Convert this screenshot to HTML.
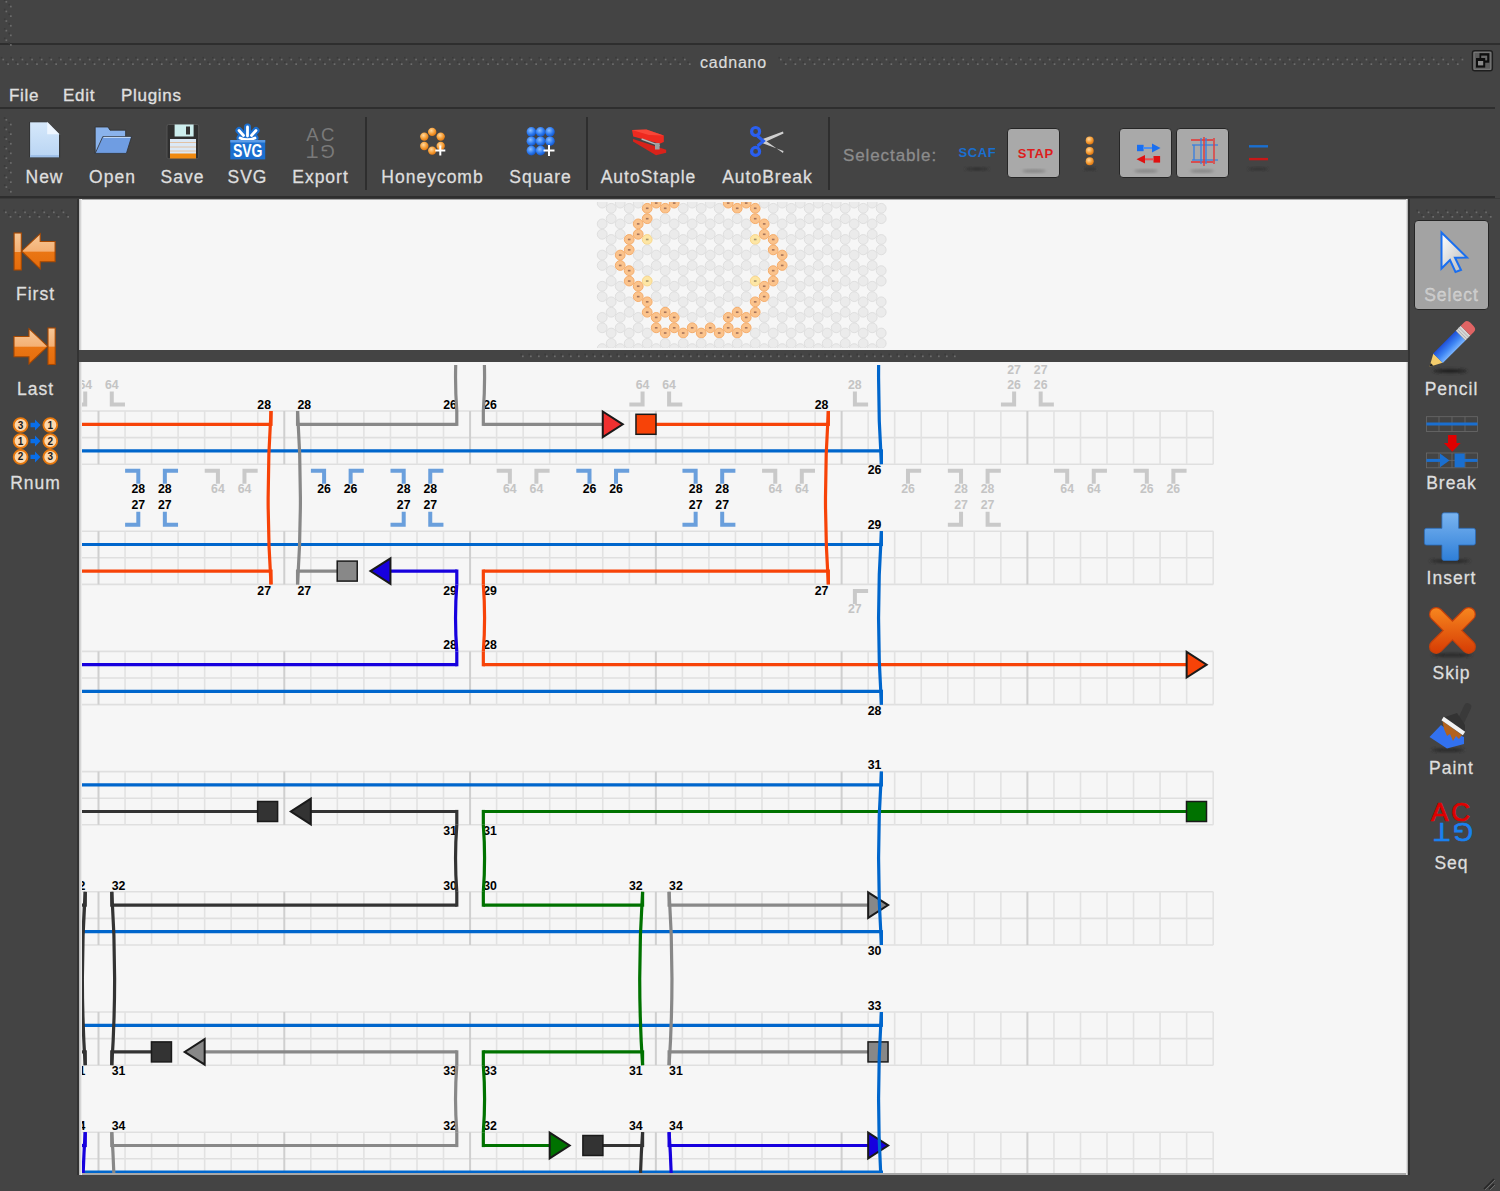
<!DOCTYPE html>
<html><head><meta charset="utf-8">
<style>
*{margin:0;padding:0;box-sizing:border-box}
html,body{width:1500px;height:1191px;overflow:hidden;background:#444444;font-family:"Liberation Sans",sans-serif}
.a{position:absolute}
.lbl{position:absolute;color:#dedede;font-size:17.5px;letter-spacing:1px;-webkit-text-stroke:0.3px #dedede;white-space:nowrap;transform:translateX(-50%);line-height:1;text-indent:1px}
.hl{position:absolute;left:0;width:1500px;height:2px;background:#2e2e2e}
.sep{position:absolute;width:2px;background:#2e2e2e;top:117px;height:73px}
.pl{font:bold 12.3px "Liberation Sans",sans-serif;text-anchor:middle}
.xl{font:bold 12.3px "Liberation Sans",sans-serif;text-anchor:middle;fill:#000}
</style></head><body>
<!-- top dark strip -->
<div class="hl" style="top:43px"></div>
<!-- title bar -->
<div class="a" style="left:700px;top:54px;font-size:16px;letter-spacing:0.8px;-webkit-text-stroke:0.2px #dcdcdc;color:#dcdcdc">cadnano</div>
<!-- menu -->
<div class="a" style="left:9px;top:86px;font-size:17px;letter-spacing:0.7px;-webkit-text-stroke:0.3px #e0e0e0;color:#e0e0e0">File</div>
<div class="a" style="left:63px;top:86px;font-size:17px;letter-spacing:0.7px;-webkit-text-stroke:0.3px #e0e0e0;color:#e0e0e0">Edit</div>
<div class="a" style="left:121px;top:86px;font-size:17px;letter-spacing:0.7px;-webkit-text-stroke:0.3px #e0e0e0;color:#e0e0e0">Plugins</div>
<div class="hl" style="top:107px;width:1495px;background:#2e2e2e"></div>
<!-- toolbar -->
<div class="sep" style="left:365px"></div>
<div class="sep" style="left:586px"></div>
<div class="sep" style="left:828px"></div>
<div class="lbl" style="left:44px;top:169px">New</div>
<div class="lbl" style="left:112px;top:169px">Open</div>
<div class="lbl" style="left:182px;top:169px">Save</div>
<div class="lbl" style="left:247px;top:169px">SVG</div>
<div class="lbl" style="left:320px;top:169px">Export</div>
<div class="lbl" style="left:432px;top:169px">Honeycomb</div>
<div class="lbl" style="left:540px;top:169px">Square</div>
<div class="lbl" style="left:648px;top:169px">AutoStaple</div>
<div class="lbl" style="left:767px;top:169px">AutoBreak</div>
<div class="a" style="left:843px;top:146px;font-size:17px;letter-spacing:0.9px;-webkit-text-stroke:0.3px #8c8c8c;color:#8c8c8c">Selectable:</div>
<div class="a" style="left:1007px;top:128px;width:53px;height:50px;background:#a9a9a9;border:1px solid #262626;border-radius:4px"></div>
<div class="a" style="left:1119px;top:128px;width:53px;height:50px;background:#a9a9a9;border:1px solid #262626;border-radius:4px"></div>
<div class="a" style="left:1176px;top:128px;width:53px;height:50px;background:#a9a9a9;border:1px solid #262626;border-radius:4px"></div>
<div class="hl" style="top:196px;height:2px;width:1495px;background:#2e2e2e"></div><div class="a" style="left:0;top:198px;width:1500px;height:1px;background:#3a3a3a"></div>

<!-- left sidebar labels -->
<div class="lbl" style="left:35px;top:286px">First</div>
<div class="lbl" style="left:35px;top:381px">Last</div>
<div class="lbl" style="left:35px;top:475px">Rnum</div>
<!-- right sidebar -->
<div class="a" style="left:1414px;top:220px;width:75px;height:90px;background:#a3a3a3;border:1px solid #262626;border-radius:4px"></div>
<div class="lbl" style="left:1451px;top:287px;color:#c8c8c8">Select</div>
<div class="lbl" style="left:1451px;top:381px">Pencil</div>
<div class="lbl" style="left:1451px;top:475px">Break</div>
<div class="lbl" style="left:1451px;top:570px">Insert</div>
<div class="lbl" style="left:1451px;top:665px">Skip</div>
<div class="lbl" style="left:1451px;top:760px">Paint</div>
<div class="lbl" style="left:1451px;top:855px">Seq</div>

<!-- slice view -->
<div class="a" style="left:79px;top:199px;width:1329px;height:151px;background:#f6f6f6;border-top:1px solid #a8a8a8"></div>
<svg class="a" style="left:0;top:0" width="1500" height="1191" viewBox="0 0 1500 1191">
<defs><clipPath id="cs"><rect x="82" y="202" width="1323" height="146"/></clipPath>
<clipPath id="cp"><rect x="82" y="365" width="1323" height="808"/></clipPath></defs>
<g clip-path="url(#cs)">
<circle cx="602.20" cy="192.71" r="4.9" fill="#ebebeb" stroke="#dfdfdf" stroke-width="1"/>
<circle cx="602.20" cy="203.10" r="4.9" fill="#ebebeb" stroke="#dfdfdf" stroke-width="1"/>
<circle cx="602.20" cy="223.89" r="4.9" fill="#ebebeb" stroke="#dfdfdf" stroke-width="1"/>
<circle cx="602.20" cy="234.28" r="4.9" fill="#ebebeb" stroke="#dfdfdf" stroke-width="1"/>
<circle cx="602.20" cy="255.07" r="4.9" fill="#ebebeb" stroke="#dfdfdf" stroke-width="1"/>
<circle cx="602.20" cy="265.46" r="4.9" fill="#ebebeb" stroke="#dfdfdf" stroke-width="1"/>
<circle cx="602.20" cy="286.24" r="4.9" fill="#ebebeb" stroke="#dfdfdf" stroke-width="1"/>
<circle cx="602.20" cy="296.63" r="4.9" fill="#ebebeb" stroke="#dfdfdf" stroke-width="1"/>
<circle cx="602.20" cy="317.42" r="4.9" fill="#ebebeb" stroke="#dfdfdf" stroke-width="1"/>
<circle cx="602.20" cy="327.81" r="4.9" fill="#ebebeb" stroke="#dfdfdf" stroke-width="1"/>
<circle cx="602.20" cy="348.60" r="4.9" fill="#ebebeb" stroke="#dfdfdf" stroke-width="1"/>
<circle cx="602.20" cy="358.99" r="4.9" fill="#ebebeb" stroke="#dfdfdf" stroke-width="1"/>
<circle cx="611.20" cy="208.30" r="4.9" fill="#ebebeb" stroke="#dfdfdf" stroke-width="1"/>
<circle cx="611.20" cy="218.69" r="4.9" fill="#ebebeb" stroke="#dfdfdf" stroke-width="1"/>
<circle cx="611.20" cy="239.48" r="4.9" fill="#ebebeb" stroke="#dfdfdf" stroke-width="1"/>
<circle cx="611.20" cy="249.87" r="4.9" fill="#ebebeb" stroke="#dfdfdf" stroke-width="1"/>
<circle cx="611.20" cy="270.65" r="4.9" fill="#ebebeb" stroke="#dfdfdf" stroke-width="1"/>
<circle cx="611.20" cy="281.05" r="4.9" fill="#ebebeb" stroke="#dfdfdf" stroke-width="1"/>
<circle cx="611.20" cy="301.83" r="4.9" fill="#ebebeb" stroke="#dfdfdf" stroke-width="1"/>
<circle cx="611.20" cy="312.22" r="4.9" fill="#ebebeb" stroke="#dfdfdf" stroke-width="1"/>
<circle cx="611.20" cy="333.01" r="4.9" fill="#ebebeb" stroke="#dfdfdf" stroke-width="1"/>
<circle cx="611.20" cy="343.40" r="4.9" fill="#ebebeb" stroke="#dfdfdf" stroke-width="1"/>
<circle cx="620.20" cy="192.71" r="4.9" fill="#ebebeb" stroke="#dfdfdf" stroke-width="1"/>
<circle cx="620.20" cy="203.10" r="4.9" fill="#ebebeb" stroke="#dfdfdf" stroke-width="1"/>
<circle cx="620.20" cy="223.89" r="4.9" fill="#ebebeb" stroke="#dfdfdf" stroke-width="1"/>
<circle cx="620.20" cy="234.28" r="4.9" fill="#ebebeb" stroke="#dfdfdf" stroke-width="1"/>
<circle cx="620.20" cy="255.07" r="4.9" fill="#fbc38c" stroke="#f5ad6c" stroke-width="1"/>
<rect x="618.90" y="254.27" width="2.6" height="1.6" fill="#8a5a4a" opacity="0.75"/>
<circle cx="620.20" cy="265.46" r="4.9" fill="#fbc38c" stroke="#f5ad6c" stroke-width="1"/>
<rect x="618.90" y="264.66" width="2.6" height="1.6" fill="#8a5a4a" opacity="0.75"/>
<circle cx="620.20" cy="286.24" r="4.9" fill="#ebebeb" stroke="#dfdfdf" stroke-width="1"/>
<circle cx="620.20" cy="296.63" r="4.9" fill="#ebebeb" stroke="#dfdfdf" stroke-width="1"/>
<circle cx="620.20" cy="317.42" r="4.9" fill="#ebebeb" stroke="#dfdfdf" stroke-width="1"/>
<circle cx="620.20" cy="327.81" r="4.9" fill="#ebebeb" stroke="#dfdfdf" stroke-width="1"/>
<circle cx="620.20" cy="348.60" r="4.9" fill="#ebebeb" stroke="#dfdfdf" stroke-width="1"/>
<circle cx="620.20" cy="358.99" r="4.9" fill="#ebebeb" stroke="#dfdfdf" stroke-width="1"/>
<circle cx="629.20" cy="208.30" r="4.9" fill="#ebebeb" stroke="#dfdfdf" stroke-width="1"/>
<circle cx="629.20" cy="218.69" r="4.9" fill="#ebebeb" stroke="#dfdfdf" stroke-width="1"/>
<circle cx="629.20" cy="239.48" r="4.9" fill="#fbc38c" stroke="#f5ad6c" stroke-width="1"/>
<rect x="627.90" y="238.68" width="2.6" height="1.6" fill="#8a5a4a" opacity="0.75"/>
<circle cx="629.20" cy="249.87" r="4.9" fill="#fbc38c" stroke="#f5ad6c" stroke-width="1"/>
<rect x="627.90" y="249.07" width="2.6" height="1.6" fill="#8a5a4a" opacity="0.75"/>
<circle cx="629.20" cy="270.65" r="4.9" fill="#fbc38c" stroke="#f5ad6c" stroke-width="1"/>
<rect x="627.90" y="269.85" width="2.6" height="1.6" fill="#8a5a4a" opacity="0.75"/>
<circle cx="629.20" cy="281.05" r="4.9" fill="#fbc38c" stroke="#f5ad6c" stroke-width="1"/>
<rect x="627.90" y="280.25" width="2.6" height="1.6" fill="#8a5a4a" opacity="0.75"/>
<circle cx="629.20" cy="301.83" r="4.9" fill="#ebebeb" stroke="#dfdfdf" stroke-width="1"/>
<circle cx="629.20" cy="312.22" r="4.9" fill="#ebebeb" stroke="#dfdfdf" stroke-width="1"/>
<circle cx="629.20" cy="333.01" r="4.9" fill="#ebebeb" stroke="#dfdfdf" stroke-width="1"/>
<circle cx="629.20" cy="343.40" r="4.9" fill="#ebebeb" stroke="#dfdfdf" stroke-width="1"/>
<circle cx="638.20" cy="192.71" r="4.9" fill="#ebebeb" stroke="#dfdfdf" stroke-width="1"/>
<circle cx="638.20" cy="203.10" r="4.9" fill="#ebebeb" stroke="#dfdfdf" stroke-width="1"/>
<circle cx="638.20" cy="223.89" r="4.9" fill="#fbc38c" stroke="#f5ad6c" stroke-width="1"/>
<rect x="636.90" y="223.09" width="2.6" height="1.6" fill="#8a5a4a" opacity="0.75"/>
<circle cx="638.20" cy="234.28" r="4.9" fill="#fbc38c" stroke="#f5ad6c" stroke-width="1"/>
<rect x="636.90" y="233.48" width="2.6" height="1.6" fill="#8a5a4a" opacity="0.75"/>
<circle cx="638.20" cy="255.07" r="4.9" fill="#ebebeb" stroke="#dfdfdf" stroke-width="1"/>
<circle cx="638.20" cy="265.46" r="4.9" fill="#ebebeb" stroke="#dfdfdf" stroke-width="1"/>
<circle cx="638.20" cy="286.24" r="4.9" fill="#fbc38c" stroke="#f5ad6c" stroke-width="1"/>
<rect x="636.90" y="285.44" width="2.6" height="1.6" fill="#8a5a4a" opacity="0.75"/>
<circle cx="638.20" cy="296.63" r="4.9" fill="#fbc38c" stroke="#f5ad6c" stroke-width="1"/>
<rect x="636.90" y="295.83" width="2.6" height="1.6" fill="#8a5a4a" opacity="0.75"/>
<circle cx="638.20" cy="317.42" r="4.9" fill="#ebebeb" stroke="#dfdfdf" stroke-width="1"/>
<circle cx="638.20" cy="327.81" r="4.9" fill="#ebebeb" stroke="#dfdfdf" stroke-width="1"/>
<circle cx="638.20" cy="348.60" r="4.9" fill="#ebebeb" stroke="#dfdfdf" stroke-width="1"/>
<circle cx="638.20" cy="358.99" r="4.9" fill="#ebebeb" stroke="#dfdfdf" stroke-width="1"/>
<circle cx="647.20" cy="208.30" r="4.9" fill="#fbc38c" stroke="#f5ad6c" stroke-width="1"/>
<rect x="645.90" y="207.50" width="2.6" height="1.6" fill="#8a5a4a" opacity="0.75"/>
<circle cx="647.20" cy="218.69" r="4.9" fill="#fbc38c" stroke="#f5ad6c" stroke-width="1"/>
<rect x="645.90" y="217.89" width="2.6" height="1.6" fill="#8a5a4a" opacity="0.75"/>
<circle cx="647.20" cy="239.48" r="4.9" fill="#fde6a4" stroke="#f8d68c" stroke-width="1"/>
<rect x="645.90" y="238.68" width="2.6" height="1.6" fill="#8a7a5a" opacity="0.75"/>
<circle cx="647.20" cy="249.87" r="4.9" fill="#ebebeb" stroke="#dfdfdf" stroke-width="1"/>
<circle cx="647.20" cy="270.65" r="4.9" fill="#ebebeb" stroke="#dfdfdf" stroke-width="1"/>
<circle cx="647.20" cy="281.05" r="4.9" fill="#fde6a4" stroke="#f8d68c" stroke-width="1"/>
<rect x="645.90" y="280.25" width="2.6" height="1.6" fill="#8a7a5a" opacity="0.75"/>
<circle cx="647.20" cy="301.83" r="4.9" fill="#fbc38c" stroke="#f5ad6c" stroke-width="1"/>
<rect x="645.90" y="301.03" width="2.6" height="1.6" fill="#8a5a4a" opacity="0.75"/>
<circle cx="647.20" cy="312.22" r="4.9" fill="#fbc38c" stroke="#f5ad6c" stroke-width="1"/>
<rect x="645.90" y="311.42" width="2.6" height="1.6" fill="#8a5a4a" opacity="0.75"/>
<circle cx="647.20" cy="333.01" r="4.9" fill="#ebebeb" stroke="#dfdfdf" stroke-width="1"/>
<circle cx="647.20" cy="343.40" r="4.9" fill="#ebebeb" stroke="#dfdfdf" stroke-width="1"/>
<circle cx="656.20" cy="192.71" r="4.9" fill="#ebebeb" stroke="#dfdfdf" stroke-width="1"/>
<circle cx="656.20" cy="203.10" r="4.9" fill="#fbc38c" stroke="#f5ad6c" stroke-width="1"/>
<rect x="654.90" y="202.30" width="2.6" height="1.6" fill="#8a5a4a" opacity="0.75"/>
<circle cx="656.20" cy="223.89" r="4.9" fill="#ebebeb" stroke="#dfdfdf" stroke-width="1"/>
<circle cx="656.20" cy="234.28" r="4.9" fill="#ebebeb" stroke="#dfdfdf" stroke-width="1"/>
<circle cx="656.20" cy="255.07" r="4.9" fill="#ebebeb" stroke="#dfdfdf" stroke-width="1"/>
<circle cx="656.20" cy="265.46" r="4.9" fill="#ebebeb" stroke="#dfdfdf" stroke-width="1"/>
<circle cx="656.20" cy="286.24" r="4.9" fill="#ebebeb" stroke="#dfdfdf" stroke-width="1"/>
<circle cx="656.20" cy="296.63" r="4.9" fill="#ebebeb" stroke="#dfdfdf" stroke-width="1"/>
<circle cx="656.20" cy="317.42" r="4.9" fill="#fbc38c" stroke="#f5ad6c" stroke-width="1"/>
<rect x="654.90" y="316.62" width="2.6" height="1.6" fill="#8a5a4a" opacity="0.75"/>
<circle cx="656.20" cy="327.81" r="4.9" fill="#fbc38c" stroke="#f5ad6c" stroke-width="1"/>
<rect x="654.90" y="327.01" width="2.6" height="1.6" fill="#8a5a4a" opacity="0.75"/>
<circle cx="656.20" cy="348.60" r="4.9" fill="#ebebeb" stroke="#dfdfdf" stroke-width="1"/>
<circle cx="656.20" cy="358.99" r="4.9" fill="#ebebeb" stroke="#dfdfdf" stroke-width="1"/>
<circle cx="665.20" cy="208.30" r="4.9" fill="#fbc38c" stroke="#f5ad6c" stroke-width="1"/>
<rect x="663.90" y="207.50" width="2.6" height="1.6" fill="#8a5a4a" opacity="0.75"/>
<circle cx="665.20" cy="218.69" r="4.9" fill="#ebebeb" stroke="#dfdfdf" stroke-width="1"/>
<circle cx="665.20" cy="239.48" r="4.9" fill="#ebebeb" stroke="#dfdfdf" stroke-width="1"/>
<circle cx="665.20" cy="249.87" r="4.9" fill="#ebebeb" stroke="#dfdfdf" stroke-width="1"/>
<circle cx="665.20" cy="270.65" r="4.9" fill="#ebebeb" stroke="#dfdfdf" stroke-width="1"/>
<circle cx="665.20" cy="281.05" r="4.9" fill="#ebebeb" stroke="#dfdfdf" stroke-width="1"/>
<circle cx="665.20" cy="301.83" r="4.9" fill="#ebebeb" stroke="#dfdfdf" stroke-width="1"/>
<circle cx="665.20" cy="312.22" r="4.9" fill="#fbc38c" stroke="#f5ad6c" stroke-width="1"/>
<rect x="663.90" y="311.42" width="2.6" height="1.6" fill="#8a5a4a" opacity="0.75"/>
<circle cx="665.20" cy="333.01" r="4.9" fill="#fbc38c" stroke="#f5ad6c" stroke-width="1"/>
<rect x="663.90" y="332.21" width="2.6" height="1.6" fill="#8a5a4a" opacity="0.75"/>
<circle cx="665.20" cy="343.40" r="4.9" fill="#ebebeb" stroke="#dfdfdf" stroke-width="1"/>
<circle cx="674.20" cy="192.71" r="4.9" fill="#ebebeb" stroke="#dfdfdf" stroke-width="1"/>
<circle cx="674.20" cy="203.10" r="4.9" fill="#fbc38c" stroke="#f5ad6c" stroke-width="1"/>
<rect x="672.90" y="202.30" width="2.6" height="1.6" fill="#8a5a4a" opacity="0.75"/>
<circle cx="674.20" cy="223.89" r="4.9" fill="#ebebeb" stroke="#dfdfdf" stroke-width="1"/>
<circle cx="674.20" cy="234.28" r="4.9" fill="#ebebeb" stroke="#dfdfdf" stroke-width="1"/>
<circle cx="674.20" cy="255.07" r="4.9" fill="#ebebeb" stroke="#dfdfdf" stroke-width="1"/>
<circle cx="674.20" cy="265.46" r="4.9" fill="#ebebeb" stroke="#dfdfdf" stroke-width="1"/>
<circle cx="674.20" cy="286.24" r="4.9" fill="#ebebeb" stroke="#dfdfdf" stroke-width="1"/>
<circle cx="674.20" cy="296.63" r="4.9" fill="#ebebeb" stroke="#dfdfdf" stroke-width="1"/>
<circle cx="674.20" cy="317.42" r="4.9" fill="#fbc38c" stroke="#f5ad6c" stroke-width="1"/>
<rect x="672.90" y="316.62" width="2.6" height="1.6" fill="#8a5a4a" opacity="0.75"/>
<circle cx="674.20" cy="327.81" r="4.9" fill="#fbc38c" stroke="#f5ad6c" stroke-width="1"/>
<rect x="672.90" y="327.01" width="2.6" height="1.6" fill="#8a5a4a" opacity="0.75"/>
<circle cx="674.20" cy="348.60" r="4.9" fill="#ebebeb" stroke="#dfdfdf" stroke-width="1"/>
<circle cx="674.20" cy="358.99" r="4.9" fill="#ebebeb" stroke="#dfdfdf" stroke-width="1"/>
<circle cx="683.20" cy="208.30" r="4.9" fill="#ebebeb" stroke="#dfdfdf" stroke-width="1"/>
<circle cx="683.20" cy="218.69" r="4.9" fill="#ebebeb" stroke="#dfdfdf" stroke-width="1"/>
<circle cx="683.20" cy="239.48" r="4.9" fill="#ebebeb" stroke="#dfdfdf" stroke-width="1"/>
<circle cx="683.20" cy="249.87" r="4.9" fill="#ebebeb" stroke="#dfdfdf" stroke-width="1"/>
<circle cx="683.20" cy="270.65" r="4.9" fill="#ebebeb" stroke="#dfdfdf" stroke-width="1"/>
<circle cx="683.20" cy="281.05" r="4.9" fill="#ebebeb" stroke="#dfdfdf" stroke-width="1"/>
<circle cx="683.20" cy="301.83" r="4.9" fill="#ebebeb" stroke="#dfdfdf" stroke-width="1"/>
<circle cx="683.20" cy="312.22" r="4.9" fill="#ebebeb" stroke="#dfdfdf" stroke-width="1"/>
<circle cx="683.20" cy="333.01" r="4.9" fill="#fbc38c" stroke="#f5ad6c" stroke-width="1"/>
<rect x="681.90" y="332.21" width="2.6" height="1.6" fill="#8a5a4a" opacity="0.75"/>
<circle cx="683.20" cy="343.40" r="4.9" fill="#ebebeb" stroke="#dfdfdf" stroke-width="1"/>
<circle cx="692.20" cy="192.71" r="4.9" fill="#ebebeb" stroke="#dfdfdf" stroke-width="1"/>
<circle cx="692.20" cy="203.10" r="4.9" fill="#ebebeb" stroke="#dfdfdf" stroke-width="1"/>
<circle cx="692.20" cy="223.89" r="4.9" fill="#ebebeb" stroke="#dfdfdf" stroke-width="1"/>
<circle cx="692.20" cy="234.28" r="4.9" fill="#ebebeb" stroke="#dfdfdf" stroke-width="1"/>
<circle cx="692.20" cy="255.07" r="4.9" fill="#ebebeb" stroke="#dfdfdf" stroke-width="1"/>
<circle cx="692.20" cy="265.46" r="4.9" fill="#ebebeb" stroke="#dfdfdf" stroke-width="1"/>
<circle cx="692.20" cy="286.24" r="4.9" fill="#ebebeb" stroke="#dfdfdf" stroke-width="1"/>
<circle cx="692.20" cy="296.63" r="4.9" fill="#ebebeb" stroke="#dfdfdf" stroke-width="1"/>
<circle cx="692.20" cy="317.42" r="4.9" fill="#ebebeb" stroke="#dfdfdf" stroke-width="1"/>
<circle cx="692.20" cy="327.81" r="4.9" fill="#fbc38c" stroke="#f5ad6c" stroke-width="1"/>
<rect x="690.90" y="327.01" width="2.6" height="1.6" fill="#8a5a4a" opacity="0.75"/>
<circle cx="692.20" cy="348.60" r="4.9" fill="#ebebeb" stroke="#dfdfdf" stroke-width="1"/>
<circle cx="692.20" cy="358.99" r="4.9" fill="#ebebeb" stroke="#dfdfdf" stroke-width="1"/>
<circle cx="701.20" cy="208.30" r="4.9" fill="#ebebeb" stroke="#dfdfdf" stroke-width="1"/>
<circle cx="701.20" cy="218.69" r="4.9" fill="#ebebeb" stroke="#dfdfdf" stroke-width="1"/>
<circle cx="701.20" cy="239.48" r="4.9" fill="#ebebeb" stroke="#dfdfdf" stroke-width="1"/>
<circle cx="701.20" cy="249.87" r="4.9" fill="#ebebeb" stroke="#dfdfdf" stroke-width="1"/>
<circle cx="701.20" cy="270.65" r="4.9" fill="#ebebeb" stroke="#dfdfdf" stroke-width="1"/>
<circle cx="701.20" cy="281.05" r="4.9" fill="#ebebeb" stroke="#dfdfdf" stroke-width="1"/>
<circle cx="701.20" cy="301.83" r="4.9" fill="#ebebeb" stroke="#dfdfdf" stroke-width="1"/>
<circle cx="701.20" cy="312.22" r="4.9" fill="#ebebeb" stroke="#dfdfdf" stroke-width="1"/>
<circle cx="701.20" cy="333.01" r="4.9" fill="#fbc38c" stroke="#f5ad6c" stroke-width="1"/>
<rect x="699.90" y="332.21" width="2.6" height="1.6" fill="#8a5a4a" opacity="0.75"/>
<circle cx="701.20" cy="343.40" r="4.9" fill="#ebebeb" stroke="#dfdfdf" stroke-width="1"/>
<circle cx="710.20" cy="192.71" r="4.9" fill="#ebebeb" stroke="#dfdfdf" stroke-width="1"/>
<circle cx="710.20" cy="203.10" r="4.9" fill="#ebebeb" stroke="#dfdfdf" stroke-width="1"/>
<circle cx="710.20" cy="223.89" r="4.9" fill="#ebebeb" stroke="#dfdfdf" stroke-width="1"/>
<circle cx="710.20" cy="234.28" r="4.9" fill="#ebebeb" stroke="#dfdfdf" stroke-width="1"/>
<circle cx="710.20" cy="255.07" r="4.9" fill="#ebebeb" stroke="#dfdfdf" stroke-width="1"/>
<circle cx="710.20" cy="265.46" r="4.9" fill="#ebebeb" stroke="#dfdfdf" stroke-width="1"/>
<circle cx="710.20" cy="286.24" r="4.9" fill="#ebebeb" stroke="#dfdfdf" stroke-width="1"/>
<circle cx="710.20" cy="296.63" r="4.9" fill="#ebebeb" stroke="#dfdfdf" stroke-width="1"/>
<circle cx="710.20" cy="317.42" r="4.9" fill="#ebebeb" stroke="#dfdfdf" stroke-width="1"/>
<circle cx="710.20" cy="327.81" r="4.9" fill="#fbc38c" stroke="#f5ad6c" stroke-width="1"/>
<rect x="708.90" y="327.01" width="2.6" height="1.6" fill="#8a5a4a" opacity="0.75"/>
<circle cx="710.20" cy="348.60" r="4.9" fill="#ebebeb" stroke="#dfdfdf" stroke-width="1"/>
<circle cx="710.20" cy="358.99" r="4.9" fill="#ebebeb" stroke="#dfdfdf" stroke-width="1"/>
<circle cx="719.20" cy="208.30" r="4.9" fill="#ebebeb" stroke="#dfdfdf" stroke-width="1"/>
<circle cx="719.20" cy="218.69" r="4.9" fill="#ebebeb" stroke="#dfdfdf" stroke-width="1"/>
<circle cx="719.20" cy="239.48" r="4.9" fill="#ebebeb" stroke="#dfdfdf" stroke-width="1"/>
<circle cx="719.20" cy="249.87" r="4.9" fill="#ebebeb" stroke="#dfdfdf" stroke-width="1"/>
<circle cx="719.20" cy="270.65" r="4.9" fill="#ebebeb" stroke="#dfdfdf" stroke-width="1"/>
<circle cx="719.20" cy="281.05" r="4.9" fill="#ebebeb" stroke="#dfdfdf" stroke-width="1"/>
<circle cx="719.20" cy="301.83" r="4.9" fill="#ebebeb" stroke="#dfdfdf" stroke-width="1"/>
<circle cx="719.20" cy="312.22" r="4.9" fill="#ebebeb" stroke="#dfdfdf" stroke-width="1"/>
<circle cx="719.20" cy="333.01" r="4.9" fill="#fbc38c" stroke="#f5ad6c" stroke-width="1"/>
<rect x="717.90" y="332.21" width="2.6" height="1.6" fill="#8a5a4a" opacity="0.75"/>
<circle cx="719.20" cy="343.40" r="4.9" fill="#ebebeb" stroke="#dfdfdf" stroke-width="1"/>
<circle cx="728.20" cy="192.71" r="4.9" fill="#ebebeb" stroke="#dfdfdf" stroke-width="1"/>
<circle cx="728.20" cy="203.10" r="4.9" fill="#fbc38c" stroke="#f5ad6c" stroke-width="1"/>
<rect x="726.90" y="202.30" width="2.6" height="1.6" fill="#8a5a4a" opacity="0.75"/>
<circle cx="728.20" cy="223.89" r="4.9" fill="#ebebeb" stroke="#dfdfdf" stroke-width="1"/>
<circle cx="728.20" cy="234.28" r="4.9" fill="#ebebeb" stroke="#dfdfdf" stroke-width="1"/>
<circle cx="728.20" cy="255.07" r="4.9" fill="#ebebeb" stroke="#dfdfdf" stroke-width="1"/>
<circle cx="728.20" cy="265.46" r="4.9" fill="#ebebeb" stroke="#dfdfdf" stroke-width="1"/>
<circle cx="728.20" cy="286.24" r="4.9" fill="#ebebeb" stroke="#dfdfdf" stroke-width="1"/>
<circle cx="728.20" cy="296.63" r="4.9" fill="#ebebeb" stroke="#dfdfdf" stroke-width="1"/>
<circle cx="728.20" cy="317.42" r="4.9" fill="#fbc38c" stroke="#f5ad6c" stroke-width="1"/>
<rect x="726.90" y="316.62" width="2.6" height="1.6" fill="#8a5a4a" opacity="0.75"/>
<circle cx="728.20" cy="327.81" r="4.9" fill="#fbc38c" stroke="#f5ad6c" stroke-width="1"/>
<rect x="726.90" y="327.01" width="2.6" height="1.6" fill="#8a5a4a" opacity="0.75"/>
<circle cx="728.20" cy="348.60" r="4.9" fill="#ebebeb" stroke="#dfdfdf" stroke-width="1"/>
<circle cx="728.20" cy="358.99" r="4.9" fill="#ebebeb" stroke="#dfdfdf" stroke-width="1"/>
<circle cx="737.20" cy="208.30" r="4.9" fill="#fbc38c" stroke="#f5ad6c" stroke-width="1"/>
<rect x="735.90" y="207.50" width="2.6" height="1.6" fill="#8a5a4a" opacity="0.75"/>
<circle cx="737.20" cy="218.69" r="4.9" fill="#ebebeb" stroke="#dfdfdf" stroke-width="1"/>
<circle cx="737.20" cy="239.48" r="4.9" fill="#ebebeb" stroke="#dfdfdf" stroke-width="1"/>
<circle cx="737.20" cy="249.87" r="4.9" fill="#ebebeb" stroke="#dfdfdf" stroke-width="1"/>
<circle cx="737.20" cy="270.65" r="4.9" fill="#ebebeb" stroke="#dfdfdf" stroke-width="1"/>
<circle cx="737.20" cy="281.05" r="4.9" fill="#ebebeb" stroke="#dfdfdf" stroke-width="1"/>
<circle cx="737.20" cy="301.83" r="4.9" fill="#ebebeb" stroke="#dfdfdf" stroke-width="1"/>
<circle cx="737.20" cy="312.22" r="4.9" fill="#fbc38c" stroke="#f5ad6c" stroke-width="1"/>
<rect x="735.90" y="311.42" width="2.6" height="1.6" fill="#8a5a4a" opacity="0.75"/>
<circle cx="737.20" cy="333.01" r="4.9" fill="#fbc38c" stroke="#f5ad6c" stroke-width="1"/>
<rect x="735.90" y="332.21" width="2.6" height="1.6" fill="#8a5a4a" opacity="0.75"/>
<circle cx="737.20" cy="343.40" r="4.9" fill="#ebebeb" stroke="#dfdfdf" stroke-width="1"/>
<circle cx="746.20" cy="192.71" r="4.9" fill="#ebebeb" stroke="#dfdfdf" stroke-width="1"/>
<circle cx="746.20" cy="203.10" r="4.9" fill="#fbc38c" stroke="#f5ad6c" stroke-width="1"/>
<rect x="744.90" y="202.30" width="2.6" height="1.6" fill="#8a5a4a" opacity="0.75"/>
<circle cx="746.20" cy="223.89" r="4.9" fill="#ebebeb" stroke="#dfdfdf" stroke-width="1"/>
<circle cx="746.20" cy="234.28" r="4.9" fill="#ebebeb" stroke="#dfdfdf" stroke-width="1"/>
<circle cx="746.20" cy="255.07" r="4.9" fill="#ebebeb" stroke="#dfdfdf" stroke-width="1"/>
<circle cx="746.20" cy="265.46" r="4.9" fill="#ebebeb" stroke="#dfdfdf" stroke-width="1"/>
<circle cx="746.20" cy="286.24" r="4.9" fill="#ebebeb" stroke="#dfdfdf" stroke-width="1"/>
<circle cx="746.20" cy="296.63" r="4.9" fill="#ebebeb" stroke="#dfdfdf" stroke-width="1"/>
<circle cx="746.20" cy="317.42" r="4.9" fill="#fbc38c" stroke="#f5ad6c" stroke-width="1"/>
<rect x="744.90" y="316.62" width="2.6" height="1.6" fill="#8a5a4a" opacity="0.75"/>
<circle cx="746.20" cy="327.81" r="4.9" fill="#fbc38c" stroke="#f5ad6c" stroke-width="1"/>
<rect x="744.90" y="327.01" width="2.6" height="1.6" fill="#8a5a4a" opacity="0.75"/>
<circle cx="746.20" cy="348.60" r="4.9" fill="#ebebeb" stroke="#dfdfdf" stroke-width="1"/>
<circle cx="746.20" cy="358.99" r="4.9" fill="#ebebeb" stroke="#dfdfdf" stroke-width="1"/>
<circle cx="755.20" cy="208.30" r="4.9" fill="#fbc38c" stroke="#f5ad6c" stroke-width="1"/>
<rect x="753.90" y="207.50" width="2.6" height="1.6" fill="#8a5a4a" opacity="0.75"/>
<circle cx="755.20" cy="218.69" r="4.9" fill="#fbc38c" stroke="#f5ad6c" stroke-width="1"/>
<rect x="753.90" y="217.89" width="2.6" height="1.6" fill="#8a5a4a" opacity="0.75"/>
<circle cx="755.20" cy="239.48" r="4.9" fill="#fde6a4" stroke="#f8d68c" stroke-width="1"/>
<rect x="753.90" y="238.68" width="2.6" height="1.6" fill="#8a7a5a" opacity="0.75"/>
<circle cx="755.20" cy="249.87" r="4.9" fill="#ebebeb" stroke="#dfdfdf" stroke-width="1"/>
<circle cx="755.20" cy="270.65" r="4.9" fill="#ebebeb" stroke="#dfdfdf" stroke-width="1"/>
<circle cx="755.20" cy="281.05" r="4.9" fill="#fde6a4" stroke="#f8d68c" stroke-width="1"/>
<rect x="753.90" y="280.25" width="2.6" height="1.6" fill="#8a7a5a" opacity="0.75"/>
<circle cx="755.20" cy="301.83" r="4.9" fill="#fbc38c" stroke="#f5ad6c" stroke-width="1"/>
<rect x="753.90" y="301.03" width="2.6" height="1.6" fill="#8a5a4a" opacity="0.75"/>
<circle cx="755.20" cy="312.22" r="4.9" fill="#fbc38c" stroke="#f5ad6c" stroke-width="1"/>
<rect x="753.90" y="311.42" width="2.6" height="1.6" fill="#8a5a4a" opacity="0.75"/>
<circle cx="755.20" cy="333.01" r="4.9" fill="#ebebeb" stroke="#dfdfdf" stroke-width="1"/>
<circle cx="755.20" cy="343.40" r="4.9" fill="#ebebeb" stroke="#dfdfdf" stroke-width="1"/>
<circle cx="764.20" cy="192.71" r="4.9" fill="#ebebeb" stroke="#dfdfdf" stroke-width="1"/>
<circle cx="764.20" cy="203.10" r="4.9" fill="#ebebeb" stroke="#dfdfdf" stroke-width="1"/>
<circle cx="764.20" cy="223.89" r="4.9" fill="#fbc38c" stroke="#f5ad6c" stroke-width="1"/>
<rect x="762.90" y="223.09" width="2.6" height="1.6" fill="#8a5a4a" opacity="0.75"/>
<circle cx="764.20" cy="234.28" r="4.9" fill="#fbc38c" stroke="#f5ad6c" stroke-width="1"/>
<rect x="762.90" y="233.48" width="2.6" height="1.6" fill="#8a5a4a" opacity="0.75"/>
<circle cx="764.20" cy="255.07" r="4.9" fill="#ebebeb" stroke="#dfdfdf" stroke-width="1"/>
<circle cx="764.20" cy="265.46" r="4.9" fill="#ebebeb" stroke="#dfdfdf" stroke-width="1"/>
<circle cx="764.20" cy="286.24" r="4.9" fill="#fbc38c" stroke="#f5ad6c" stroke-width="1"/>
<rect x="762.90" y="285.44" width="2.6" height="1.6" fill="#8a5a4a" opacity="0.75"/>
<circle cx="764.20" cy="296.63" r="4.9" fill="#fbc38c" stroke="#f5ad6c" stroke-width="1"/>
<rect x="762.90" y="295.83" width="2.6" height="1.6" fill="#8a5a4a" opacity="0.75"/>
<circle cx="764.20" cy="317.42" r="4.9" fill="#ebebeb" stroke="#dfdfdf" stroke-width="1"/>
<circle cx="764.20" cy="327.81" r="4.9" fill="#ebebeb" stroke="#dfdfdf" stroke-width="1"/>
<circle cx="764.20" cy="348.60" r="4.9" fill="#ebebeb" stroke="#dfdfdf" stroke-width="1"/>
<circle cx="764.20" cy="358.99" r="4.9" fill="#ebebeb" stroke="#dfdfdf" stroke-width="1"/>
<circle cx="773.20" cy="208.30" r="4.9" fill="#ebebeb" stroke="#dfdfdf" stroke-width="1"/>
<circle cx="773.20" cy="218.69" r="4.9" fill="#ebebeb" stroke="#dfdfdf" stroke-width="1"/>
<circle cx="773.20" cy="239.48" r="4.9" fill="#fbc38c" stroke="#f5ad6c" stroke-width="1"/>
<rect x="771.90" y="238.68" width="2.6" height="1.6" fill="#8a5a4a" opacity="0.75"/>
<circle cx="773.20" cy="249.87" r="4.9" fill="#fbc38c" stroke="#f5ad6c" stroke-width="1"/>
<rect x="771.90" y="249.07" width="2.6" height="1.6" fill="#8a5a4a" opacity="0.75"/>
<circle cx="773.20" cy="270.65" r="4.9" fill="#fbc38c" stroke="#f5ad6c" stroke-width="1"/>
<rect x="771.90" y="269.85" width="2.6" height="1.6" fill="#8a5a4a" opacity="0.75"/>
<circle cx="773.20" cy="281.05" r="4.9" fill="#fbc38c" stroke="#f5ad6c" stroke-width="1"/>
<rect x="771.90" y="280.25" width="2.6" height="1.6" fill="#8a5a4a" opacity="0.75"/>
<circle cx="773.20" cy="301.83" r="4.9" fill="#ebebeb" stroke="#dfdfdf" stroke-width="1"/>
<circle cx="773.20" cy="312.22" r="4.9" fill="#ebebeb" stroke="#dfdfdf" stroke-width="1"/>
<circle cx="773.20" cy="333.01" r="4.9" fill="#ebebeb" stroke="#dfdfdf" stroke-width="1"/>
<circle cx="773.20" cy="343.40" r="4.9" fill="#ebebeb" stroke="#dfdfdf" stroke-width="1"/>
<circle cx="782.20" cy="192.71" r="4.9" fill="#ebebeb" stroke="#dfdfdf" stroke-width="1"/>
<circle cx="782.20" cy="203.10" r="4.9" fill="#ebebeb" stroke="#dfdfdf" stroke-width="1"/>
<circle cx="782.20" cy="223.89" r="4.9" fill="#ebebeb" stroke="#dfdfdf" stroke-width="1"/>
<circle cx="782.20" cy="234.28" r="4.9" fill="#ebebeb" stroke="#dfdfdf" stroke-width="1"/>
<circle cx="782.20" cy="255.07" r="4.9" fill="#fbc38c" stroke="#f5ad6c" stroke-width="1"/>
<rect x="780.90" y="254.27" width="2.6" height="1.6" fill="#8a5a4a" opacity="0.75"/>
<circle cx="782.20" cy="265.46" r="4.9" fill="#fbc38c" stroke="#f5ad6c" stroke-width="1"/>
<rect x="780.90" y="264.66" width="2.6" height="1.6" fill="#8a5a4a" opacity="0.75"/>
<circle cx="782.20" cy="286.24" r="4.9" fill="#ebebeb" stroke="#dfdfdf" stroke-width="1"/>
<circle cx="782.20" cy="296.63" r="4.9" fill="#ebebeb" stroke="#dfdfdf" stroke-width="1"/>
<circle cx="782.20" cy="317.42" r="4.9" fill="#ebebeb" stroke="#dfdfdf" stroke-width="1"/>
<circle cx="782.20" cy="327.81" r="4.9" fill="#ebebeb" stroke="#dfdfdf" stroke-width="1"/>
<circle cx="782.20" cy="348.60" r="4.9" fill="#ebebeb" stroke="#dfdfdf" stroke-width="1"/>
<circle cx="782.20" cy="358.99" r="4.9" fill="#ebebeb" stroke="#dfdfdf" stroke-width="1"/>
<circle cx="791.20" cy="208.30" r="4.9" fill="#ebebeb" stroke="#dfdfdf" stroke-width="1"/>
<circle cx="791.20" cy="218.69" r="4.9" fill="#ebebeb" stroke="#dfdfdf" stroke-width="1"/>
<circle cx="791.20" cy="239.48" r="4.9" fill="#ebebeb" stroke="#dfdfdf" stroke-width="1"/>
<circle cx="791.20" cy="249.87" r="4.9" fill="#ebebeb" stroke="#dfdfdf" stroke-width="1"/>
<circle cx="791.20" cy="270.65" r="4.9" fill="#ebebeb" stroke="#dfdfdf" stroke-width="1"/>
<circle cx="791.20" cy="281.05" r="4.9" fill="#ebebeb" stroke="#dfdfdf" stroke-width="1"/>
<circle cx="791.20" cy="301.83" r="4.9" fill="#ebebeb" stroke="#dfdfdf" stroke-width="1"/>
<circle cx="791.20" cy="312.22" r="4.9" fill="#ebebeb" stroke="#dfdfdf" stroke-width="1"/>
<circle cx="791.20" cy="333.01" r="4.9" fill="#ebebeb" stroke="#dfdfdf" stroke-width="1"/>
<circle cx="791.20" cy="343.40" r="4.9" fill="#ebebeb" stroke="#dfdfdf" stroke-width="1"/>
<circle cx="800.20" cy="192.71" r="4.9" fill="#ebebeb" stroke="#dfdfdf" stroke-width="1"/>
<circle cx="800.20" cy="203.10" r="4.9" fill="#ebebeb" stroke="#dfdfdf" stroke-width="1"/>
<circle cx="800.20" cy="223.89" r="4.9" fill="#ebebeb" stroke="#dfdfdf" stroke-width="1"/>
<circle cx="800.20" cy="234.28" r="4.9" fill="#ebebeb" stroke="#dfdfdf" stroke-width="1"/>
<circle cx="800.20" cy="255.07" r="4.9" fill="#ebebeb" stroke="#dfdfdf" stroke-width="1"/>
<circle cx="800.20" cy="265.46" r="4.9" fill="#ebebeb" stroke="#dfdfdf" stroke-width="1"/>
<circle cx="800.20" cy="286.24" r="4.9" fill="#ebebeb" stroke="#dfdfdf" stroke-width="1"/>
<circle cx="800.20" cy="296.63" r="4.9" fill="#ebebeb" stroke="#dfdfdf" stroke-width="1"/>
<circle cx="800.20" cy="317.42" r="4.9" fill="#ebebeb" stroke="#dfdfdf" stroke-width="1"/>
<circle cx="800.20" cy="327.81" r="4.9" fill="#ebebeb" stroke="#dfdfdf" stroke-width="1"/>
<circle cx="800.20" cy="348.60" r="4.9" fill="#ebebeb" stroke="#dfdfdf" stroke-width="1"/>
<circle cx="800.20" cy="358.99" r="4.9" fill="#ebebeb" stroke="#dfdfdf" stroke-width="1"/>
<circle cx="809.20" cy="208.30" r="4.9" fill="#ebebeb" stroke="#dfdfdf" stroke-width="1"/>
<circle cx="809.20" cy="218.69" r="4.9" fill="#ebebeb" stroke="#dfdfdf" stroke-width="1"/>
<circle cx="809.20" cy="239.48" r="4.9" fill="#ebebeb" stroke="#dfdfdf" stroke-width="1"/>
<circle cx="809.20" cy="249.87" r="4.9" fill="#ebebeb" stroke="#dfdfdf" stroke-width="1"/>
<circle cx="809.20" cy="270.65" r="4.9" fill="#ebebeb" stroke="#dfdfdf" stroke-width="1"/>
<circle cx="809.20" cy="281.05" r="4.9" fill="#ebebeb" stroke="#dfdfdf" stroke-width="1"/>
<circle cx="809.20" cy="301.83" r="4.9" fill="#ebebeb" stroke="#dfdfdf" stroke-width="1"/>
<circle cx="809.20" cy="312.22" r="4.9" fill="#ebebeb" stroke="#dfdfdf" stroke-width="1"/>
<circle cx="809.20" cy="333.01" r="4.9" fill="#ebebeb" stroke="#dfdfdf" stroke-width="1"/>
<circle cx="809.20" cy="343.40" r="4.9" fill="#ebebeb" stroke="#dfdfdf" stroke-width="1"/>
<circle cx="818.20" cy="192.71" r="4.9" fill="#ebebeb" stroke="#dfdfdf" stroke-width="1"/>
<circle cx="818.20" cy="203.10" r="4.9" fill="#ebebeb" stroke="#dfdfdf" stroke-width="1"/>
<circle cx="818.20" cy="223.89" r="4.9" fill="#ebebeb" stroke="#dfdfdf" stroke-width="1"/>
<circle cx="818.20" cy="234.28" r="4.9" fill="#ebebeb" stroke="#dfdfdf" stroke-width="1"/>
<circle cx="818.20" cy="255.07" r="4.9" fill="#ebebeb" stroke="#dfdfdf" stroke-width="1"/>
<circle cx="818.20" cy="265.46" r="4.9" fill="#ebebeb" stroke="#dfdfdf" stroke-width="1"/>
<circle cx="818.20" cy="286.24" r="4.9" fill="#ebebeb" stroke="#dfdfdf" stroke-width="1"/>
<circle cx="818.20" cy="296.63" r="4.9" fill="#ebebeb" stroke="#dfdfdf" stroke-width="1"/>
<circle cx="818.20" cy="317.42" r="4.9" fill="#ebebeb" stroke="#dfdfdf" stroke-width="1"/>
<circle cx="818.20" cy="327.81" r="4.9" fill="#ebebeb" stroke="#dfdfdf" stroke-width="1"/>
<circle cx="818.20" cy="348.60" r="4.9" fill="#ebebeb" stroke="#dfdfdf" stroke-width="1"/>
<circle cx="818.20" cy="358.99" r="4.9" fill="#ebebeb" stroke="#dfdfdf" stroke-width="1"/>
<circle cx="827.20" cy="208.30" r="4.9" fill="#ebebeb" stroke="#dfdfdf" stroke-width="1"/>
<circle cx="827.20" cy="218.69" r="4.9" fill="#ebebeb" stroke="#dfdfdf" stroke-width="1"/>
<circle cx="827.20" cy="239.48" r="4.9" fill="#ebebeb" stroke="#dfdfdf" stroke-width="1"/>
<circle cx="827.20" cy="249.87" r="4.9" fill="#ebebeb" stroke="#dfdfdf" stroke-width="1"/>
<circle cx="827.20" cy="270.65" r="4.9" fill="#ebebeb" stroke="#dfdfdf" stroke-width="1"/>
<circle cx="827.20" cy="281.05" r="4.9" fill="#ebebeb" stroke="#dfdfdf" stroke-width="1"/>
<circle cx="827.20" cy="301.83" r="4.9" fill="#ebebeb" stroke="#dfdfdf" stroke-width="1"/>
<circle cx="827.20" cy="312.22" r="4.9" fill="#ebebeb" stroke="#dfdfdf" stroke-width="1"/>
<circle cx="827.20" cy="333.01" r="4.9" fill="#ebebeb" stroke="#dfdfdf" stroke-width="1"/>
<circle cx="827.20" cy="343.40" r="4.9" fill="#ebebeb" stroke="#dfdfdf" stroke-width="1"/>
<circle cx="836.20" cy="192.71" r="4.9" fill="#ebebeb" stroke="#dfdfdf" stroke-width="1"/>
<circle cx="836.20" cy="203.10" r="4.9" fill="#ebebeb" stroke="#dfdfdf" stroke-width="1"/>
<circle cx="836.20" cy="223.89" r="4.9" fill="#ebebeb" stroke="#dfdfdf" stroke-width="1"/>
<circle cx="836.20" cy="234.28" r="4.9" fill="#ebebeb" stroke="#dfdfdf" stroke-width="1"/>
<circle cx="836.20" cy="255.07" r="4.9" fill="#ebebeb" stroke="#dfdfdf" stroke-width="1"/>
<circle cx="836.20" cy="265.46" r="4.9" fill="#ebebeb" stroke="#dfdfdf" stroke-width="1"/>
<circle cx="836.20" cy="286.24" r="4.9" fill="#ebebeb" stroke="#dfdfdf" stroke-width="1"/>
<circle cx="836.20" cy="296.63" r="4.9" fill="#ebebeb" stroke="#dfdfdf" stroke-width="1"/>
<circle cx="836.20" cy="317.42" r="4.9" fill="#ebebeb" stroke="#dfdfdf" stroke-width="1"/>
<circle cx="836.20" cy="327.81" r="4.9" fill="#ebebeb" stroke="#dfdfdf" stroke-width="1"/>
<circle cx="836.20" cy="348.60" r="4.9" fill="#ebebeb" stroke="#dfdfdf" stroke-width="1"/>
<circle cx="836.20" cy="358.99" r="4.9" fill="#ebebeb" stroke="#dfdfdf" stroke-width="1"/>
<circle cx="845.20" cy="208.30" r="4.9" fill="#ebebeb" stroke="#dfdfdf" stroke-width="1"/>
<circle cx="845.20" cy="218.69" r="4.9" fill="#ebebeb" stroke="#dfdfdf" stroke-width="1"/>
<circle cx="845.20" cy="239.48" r="4.9" fill="#ebebeb" stroke="#dfdfdf" stroke-width="1"/>
<circle cx="845.20" cy="249.87" r="4.9" fill="#ebebeb" stroke="#dfdfdf" stroke-width="1"/>
<circle cx="845.20" cy="270.65" r="4.9" fill="#ebebeb" stroke="#dfdfdf" stroke-width="1"/>
<circle cx="845.20" cy="281.05" r="4.9" fill="#ebebeb" stroke="#dfdfdf" stroke-width="1"/>
<circle cx="845.20" cy="301.83" r="4.9" fill="#ebebeb" stroke="#dfdfdf" stroke-width="1"/>
<circle cx="845.20" cy="312.22" r="4.9" fill="#ebebeb" stroke="#dfdfdf" stroke-width="1"/>
<circle cx="845.20" cy="333.01" r="4.9" fill="#ebebeb" stroke="#dfdfdf" stroke-width="1"/>
<circle cx="845.20" cy="343.40" r="4.9" fill="#ebebeb" stroke="#dfdfdf" stroke-width="1"/>
<circle cx="854.20" cy="192.71" r="4.9" fill="#ebebeb" stroke="#dfdfdf" stroke-width="1"/>
<circle cx="854.20" cy="203.10" r="4.9" fill="#ebebeb" stroke="#dfdfdf" stroke-width="1"/>
<circle cx="854.20" cy="223.89" r="4.9" fill="#ebebeb" stroke="#dfdfdf" stroke-width="1"/>
<circle cx="854.20" cy="234.28" r="4.9" fill="#ebebeb" stroke="#dfdfdf" stroke-width="1"/>
<circle cx="854.20" cy="255.07" r="4.9" fill="#ebebeb" stroke="#dfdfdf" stroke-width="1"/>
<circle cx="854.20" cy="265.46" r="4.9" fill="#ebebeb" stroke="#dfdfdf" stroke-width="1"/>
<circle cx="854.20" cy="286.24" r="4.9" fill="#ebebeb" stroke="#dfdfdf" stroke-width="1"/>
<circle cx="854.20" cy="296.63" r="4.9" fill="#ebebeb" stroke="#dfdfdf" stroke-width="1"/>
<circle cx="854.20" cy="317.42" r="4.9" fill="#ebebeb" stroke="#dfdfdf" stroke-width="1"/>
<circle cx="854.20" cy="327.81" r="4.9" fill="#ebebeb" stroke="#dfdfdf" stroke-width="1"/>
<circle cx="854.20" cy="348.60" r="4.9" fill="#ebebeb" stroke="#dfdfdf" stroke-width="1"/>
<circle cx="854.20" cy="358.99" r="4.9" fill="#ebebeb" stroke="#dfdfdf" stroke-width="1"/>
<circle cx="863.20" cy="208.30" r="4.9" fill="#ebebeb" stroke="#dfdfdf" stroke-width="1"/>
<circle cx="863.20" cy="218.69" r="4.9" fill="#ebebeb" stroke="#dfdfdf" stroke-width="1"/>
<circle cx="863.20" cy="239.48" r="4.9" fill="#ebebeb" stroke="#dfdfdf" stroke-width="1"/>
<circle cx="863.20" cy="249.87" r="4.9" fill="#ebebeb" stroke="#dfdfdf" stroke-width="1"/>
<circle cx="863.20" cy="270.65" r="4.9" fill="#ebebeb" stroke="#dfdfdf" stroke-width="1"/>
<circle cx="863.20" cy="281.05" r="4.9" fill="#ebebeb" stroke="#dfdfdf" stroke-width="1"/>
<circle cx="863.20" cy="301.83" r="4.9" fill="#ebebeb" stroke="#dfdfdf" stroke-width="1"/>
<circle cx="863.20" cy="312.22" r="4.9" fill="#ebebeb" stroke="#dfdfdf" stroke-width="1"/>
<circle cx="863.20" cy="333.01" r="4.9" fill="#ebebeb" stroke="#dfdfdf" stroke-width="1"/>
<circle cx="863.20" cy="343.40" r="4.9" fill="#ebebeb" stroke="#dfdfdf" stroke-width="1"/>
<circle cx="872.20" cy="192.71" r="4.9" fill="#ebebeb" stroke="#dfdfdf" stroke-width="1"/>
<circle cx="872.20" cy="203.10" r="4.9" fill="#ebebeb" stroke="#dfdfdf" stroke-width="1"/>
<circle cx="872.20" cy="223.89" r="4.9" fill="#ebebeb" stroke="#dfdfdf" stroke-width="1"/>
<circle cx="872.20" cy="234.28" r="4.9" fill="#ebebeb" stroke="#dfdfdf" stroke-width="1"/>
<circle cx="872.20" cy="255.07" r="4.9" fill="#ebebeb" stroke="#dfdfdf" stroke-width="1"/>
<circle cx="872.20" cy="265.46" r="4.9" fill="#ebebeb" stroke="#dfdfdf" stroke-width="1"/>
<circle cx="872.20" cy="286.24" r="4.9" fill="#ebebeb" stroke="#dfdfdf" stroke-width="1"/>
<circle cx="872.20" cy="296.63" r="4.9" fill="#ebebeb" stroke="#dfdfdf" stroke-width="1"/>
<circle cx="872.20" cy="317.42" r="4.9" fill="#ebebeb" stroke="#dfdfdf" stroke-width="1"/>
<circle cx="872.20" cy="327.81" r="4.9" fill="#ebebeb" stroke="#dfdfdf" stroke-width="1"/>
<circle cx="872.20" cy="348.60" r="4.9" fill="#ebebeb" stroke="#dfdfdf" stroke-width="1"/>
<circle cx="872.20" cy="358.99" r="4.9" fill="#ebebeb" stroke="#dfdfdf" stroke-width="1"/>
<circle cx="881.20" cy="208.30" r="4.9" fill="#ebebeb" stroke="#dfdfdf" stroke-width="1"/>
<circle cx="881.20" cy="218.69" r="4.9" fill="#ebebeb" stroke="#dfdfdf" stroke-width="1"/>
<circle cx="881.20" cy="239.48" r="4.9" fill="#ebebeb" stroke="#dfdfdf" stroke-width="1"/>
<circle cx="881.20" cy="249.87" r="4.9" fill="#ebebeb" stroke="#dfdfdf" stroke-width="1"/>
<circle cx="881.20" cy="270.65" r="4.9" fill="#ebebeb" stroke="#dfdfdf" stroke-width="1"/>
<circle cx="881.20" cy="281.05" r="4.9" fill="#ebebeb" stroke="#dfdfdf" stroke-width="1"/>
<circle cx="881.20" cy="301.83" r="4.9" fill="#ebebeb" stroke="#dfdfdf" stroke-width="1"/>
<circle cx="881.20" cy="312.22" r="4.9" fill="#ebebeb" stroke="#dfdfdf" stroke-width="1"/>
<circle cx="881.20" cy="333.01" r="4.9" fill="#ebebeb" stroke="#dfdfdf" stroke-width="1"/>
<circle cx="881.20" cy="343.40" r="4.9" fill="#ebebeb" stroke="#dfdfdf" stroke-width="1"/>
</g>
<rect x="79" y="362" width="1329" height="813" fill="#f6f6f6"/>
<rect x="79" y="1173" width="1329" height="2" fill="#a8a8a8"/>
<g clip-path="url(#cp)">
<line x1="80" y1="411.00" x2="1213.18" y2="411.00" stroke="#dfdfdf" stroke-width="1.6"/>
<line x1="80" y1="437.60" x2="1213.18" y2="437.60" stroke="#dfdfdf" stroke-width="1.6"/>
<line x1="80" y1="464.20" x2="1213.18" y2="464.20" stroke="#dfdfdf" stroke-width="1.6"/>
<line x1="98.50" y1="411.00" x2="98.50" y2="464.20" stroke="#cfcfcf" stroke-width="2.0"/>
<line x1="125.04" y1="411.00" x2="125.04" y2="464.20" stroke="#e2e2e2" stroke-width="1.6"/>
<line x1="151.58" y1="411.00" x2="151.58" y2="464.20" stroke="#e2e2e2" stroke-width="1.6"/>
<line x1="178.12" y1="411.00" x2="178.12" y2="464.20" stroke="#e2e2e2" stroke-width="1.6"/>
<line x1="204.66" y1="411.00" x2="204.66" y2="464.20" stroke="#e2e2e2" stroke-width="1.6"/>
<line x1="231.20" y1="411.00" x2="231.20" y2="464.20" stroke="#e2e2e2" stroke-width="1.6"/>
<line x1="257.74" y1="411.00" x2="257.74" y2="464.20" stroke="#e2e2e2" stroke-width="1.6"/>
<line x1="284.28" y1="411.00" x2="284.28" y2="464.20" stroke="#cfcfcf" stroke-width="2.0"/>
<line x1="310.82" y1="411.00" x2="310.82" y2="464.20" stroke="#e2e2e2" stroke-width="1.6"/>
<line x1="337.36" y1="411.00" x2="337.36" y2="464.20" stroke="#e2e2e2" stroke-width="1.6"/>
<line x1="363.90" y1="411.00" x2="363.90" y2="464.20" stroke="#e2e2e2" stroke-width="1.6"/>
<line x1="390.44" y1="411.00" x2="390.44" y2="464.20" stroke="#e2e2e2" stroke-width="1.6"/>
<line x1="416.98" y1="411.00" x2="416.98" y2="464.20" stroke="#e2e2e2" stroke-width="1.6"/>
<line x1="443.52" y1="411.00" x2="443.52" y2="464.20" stroke="#e2e2e2" stroke-width="1.6"/>
<line x1="470.06" y1="411.00" x2="470.06" y2="464.20" stroke="#cfcfcf" stroke-width="2.0"/>
<line x1="496.60" y1="411.00" x2="496.60" y2="464.20" stroke="#e2e2e2" stroke-width="1.6"/>
<line x1="523.14" y1="411.00" x2="523.14" y2="464.20" stroke="#e2e2e2" stroke-width="1.6"/>
<line x1="549.68" y1="411.00" x2="549.68" y2="464.20" stroke="#e2e2e2" stroke-width="1.6"/>
<line x1="576.22" y1="411.00" x2="576.22" y2="464.20" stroke="#e2e2e2" stroke-width="1.6"/>
<line x1="602.76" y1="411.00" x2="602.76" y2="464.20" stroke="#e2e2e2" stroke-width="1.6"/>
<line x1="629.30" y1="411.00" x2="629.30" y2="464.20" stroke="#e2e2e2" stroke-width="1.6"/>
<line x1="655.84" y1="411.00" x2="655.84" y2="464.20" stroke="#cfcfcf" stroke-width="2.0"/>
<line x1="682.38" y1="411.00" x2="682.38" y2="464.20" stroke="#e2e2e2" stroke-width="1.6"/>
<line x1="708.92" y1="411.00" x2="708.92" y2="464.20" stroke="#e2e2e2" stroke-width="1.6"/>
<line x1="735.46" y1="411.00" x2="735.46" y2="464.20" stroke="#e2e2e2" stroke-width="1.6"/>
<line x1="762.00" y1="411.00" x2="762.00" y2="464.20" stroke="#e2e2e2" stroke-width="1.6"/>
<line x1="788.54" y1="411.00" x2="788.54" y2="464.20" stroke="#e2e2e2" stroke-width="1.6"/>
<line x1="815.08" y1="411.00" x2="815.08" y2="464.20" stroke="#e2e2e2" stroke-width="1.6"/>
<line x1="841.62" y1="411.00" x2="841.62" y2="464.20" stroke="#cfcfcf" stroke-width="2.0"/>
<line x1="868.16" y1="411.00" x2="868.16" y2="464.20" stroke="#e2e2e2" stroke-width="1.6"/>
<line x1="894.70" y1="411.00" x2="894.70" y2="464.20" stroke="#e2e2e2" stroke-width="1.6"/>
<line x1="921.24" y1="411.00" x2="921.24" y2="464.20" stroke="#e2e2e2" stroke-width="1.6"/>
<line x1="947.78" y1="411.00" x2="947.78" y2="464.20" stroke="#e2e2e2" stroke-width="1.6"/>
<line x1="974.32" y1="411.00" x2="974.32" y2="464.20" stroke="#e2e2e2" stroke-width="1.6"/>
<line x1="1000.86" y1="411.00" x2="1000.86" y2="464.20" stroke="#e2e2e2" stroke-width="1.6"/>
<line x1="1027.40" y1="411.00" x2="1027.40" y2="464.20" stroke="#cfcfcf" stroke-width="2.0"/>
<line x1="1053.94" y1="411.00" x2="1053.94" y2="464.20" stroke="#e2e2e2" stroke-width="1.6"/>
<line x1="1080.48" y1="411.00" x2="1080.48" y2="464.20" stroke="#e2e2e2" stroke-width="1.6"/>
<line x1="1107.02" y1="411.00" x2="1107.02" y2="464.20" stroke="#e2e2e2" stroke-width="1.6"/>
<line x1="1133.56" y1="411.00" x2="1133.56" y2="464.20" stroke="#e2e2e2" stroke-width="1.6"/>
<line x1="1160.10" y1="411.00" x2="1160.10" y2="464.20" stroke="#e2e2e2" stroke-width="1.6"/>
<line x1="1186.64" y1="411.00" x2="1186.64" y2="464.20" stroke="#e2e2e2" stroke-width="1.6"/>
<line x1="1213.18" y1="411.00" x2="1213.18" y2="464.20" stroke="#e2e2e2" stroke-width="1.6"/>
<line x1="80" y1="531.20" x2="1213.18" y2="531.20" stroke="#dfdfdf" stroke-width="1.6"/>
<line x1="80" y1="557.80" x2="1213.18" y2="557.80" stroke="#dfdfdf" stroke-width="1.6"/>
<line x1="80" y1="584.40" x2="1213.18" y2="584.40" stroke="#dfdfdf" stroke-width="1.6"/>
<line x1="98.50" y1="531.20" x2="98.50" y2="584.40" stroke="#cfcfcf" stroke-width="2.0"/>
<line x1="125.04" y1="531.20" x2="125.04" y2="584.40" stroke="#e2e2e2" stroke-width="1.6"/>
<line x1="151.58" y1="531.20" x2="151.58" y2="584.40" stroke="#e2e2e2" stroke-width="1.6"/>
<line x1="178.12" y1="531.20" x2="178.12" y2="584.40" stroke="#e2e2e2" stroke-width="1.6"/>
<line x1="204.66" y1="531.20" x2="204.66" y2="584.40" stroke="#e2e2e2" stroke-width="1.6"/>
<line x1="231.20" y1="531.20" x2="231.20" y2="584.40" stroke="#e2e2e2" stroke-width="1.6"/>
<line x1="257.74" y1="531.20" x2="257.74" y2="584.40" stroke="#e2e2e2" stroke-width="1.6"/>
<line x1="284.28" y1="531.20" x2="284.28" y2="584.40" stroke="#cfcfcf" stroke-width="2.0"/>
<line x1="310.82" y1="531.20" x2="310.82" y2="584.40" stroke="#e2e2e2" stroke-width="1.6"/>
<line x1="337.36" y1="531.20" x2="337.36" y2="584.40" stroke="#e2e2e2" stroke-width="1.6"/>
<line x1="363.90" y1="531.20" x2="363.90" y2="584.40" stroke="#e2e2e2" stroke-width="1.6"/>
<line x1="390.44" y1="531.20" x2="390.44" y2="584.40" stroke="#e2e2e2" stroke-width="1.6"/>
<line x1="416.98" y1="531.20" x2="416.98" y2="584.40" stroke="#e2e2e2" stroke-width="1.6"/>
<line x1="443.52" y1="531.20" x2="443.52" y2="584.40" stroke="#e2e2e2" stroke-width="1.6"/>
<line x1="470.06" y1="531.20" x2="470.06" y2="584.40" stroke="#cfcfcf" stroke-width="2.0"/>
<line x1="496.60" y1="531.20" x2="496.60" y2="584.40" stroke="#e2e2e2" stroke-width="1.6"/>
<line x1="523.14" y1="531.20" x2="523.14" y2="584.40" stroke="#e2e2e2" stroke-width="1.6"/>
<line x1="549.68" y1="531.20" x2="549.68" y2="584.40" stroke="#e2e2e2" stroke-width="1.6"/>
<line x1="576.22" y1="531.20" x2="576.22" y2="584.40" stroke="#e2e2e2" stroke-width="1.6"/>
<line x1="602.76" y1="531.20" x2="602.76" y2="584.40" stroke="#e2e2e2" stroke-width="1.6"/>
<line x1="629.30" y1="531.20" x2="629.30" y2="584.40" stroke="#e2e2e2" stroke-width="1.6"/>
<line x1="655.84" y1="531.20" x2="655.84" y2="584.40" stroke="#cfcfcf" stroke-width="2.0"/>
<line x1="682.38" y1="531.20" x2="682.38" y2="584.40" stroke="#e2e2e2" stroke-width="1.6"/>
<line x1="708.92" y1="531.20" x2="708.92" y2="584.40" stroke="#e2e2e2" stroke-width="1.6"/>
<line x1="735.46" y1="531.20" x2="735.46" y2="584.40" stroke="#e2e2e2" stroke-width="1.6"/>
<line x1="762.00" y1="531.20" x2="762.00" y2="584.40" stroke="#e2e2e2" stroke-width="1.6"/>
<line x1="788.54" y1="531.20" x2="788.54" y2="584.40" stroke="#e2e2e2" stroke-width="1.6"/>
<line x1="815.08" y1="531.20" x2="815.08" y2="584.40" stroke="#e2e2e2" stroke-width="1.6"/>
<line x1="841.62" y1="531.20" x2="841.62" y2="584.40" stroke="#cfcfcf" stroke-width="2.0"/>
<line x1="868.16" y1="531.20" x2="868.16" y2="584.40" stroke="#e2e2e2" stroke-width="1.6"/>
<line x1="894.70" y1="531.20" x2="894.70" y2="584.40" stroke="#e2e2e2" stroke-width="1.6"/>
<line x1="921.24" y1="531.20" x2="921.24" y2="584.40" stroke="#e2e2e2" stroke-width="1.6"/>
<line x1="947.78" y1="531.20" x2="947.78" y2="584.40" stroke="#e2e2e2" stroke-width="1.6"/>
<line x1="974.32" y1="531.20" x2="974.32" y2="584.40" stroke="#e2e2e2" stroke-width="1.6"/>
<line x1="1000.86" y1="531.20" x2="1000.86" y2="584.40" stroke="#e2e2e2" stroke-width="1.6"/>
<line x1="1027.40" y1="531.20" x2="1027.40" y2="584.40" stroke="#cfcfcf" stroke-width="2.0"/>
<line x1="1053.94" y1="531.20" x2="1053.94" y2="584.40" stroke="#e2e2e2" stroke-width="1.6"/>
<line x1="1080.48" y1="531.20" x2="1080.48" y2="584.40" stroke="#e2e2e2" stroke-width="1.6"/>
<line x1="1107.02" y1="531.20" x2="1107.02" y2="584.40" stroke="#e2e2e2" stroke-width="1.6"/>
<line x1="1133.56" y1="531.20" x2="1133.56" y2="584.40" stroke="#e2e2e2" stroke-width="1.6"/>
<line x1="1160.10" y1="531.20" x2="1160.10" y2="584.40" stroke="#e2e2e2" stroke-width="1.6"/>
<line x1="1186.64" y1="531.20" x2="1186.64" y2="584.40" stroke="#e2e2e2" stroke-width="1.6"/>
<line x1="1213.18" y1="531.20" x2="1213.18" y2="584.40" stroke="#e2e2e2" stroke-width="1.6"/>
<line x1="80" y1="651.40" x2="1213.18" y2="651.40" stroke="#dfdfdf" stroke-width="1.6"/>
<line x1="80" y1="678.00" x2="1213.18" y2="678.00" stroke="#dfdfdf" stroke-width="1.6"/>
<line x1="80" y1="704.60" x2="1213.18" y2="704.60" stroke="#dfdfdf" stroke-width="1.6"/>
<line x1="98.50" y1="651.40" x2="98.50" y2="704.60" stroke="#cfcfcf" stroke-width="2.0"/>
<line x1="125.04" y1="651.40" x2="125.04" y2="704.60" stroke="#e2e2e2" stroke-width="1.6"/>
<line x1="151.58" y1="651.40" x2="151.58" y2="704.60" stroke="#e2e2e2" stroke-width="1.6"/>
<line x1="178.12" y1="651.40" x2="178.12" y2="704.60" stroke="#e2e2e2" stroke-width="1.6"/>
<line x1="204.66" y1="651.40" x2="204.66" y2="704.60" stroke="#e2e2e2" stroke-width="1.6"/>
<line x1="231.20" y1="651.40" x2="231.20" y2="704.60" stroke="#e2e2e2" stroke-width="1.6"/>
<line x1="257.74" y1="651.40" x2="257.74" y2="704.60" stroke="#e2e2e2" stroke-width="1.6"/>
<line x1="284.28" y1="651.40" x2="284.28" y2="704.60" stroke="#cfcfcf" stroke-width="2.0"/>
<line x1="310.82" y1="651.40" x2="310.82" y2="704.60" stroke="#e2e2e2" stroke-width="1.6"/>
<line x1="337.36" y1="651.40" x2="337.36" y2="704.60" stroke="#e2e2e2" stroke-width="1.6"/>
<line x1="363.90" y1="651.40" x2="363.90" y2="704.60" stroke="#e2e2e2" stroke-width="1.6"/>
<line x1="390.44" y1="651.40" x2="390.44" y2="704.60" stroke="#e2e2e2" stroke-width="1.6"/>
<line x1="416.98" y1="651.40" x2="416.98" y2="704.60" stroke="#e2e2e2" stroke-width="1.6"/>
<line x1="443.52" y1="651.40" x2="443.52" y2="704.60" stroke="#e2e2e2" stroke-width="1.6"/>
<line x1="470.06" y1="651.40" x2="470.06" y2="704.60" stroke="#cfcfcf" stroke-width="2.0"/>
<line x1="496.60" y1="651.40" x2="496.60" y2="704.60" stroke="#e2e2e2" stroke-width="1.6"/>
<line x1="523.14" y1="651.40" x2="523.14" y2="704.60" stroke="#e2e2e2" stroke-width="1.6"/>
<line x1="549.68" y1="651.40" x2="549.68" y2="704.60" stroke="#e2e2e2" stroke-width="1.6"/>
<line x1="576.22" y1="651.40" x2="576.22" y2="704.60" stroke="#e2e2e2" stroke-width="1.6"/>
<line x1="602.76" y1="651.40" x2="602.76" y2="704.60" stroke="#e2e2e2" stroke-width="1.6"/>
<line x1="629.30" y1="651.40" x2="629.30" y2="704.60" stroke="#e2e2e2" stroke-width="1.6"/>
<line x1="655.84" y1="651.40" x2="655.84" y2="704.60" stroke="#cfcfcf" stroke-width="2.0"/>
<line x1="682.38" y1="651.40" x2="682.38" y2="704.60" stroke="#e2e2e2" stroke-width="1.6"/>
<line x1="708.92" y1="651.40" x2="708.92" y2="704.60" stroke="#e2e2e2" stroke-width="1.6"/>
<line x1="735.46" y1="651.40" x2="735.46" y2="704.60" stroke="#e2e2e2" stroke-width="1.6"/>
<line x1="762.00" y1="651.40" x2="762.00" y2="704.60" stroke="#e2e2e2" stroke-width="1.6"/>
<line x1="788.54" y1="651.40" x2="788.54" y2="704.60" stroke="#e2e2e2" stroke-width="1.6"/>
<line x1="815.08" y1="651.40" x2="815.08" y2="704.60" stroke="#e2e2e2" stroke-width="1.6"/>
<line x1="841.62" y1="651.40" x2="841.62" y2="704.60" stroke="#cfcfcf" stroke-width="2.0"/>
<line x1="868.16" y1="651.40" x2="868.16" y2="704.60" stroke="#e2e2e2" stroke-width="1.6"/>
<line x1="894.70" y1="651.40" x2="894.70" y2="704.60" stroke="#e2e2e2" stroke-width="1.6"/>
<line x1="921.24" y1="651.40" x2="921.24" y2="704.60" stroke="#e2e2e2" stroke-width="1.6"/>
<line x1="947.78" y1="651.40" x2="947.78" y2="704.60" stroke="#e2e2e2" stroke-width="1.6"/>
<line x1="974.32" y1="651.40" x2="974.32" y2="704.60" stroke="#e2e2e2" stroke-width="1.6"/>
<line x1="1000.86" y1="651.40" x2="1000.86" y2="704.60" stroke="#e2e2e2" stroke-width="1.6"/>
<line x1="1027.40" y1="651.40" x2="1027.40" y2="704.60" stroke="#cfcfcf" stroke-width="2.0"/>
<line x1="1053.94" y1="651.40" x2="1053.94" y2="704.60" stroke="#e2e2e2" stroke-width="1.6"/>
<line x1="1080.48" y1="651.40" x2="1080.48" y2="704.60" stroke="#e2e2e2" stroke-width="1.6"/>
<line x1="1107.02" y1="651.40" x2="1107.02" y2="704.60" stroke="#e2e2e2" stroke-width="1.6"/>
<line x1="1133.56" y1="651.40" x2="1133.56" y2="704.60" stroke="#e2e2e2" stroke-width="1.6"/>
<line x1="1160.10" y1="651.40" x2="1160.10" y2="704.60" stroke="#e2e2e2" stroke-width="1.6"/>
<line x1="1186.64" y1="651.40" x2="1186.64" y2="704.60" stroke="#e2e2e2" stroke-width="1.6"/>
<line x1="1213.18" y1="651.40" x2="1213.18" y2="704.60" stroke="#e2e2e2" stroke-width="1.6"/>
<line x1="80" y1="771.60" x2="1213.18" y2="771.60" stroke="#dfdfdf" stroke-width="1.6"/>
<line x1="80" y1="798.20" x2="1213.18" y2="798.20" stroke="#dfdfdf" stroke-width="1.6"/>
<line x1="80" y1="824.80" x2="1213.18" y2="824.80" stroke="#dfdfdf" stroke-width="1.6"/>
<line x1="98.50" y1="771.60" x2="98.50" y2="824.80" stroke="#cfcfcf" stroke-width="2.0"/>
<line x1="125.04" y1="771.60" x2="125.04" y2="824.80" stroke="#e2e2e2" stroke-width="1.6"/>
<line x1="151.58" y1="771.60" x2="151.58" y2="824.80" stroke="#e2e2e2" stroke-width="1.6"/>
<line x1="178.12" y1="771.60" x2="178.12" y2="824.80" stroke="#e2e2e2" stroke-width="1.6"/>
<line x1="204.66" y1="771.60" x2="204.66" y2="824.80" stroke="#e2e2e2" stroke-width="1.6"/>
<line x1="231.20" y1="771.60" x2="231.20" y2="824.80" stroke="#e2e2e2" stroke-width="1.6"/>
<line x1="257.74" y1="771.60" x2="257.74" y2="824.80" stroke="#e2e2e2" stroke-width="1.6"/>
<line x1="284.28" y1="771.60" x2="284.28" y2="824.80" stroke="#cfcfcf" stroke-width="2.0"/>
<line x1="310.82" y1="771.60" x2="310.82" y2="824.80" stroke="#e2e2e2" stroke-width="1.6"/>
<line x1="337.36" y1="771.60" x2="337.36" y2="824.80" stroke="#e2e2e2" stroke-width="1.6"/>
<line x1="363.90" y1="771.60" x2="363.90" y2="824.80" stroke="#e2e2e2" stroke-width="1.6"/>
<line x1="390.44" y1="771.60" x2="390.44" y2="824.80" stroke="#e2e2e2" stroke-width="1.6"/>
<line x1="416.98" y1="771.60" x2="416.98" y2="824.80" stroke="#e2e2e2" stroke-width="1.6"/>
<line x1="443.52" y1="771.60" x2="443.52" y2="824.80" stroke="#e2e2e2" stroke-width="1.6"/>
<line x1="470.06" y1="771.60" x2="470.06" y2="824.80" stroke="#cfcfcf" stroke-width="2.0"/>
<line x1="496.60" y1="771.60" x2="496.60" y2="824.80" stroke="#e2e2e2" stroke-width="1.6"/>
<line x1="523.14" y1="771.60" x2="523.14" y2="824.80" stroke="#e2e2e2" stroke-width="1.6"/>
<line x1="549.68" y1="771.60" x2="549.68" y2="824.80" stroke="#e2e2e2" stroke-width="1.6"/>
<line x1="576.22" y1="771.60" x2="576.22" y2="824.80" stroke="#e2e2e2" stroke-width="1.6"/>
<line x1="602.76" y1="771.60" x2="602.76" y2="824.80" stroke="#e2e2e2" stroke-width="1.6"/>
<line x1="629.30" y1="771.60" x2="629.30" y2="824.80" stroke="#e2e2e2" stroke-width="1.6"/>
<line x1="655.84" y1="771.60" x2="655.84" y2="824.80" stroke="#cfcfcf" stroke-width="2.0"/>
<line x1="682.38" y1="771.60" x2="682.38" y2="824.80" stroke="#e2e2e2" stroke-width="1.6"/>
<line x1="708.92" y1="771.60" x2="708.92" y2="824.80" stroke="#e2e2e2" stroke-width="1.6"/>
<line x1="735.46" y1="771.60" x2="735.46" y2="824.80" stroke="#e2e2e2" stroke-width="1.6"/>
<line x1="762.00" y1="771.60" x2="762.00" y2="824.80" stroke="#e2e2e2" stroke-width="1.6"/>
<line x1="788.54" y1="771.60" x2="788.54" y2="824.80" stroke="#e2e2e2" stroke-width="1.6"/>
<line x1="815.08" y1="771.60" x2="815.08" y2="824.80" stroke="#e2e2e2" stroke-width="1.6"/>
<line x1="841.62" y1="771.60" x2="841.62" y2="824.80" stroke="#cfcfcf" stroke-width="2.0"/>
<line x1="868.16" y1="771.60" x2="868.16" y2="824.80" stroke="#e2e2e2" stroke-width="1.6"/>
<line x1="894.70" y1="771.60" x2="894.70" y2="824.80" stroke="#e2e2e2" stroke-width="1.6"/>
<line x1="921.24" y1="771.60" x2="921.24" y2="824.80" stroke="#e2e2e2" stroke-width="1.6"/>
<line x1="947.78" y1="771.60" x2="947.78" y2="824.80" stroke="#e2e2e2" stroke-width="1.6"/>
<line x1="974.32" y1="771.60" x2="974.32" y2="824.80" stroke="#e2e2e2" stroke-width="1.6"/>
<line x1="1000.86" y1="771.60" x2="1000.86" y2="824.80" stroke="#e2e2e2" stroke-width="1.6"/>
<line x1="1027.40" y1="771.60" x2="1027.40" y2="824.80" stroke="#cfcfcf" stroke-width="2.0"/>
<line x1="1053.94" y1="771.60" x2="1053.94" y2="824.80" stroke="#e2e2e2" stroke-width="1.6"/>
<line x1="1080.48" y1="771.60" x2="1080.48" y2="824.80" stroke="#e2e2e2" stroke-width="1.6"/>
<line x1="1107.02" y1="771.60" x2="1107.02" y2="824.80" stroke="#e2e2e2" stroke-width="1.6"/>
<line x1="1133.56" y1="771.60" x2="1133.56" y2="824.80" stroke="#e2e2e2" stroke-width="1.6"/>
<line x1="1160.10" y1="771.60" x2="1160.10" y2="824.80" stroke="#e2e2e2" stroke-width="1.6"/>
<line x1="1186.64" y1="771.60" x2="1186.64" y2="824.80" stroke="#e2e2e2" stroke-width="1.6"/>
<line x1="1213.18" y1="771.60" x2="1213.18" y2="824.80" stroke="#e2e2e2" stroke-width="1.6"/>
<line x1="80" y1="891.80" x2="1213.18" y2="891.80" stroke="#dfdfdf" stroke-width="1.6"/>
<line x1="80" y1="918.40" x2="1213.18" y2="918.40" stroke="#dfdfdf" stroke-width="1.6"/>
<line x1="80" y1="945.00" x2="1213.18" y2="945.00" stroke="#dfdfdf" stroke-width="1.6"/>
<line x1="98.50" y1="891.80" x2="98.50" y2="945.00" stroke="#cfcfcf" stroke-width="2.0"/>
<line x1="125.04" y1="891.80" x2="125.04" y2="945.00" stroke="#e2e2e2" stroke-width="1.6"/>
<line x1="151.58" y1="891.80" x2="151.58" y2="945.00" stroke="#e2e2e2" stroke-width="1.6"/>
<line x1="178.12" y1="891.80" x2="178.12" y2="945.00" stroke="#e2e2e2" stroke-width="1.6"/>
<line x1="204.66" y1="891.80" x2="204.66" y2="945.00" stroke="#e2e2e2" stroke-width="1.6"/>
<line x1="231.20" y1="891.80" x2="231.20" y2="945.00" stroke="#e2e2e2" stroke-width="1.6"/>
<line x1="257.74" y1="891.80" x2="257.74" y2="945.00" stroke="#e2e2e2" stroke-width="1.6"/>
<line x1="284.28" y1="891.80" x2="284.28" y2="945.00" stroke="#cfcfcf" stroke-width="2.0"/>
<line x1="310.82" y1="891.80" x2="310.82" y2="945.00" stroke="#e2e2e2" stroke-width="1.6"/>
<line x1="337.36" y1="891.80" x2="337.36" y2="945.00" stroke="#e2e2e2" stroke-width="1.6"/>
<line x1="363.90" y1="891.80" x2="363.90" y2="945.00" stroke="#e2e2e2" stroke-width="1.6"/>
<line x1="390.44" y1="891.80" x2="390.44" y2="945.00" stroke="#e2e2e2" stroke-width="1.6"/>
<line x1="416.98" y1="891.80" x2="416.98" y2="945.00" stroke="#e2e2e2" stroke-width="1.6"/>
<line x1="443.52" y1="891.80" x2="443.52" y2="945.00" stroke="#e2e2e2" stroke-width="1.6"/>
<line x1="470.06" y1="891.80" x2="470.06" y2="945.00" stroke="#cfcfcf" stroke-width="2.0"/>
<line x1="496.60" y1="891.80" x2="496.60" y2="945.00" stroke="#e2e2e2" stroke-width="1.6"/>
<line x1="523.14" y1="891.80" x2="523.14" y2="945.00" stroke="#e2e2e2" stroke-width="1.6"/>
<line x1="549.68" y1="891.80" x2="549.68" y2="945.00" stroke="#e2e2e2" stroke-width="1.6"/>
<line x1="576.22" y1="891.80" x2="576.22" y2="945.00" stroke="#e2e2e2" stroke-width="1.6"/>
<line x1="602.76" y1="891.80" x2="602.76" y2="945.00" stroke="#e2e2e2" stroke-width="1.6"/>
<line x1="629.30" y1="891.80" x2="629.30" y2="945.00" stroke="#e2e2e2" stroke-width="1.6"/>
<line x1="655.84" y1="891.80" x2="655.84" y2="945.00" stroke="#cfcfcf" stroke-width="2.0"/>
<line x1="682.38" y1="891.80" x2="682.38" y2="945.00" stroke="#e2e2e2" stroke-width="1.6"/>
<line x1="708.92" y1="891.80" x2="708.92" y2="945.00" stroke="#e2e2e2" stroke-width="1.6"/>
<line x1="735.46" y1="891.80" x2="735.46" y2="945.00" stroke="#e2e2e2" stroke-width="1.6"/>
<line x1="762.00" y1="891.80" x2="762.00" y2="945.00" stroke="#e2e2e2" stroke-width="1.6"/>
<line x1="788.54" y1="891.80" x2="788.54" y2="945.00" stroke="#e2e2e2" stroke-width="1.6"/>
<line x1="815.08" y1="891.80" x2="815.08" y2="945.00" stroke="#e2e2e2" stroke-width="1.6"/>
<line x1="841.62" y1="891.80" x2="841.62" y2="945.00" stroke="#cfcfcf" stroke-width="2.0"/>
<line x1="868.16" y1="891.80" x2="868.16" y2="945.00" stroke="#e2e2e2" stroke-width="1.6"/>
<line x1="894.70" y1="891.80" x2="894.70" y2="945.00" stroke="#e2e2e2" stroke-width="1.6"/>
<line x1="921.24" y1="891.80" x2="921.24" y2="945.00" stroke="#e2e2e2" stroke-width="1.6"/>
<line x1="947.78" y1="891.80" x2="947.78" y2="945.00" stroke="#e2e2e2" stroke-width="1.6"/>
<line x1="974.32" y1="891.80" x2="974.32" y2="945.00" stroke="#e2e2e2" stroke-width="1.6"/>
<line x1="1000.86" y1="891.80" x2="1000.86" y2="945.00" stroke="#e2e2e2" stroke-width="1.6"/>
<line x1="1027.40" y1="891.80" x2="1027.40" y2="945.00" stroke="#cfcfcf" stroke-width="2.0"/>
<line x1="1053.94" y1="891.80" x2="1053.94" y2="945.00" stroke="#e2e2e2" stroke-width="1.6"/>
<line x1="1080.48" y1="891.80" x2="1080.48" y2="945.00" stroke="#e2e2e2" stroke-width="1.6"/>
<line x1="1107.02" y1="891.80" x2="1107.02" y2="945.00" stroke="#e2e2e2" stroke-width="1.6"/>
<line x1="1133.56" y1="891.80" x2="1133.56" y2="945.00" stroke="#e2e2e2" stroke-width="1.6"/>
<line x1="1160.10" y1="891.80" x2="1160.10" y2="945.00" stroke="#e2e2e2" stroke-width="1.6"/>
<line x1="1186.64" y1="891.80" x2="1186.64" y2="945.00" stroke="#e2e2e2" stroke-width="1.6"/>
<line x1="1213.18" y1="891.80" x2="1213.18" y2="945.00" stroke="#e2e2e2" stroke-width="1.6"/>
<line x1="80" y1="1012.00" x2="1213.18" y2="1012.00" stroke="#dfdfdf" stroke-width="1.6"/>
<line x1="80" y1="1038.60" x2="1213.18" y2="1038.60" stroke="#dfdfdf" stroke-width="1.6"/>
<line x1="80" y1="1065.20" x2="1213.18" y2="1065.20" stroke="#dfdfdf" stroke-width="1.6"/>
<line x1="98.50" y1="1012.00" x2="98.50" y2="1065.20" stroke="#cfcfcf" stroke-width="2.0"/>
<line x1="125.04" y1="1012.00" x2="125.04" y2="1065.20" stroke="#e2e2e2" stroke-width="1.6"/>
<line x1="151.58" y1="1012.00" x2="151.58" y2="1065.20" stroke="#e2e2e2" stroke-width="1.6"/>
<line x1="178.12" y1="1012.00" x2="178.12" y2="1065.20" stroke="#e2e2e2" stroke-width="1.6"/>
<line x1="204.66" y1="1012.00" x2="204.66" y2="1065.20" stroke="#e2e2e2" stroke-width="1.6"/>
<line x1="231.20" y1="1012.00" x2="231.20" y2="1065.20" stroke="#e2e2e2" stroke-width="1.6"/>
<line x1="257.74" y1="1012.00" x2="257.74" y2="1065.20" stroke="#e2e2e2" stroke-width="1.6"/>
<line x1="284.28" y1="1012.00" x2="284.28" y2="1065.20" stroke="#cfcfcf" stroke-width="2.0"/>
<line x1="310.82" y1="1012.00" x2="310.82" y2="1065.20" stroke="#e2e2e2" stroke-width="1.6"/>
<line x1="337.36" y1="1012.00" x2="337.36" y2="1065.20" stroke="#e2e2e2" stroke-width="1.6"/>
<line x1="363.90" y1="1012.00" x2="363.90" y2="1065.20" stroke="#e2e2e2" stroke-width="1.6"/>
<line x1="390.44" y1="1012.00" x2="390.44" y2="1065.20" stroke="#e2e2e2" stroke-width="1.6"/>
<line x1="416.98" y1="1012.00" x2="416.98" y2="1065.20" stroke="#e2e2e2" stroke-width="1.6"/>
<line x1="443.52" y1="1012.00" x2="443.52" y2="1065.20" stroke="#e2e2e2" stroke-width="1.6"/>
<line x1="470.06" y1="1012.00" x2="470.06" y2="1065.20" stroke="#cfcfcf" stroke-width="2.0"/>
<line x1="496.60" y1="1012.00" x2="496.60" y2="1065.20" stroke="#e2e2e2" stroke-width="1.6"/>
<line x1="523.14" y1="1012.00" x2="523.14" y2="1065.20" stroke="#e2e2e2" stroke-width="1.6"/>
<line x1="549.68" y1="1012.00" x2="549.68" y2="1065.20" stroke="#e2e2e2" stroke-width="1.6"/>
<line x1="576.22" y1="1012.00" x2="576.22" y2="1065.20" stroke="#e2e2e2" stroke-width="1.6"/>
<line x1="602.76" y1="1012.00" x2="602.76" y2="1065.20" stroke="#e2e2e2" stroke-width="1.6"/>
<line x1="629.30" y1="1012.00" x2="629.30" y2="1065.20" stroke="#e2e2e2" stroke-width="1.6"/>
<line x1="655.84" y1="1012.00" x2="655.84" y2="1065.20" stroke="#cfcfcf" stroke-width="2.0"/>
<line x1="682.38" y1="1012.00" x2="682.38" y2="1065.20" stroke="#e2e2e2" stroke-width="1.6"/>
<line x1="708.92" y1="1012.00" x2="708.92" y2="1065.20" stroke="#e2e2e2" stroke-width="1.6"/>
<line x1="735.46" y1="1012.00" x2="735.46" y2="1065.20" stroke="#e2e2e2" stroke-width="1.6"/>
<line x1="762.00" y1="1012.00" x2="762.00" y2="1065.20" stroke="#e2e2e2" stroke-width="1.6"/>
<line x1="788.54" y1="1012.00" x2="788.54" y2="1065.20" stroke="#e2e2e2" stroke-width="1.6"/>
<line x1="815.08" y1="1012.00" x2="815.08" y2="1065.20" stroke="#e2e2e2" stroke-width="1.6"/>
<line x1="841.62" y1="1012.00" x2="841.62" y2="1065.20" stroke="#cfcfcf" stroke-width="2.0"/>
<line x1="868.16" y1="1012.00" x2="868.16" y2="1065.20" stroke="#e2e2e2" stroke-width="1.6"/>
<line x1="894.70" y1="1012.00" x2="894.70" y2="1065.20" stroke="#e2e2e2" stroke-width="1.6"/>
<line x1="921.24" y1="1012.00" x2="921.24" y2="1065.20" stroke="#e2e2e2" stroke-width="1.6"/>
<line x1="947.78" y1="1012.00" x2="947.78" y2="1065.20" stroke="#e2e2e2" stroke-width="1.6"/>
<line x1="974.32" y1="1012.00" x2="974.32" y2="1065.20" stroke="#e2e2e2" stroke-width="1.6"/>
<line x1="1000.86" y1="1012.00" x2="1000.86" y2="1065.20" stroke="#e2e2e2" stroke-width="1.6"/>
<line x1="1027.40" y1="1012.00" x2="1027.40" y2="1065.20" stroke="#cfcfcf" stroke-width="2.0"/>
<line x1="1053.94" y1="1012.00" x2="1053.94" y2="1065.20" stroke="#e2e2e2" stroke-width="1.6"/>
<line x1="1080.48" y1="1012.00" x2="1080.48" y2="1065.20" stroke="#e2e2e2" stroke-width="1.6"/>
<line x1="1107.02" y1="1012.00" x2="1107.02" y2="1065.20" stroke="#e2e2e2" stroke-width="1.6"/>
<line x1="1133.56" y1="1012.00" x2="1133.56" y2="1065.20" stroke="#e2e2e2" stroke-width="1.6"/>
<line x1="1160.10" y1="1012.00" x2="1160.10" y2="1065.20" stroke="#e2e2e2" stroke-width="1.6"/>
<line x1="1186.64" y1="1012.00" x2="1186.64" y2="1065.20" stroke="#e2e2e2" stroke-width="1.6"/>
<line x1="1213.18" y1="1012.00" x2="1213.18" y2="1065.20" stroke="#e2e2e2" stroke-width="1.6"/>
<line x1="80" y1="1132.20" x2="1213.18" y2="1132.20" stroke="#dfdfdf" stroke-width="1.6"/>
<line x1="80" y1="1158.80" x2="1213.18" y2="1158.80" stroke="#dfdfdf" stroke-width="1.6"/>
<line x1="80" y1="1185.40" x2="1213.18" y2="1185.40" stroke="#dfdfdf" stroke-width="1.6"/>
<line x1="98.50" y1="1132.20" x2="98.50" y2="1185.40" stroke="#cfcfcf" stroke-width="2.0"/>
<line x1="125.04" y1="1132.20" x2="125.04" y2="1185.40" stroke="#e2e2e2" stroke-width="1.6"/>
<line x1="151.58" y1="1132.20" x2="151.58" y2="1185.40" stroke="#e2e2e2" stroke-width="1.6"/>
<line x1="178.12" y1="1132.20" x2="178.12" y2="1185.40" stroke="#e2e2e2" stroke-width="1.6"/>
<line x1="204.66" y1="1132.20" x2="204.66" y2="1185.40" stroke="#e2e2e2" stroke-width="1.6"/>
<line x1="231.20" y1="1132.20" x2="231.20" y2="1185.40" stroke="#e2e2e2" stroke-width="1.6"/>
<line x1="257.74" y1="1132.20" x2="257.74" y2="1185.40" stroke="#e2e2e2" stroke-width="1.6"/>
<line x1="284.28" y1="1132.20" x2="284.28" y2="1185.40" stroke="#cfcfcf" stroke-width="2.0"/>
<line x1="310.82" y1="1132.20" x2="310.82" y2="1185.40" stroke="#e2e2e2" stroke-width="1.6"/>
<line x1="337.36" y1="1132.20" x2="337.36" y2="1185.40" stroke="#e2e2e2" stroke-width="1.6"/>
<line x1="363.90" y1="1132.20" x2="363.90" y2="1185.40" stroke="#e2e2e2" stroke-width="1.6"/>
<line x1="390.44" y1="1132.20" x2="390.44" y2="1185.40" stroke="#e2e2e2" stroke-width="1.6"/>
<line x1="416.98" y1="1132.20" x2="416.98" y2="1185.40" stroke="#e2e2e2" stroke-width="1.6"/>
<line x1="443.52" y1="1132.20" x2="443.52" y2="1185.40" stroke="#e2e2e2" stroke-width="1.6"/>
<line x1="470.06" y1="1132.20" x2="470.06" y2="1185.40" stroke="#cfcfcf" stroke-width="2.0"/>
<line x1="496.60" y1="1132.20" x2="496.60" y2="1185.40" stroke="#e2e2e2" stroke-width="1.6"/>
<line x1="523.14" y1="1132.20" x2="523.14" y2="1185.40" stroke="#e2e2e2" stroke-width="1.6"/>
<line x1="549.68" y1="1132.20" x2="549.68" y2="1185.40" stroke="#e2e2e2" stroke-width="1.6"/>
<line x1="576.22" y1="1132.20" x2="576.22" y2="1185.40" stroke="#e2e2e2" stroke-width="1.6"/>
<line x1="602.76" y1="1132.20" x2="602.76" y2="1185.40" stroke="#e2e2e2" stroke-width="1.6"/>
<line x1="629.30" y1="1132.20" x2="629.30" y2="1185.40" stroke="#e2e2e2" stroke-width="1.6"/>
<line x1="655.84" y1="1132.20" x2="655.84" y2="1185.40" stroke="#cfcfcf" stroke-width="2.0"/>
<line x1="682.38" y1="1132.20" x2="682.38" y2="1185.40" stroke="#e2e2e2" stroke-width="1.6"/>
<line x1="708.92" y1="1132.20" x2="708.92" y2="1185.40" stroke="#e2e2e2" stroke-width="1.6"/>
<line x1="735.46" y1="1132.20" x2="735.46" y2="1185.40" stroke="#e2e2e2" stroke-width="1.6"/>
<line x1="762.00" y1="1132.20" x2="762.00" y2="1185.40" stroke="#e2e2e2" stroke-width="1.6"/>
<line x1="788.54" y1="1132.20" x2="788.54" y2="1185.40" stroke="#e2e2e2" stroke-width="1.6"/>
<line x1="815.08" y1="1132.20" x2="815.08" y2="1185.40" stroke="#e2e2e2" stroke-width="1.6"/>
<line x1="841.62" y1="1132.20" x2="841.62" y2="1185.40" stroke="#cfcfcf" stroke-width="2.0"/>
<line x1="868.16" y1="1132.20" x2="868.16" y2="1185.40" stroke="#e2e2e2" stroke-width="1.6"/>
<line x1="894.70" y1="1132.20" x2="894.70" y2="1185.40" stroke="#e2e2e2" stroke-width="1.6"/>
<line x1="921.24" y1="1132.20" x2="921.24" y2="1185.40" stroke="#e2e2e2" stroke-width="1.6"/>
<line x1="947.78" y1="1132.20" x2="947.78" y2="1185.40" stroke="#e2e2e2" stroke-width="1.6"/>
<line x1="974.32" y1="1132.20" x2="974.32" y2="1185.40" stroke="#e2e2e2" stroke-width="1.6"/>
<line x1="1000.86" y1="1132.20" x2="1000.86" y2="1185.40" stroke="#e2e2e2" stroke-width="1.6"/>
<line x1="1027.40" y1="1132.20" x2="1027.40" y2="1185.40" stroke="#cfcfcf" stroke-width="2.0"/>
<line x1="1053.94" y1="1132.20" x2="1053.94" y2="1185.40" stroke="#e2e2e2" stroke-width="1.6"/>
<line x1="1080.48" y1="1132.20" x2="1080.48" y2="1185.40" stroke="#e2e2e2" stroke-width="1.6"/>
<line x1="1107.02" y1="1132.20" x2="1107.02" y2="1185.40" stroke="#e2e2e2" stroke-width="1.6"/>
<line x1="1133.56" y1="1132.20" x2="1133.56" y2="1185.40" stroke="#e2e2e2" stroke-width="1.6"/>
<line x1="1160.10" y1="1132.20" x2="1160.10" y2="1185.40" stroke="#e2e2e2" stroke-width="1.6"/>
<line x1="1186.64" y1="1132.20" x2="1186.64" y2="1185.40" stroke="#e2e2e2" stroke-width="1.6"/>
<line x1="1213.18" y1="1132.20" x2="1213.18" y2="1185.40" stroke="#e2e2e2" stroke-width="1.6"/>
<path d="M85.23,391.50 V406.50 M87.23,404.50 H72.03" stroke="#c9c9c9" stroke-width="4" fill="none"/>
<path d="M111.77,391.50 V406.50 M109.77,404.50 H124.97" stroke="#c9c9c9" stroke-width="4" fill="none"/>
<path d="M642.57,391.50 V406.50 M644.57,404.50 H629.37" stroke="#c9c9c9" stroke-width="4" fill="none"/>
<path d="M669.11,391.50 V406.50 M667.11,404.50 H682.31" stroke="#c9c9c9" stroke-width="4" fill="none"/>
<path d="M854.89,391.50 V406.50 M852.89,404.50 H868.09" stroke="#c9c9c9" stroke-width="4" fill="none"/>
<path d="M1014.13,391.50 V406.50 M1016.13,404.50 H1000.93" stroke="#c9c9c9" stroke-width="4" fill="none"/>
<path d="M1040.67,391.50 V406.50 M1038.67,404.50 H1053.87" stroke="#c9c9c9" stroke-width="4" fill="none"/>
<path d="M138.31,468.70 V483.70 M140.31,470.70 H125.11" stroke="#6a9fdc" stroke-width="4" fill="none"/>
<path d="M164.85,468.70 V483.70 M162.85,470.70 H178.05" stroke="#6a9fdc" stroke-width="4" fill="none"/>
<path d="M138.31,511.70 V526.70 M140.31,524.70 H125.11" stroke="#6a9fdc" stroke-width="4" fill="none"/>
<path d="M164.85,511.70 V526.70 M162.85,524.70 H178.05" stroke="#6a9fdc" stroke-width="4" fill="none"/>
<path d="M217.93,468.70 V483.70 M219.93,470.70 H204.73" stroke="#c9c9c9" stroke-width="4" fill="none"/>
<path d="M244.47,468.70 V483.70 M242.47,470.70 H257.67" stroke="#c9c9c9" stroke-width="4" fill="none"/>
<path d="M324.09,468.70 V483.70 M326.09,470.70 H310.89" stroke="#6a9fdc" stroke-width="4" fill="none"/>
<path d="M350.63,468.70 V483.70 M348.63,470.70 H363.83" stroke="#6a9fdc" stroke-width="4" fill="none"/>
<path d="M403.71,468.70 V483.70 M405.71,470.70 H390.51" stroke="#6a9fdc" stroke-width="4" fill="none"/>
<path d="M430.25,468.70 V483.70 M428.25,470.70 H443.45" stroke="#6a9fdc" stroke-width="4" fill="none"/>
<path d="M403.71,511.70 V526.70 M405.71,524.70 H390.51" stroke="#6a9fdc" stroke-width="4" fill="none"/>
<path d="M430.25,511.70 V526.70 M428.25,524.70 H443.45" stroke="#6a9fdc" stroke-width="4" fill="none"/>
<path d="M509.87,468.70 V483.70 M511.87,470.70 H496.67" stroke="#c9c9c9" stroke-width="4" fill="none"/>
<path d="M536.41,468.70 V483.70 M534.41,470.70 H549.61" stroke="#c9c9c9" stroke-width="4" fill="none"/>
<path d="M589.49,468.70 V483.70 M591.49,470.70 H576.29" stroke="#6a9fdc" stroke-width="4" fill="none"/>
<path d="M616.03,468.70 V483.70 M614.03,470.70 H629.23" stroke="#6a9fdc" stroke-width="4" fill="none"/>
<path d="M695.65,468.70 V483.70 M697.65,470.70 H682.45" stroke="#6a9fdc" stroke-width="4" fill="none"/>
<path d="M722.19,468.70 V483.70 M720.19,470.70 H735.39" stroke="#6a9fdc" stroke-width="4" fill="none"/>
<path d="M695.65,511.70 V526.70 M697.65,524.70 H682.45" stroke="#6a9fdc" stroke-width="4" fill="none"/>
<path d="M722.19,511.70 V526.70 M720.19,524.70 H735.39" stroke="#6a9fdc" stroke-width="4" fill="none"/>
<path d="M775.27,468.70 V483.70 M777.27,470.70 H762.07" stroke="#c9c9c9" stroke-width="4" fill="none"/>
<path d="M801.81,468.70 V483.70 M799.81,470.70 H815.01" stroke="#c9c9c9" stroke-width="4" fill="none"/>
<path d="M907.97,468.70 V483.70 M905.97,470.70 H921.17" stroke="#c9c9c9" stroke-width="4" fill="none"/>
<path d="M961.05,468.70 V483.70 M963.05,470.70 H947.85" stroke="#c9c9c9" stroke-width="4" fill="none"/>
<path d="M987.59,468.70 V483.70 M985.59,470.70 H1000.79" stroke="#c9c9c9" stroke-width="4" fill="none"/>
<path d="M961.05,511.70 V526.70 M963.05,524.70 H947.85" stroke="#c9c9c9" stroke-width="4" fill="none"/>
<path d="M987.59,511.70 V526.70 M985.59,524.70 H1000.79" stroke="#c9c9c9" stroke-width="4" fill="none"/>
<path d="M1067.21,468.70 V483.70 M1069.21,470.70 H1054.01" stroke="#c9c9c9" stroke-width="4" fill="none"/>
<path d="M1093.75,468.70 V483.70 M1091.75,470.70 H1106.95" stroke="#c9c9c9" stroke-width="4" fill="none"/>
<path d="M1146.83,468.70 V483.70 M1148.83,470.70 H1133.63" stroke="#c9c9c9" stroke-width="4" fill="none"/>
<path d="M1173.37,468.70 V483.70 M1171.37,470.70 H1186.57" stroke="#c9c9c9" stroke-width="4" fill="none"/>
<path d="M854.89,588.90 V603.90 M852.89,590.90 H868.09" stroke="#c9c9c9" stroke-width="4" fill="none"/>
<text x="85.23" y="388.70" class="pl" fill="#c4c4c4">64</text>
<text x="111.77" y="388.70" class="pl" fill="#c4c4c4">64</text>
<text x="642.57" y="388.70" class="pl" fill="#c4c4c4">64</text>
<text x="669.11" y="388.70" class="pl" fill="#c4c4c4">64</text>
<text x="854.89" y="388.70" class="pl" fill="#c4c4c4">28</text>
<text x="1014.13" y="388.70" class="pl" fill="#c4c4c4">26</text>
<text x="1040.67" y="388.70" class="pl" fill="#c4c4c4">26</text>
<text x="1014.13" y="373.50" class="pl" fill="#c4c4c4">27</text>
<text x="1040.67" y="373.50" class="pl" fill="#c4c4c4">27</text>
<text x="138.31" y="493.20" class="pl" fill="#000">28</text>
<text x="164.85" y="493.20" class="pl" fill="#000">28</text>
<text x="138.31" y="508.90" class="pl" fill="#000">27</text>
<text x="164.85" y="508.90" class="pl" fill="#000">27</text>
<text x="217.93" y="493.20" class="pl" fill="#c4c4c4">64</text>
<text x="244.47" y="493.20" class="pl" fill="#c4c4c4">64</text>
<text x="324.09" y="493.20" class="pl" fill="#000">26</text>
<text x="350.63" y="493.20" class="pl" fill="#000">26</text>
<text x="403.71" y="493.20" class="pl" fill="#000">28</text>
<text x="430.25" y="493.20" class="pl" fill="#000">28</text>
<text x="403.71" y="508.90" class="pl" fill="#000">27</text>
<text x="430.25" y="508.90" class="pl" fill="#000">27</text>
<text x="509.87" y="493.20" class="pl" fill="#c4c4c4">64</text>
<text x="536.41" y="493.20" class="pl" fill="#c4c4c4">64</text>
<text x="589.49" y="493.20" class="pl" fill="#000">26</text>
<text x="616.03" y="493.20" class="pl" fill="#000">26</text>
<text x="695.65" y="493.20" class="pl" fill="#000">28</text>
<text x="722.19" y="493.20" class="pl" fill="#000">28</text>
<text x="695.65" y="508.90" class="pl" fill="#000">27</text>
<text x="722.19" y="508.90" class="pl" fill="#000">27</text>
<text x="775.27" y="493.20" class="pl" fill="#c4c4c4">64</text>
<text x="801.81" y="493.20" class="pl" fill="#c4c4c4">64</text>
<text x="907.97" y="493.20" class="pl" fill="#c4c4c4">26</text>
<text x="961.05" y="493.20" class="pl" fill="#c4c4c4">28</text>
<text x="987.59" y="493.20" class="pl" fill="#c4c4c4">28</text>
<text x="961.05" y="508.90" class="pl" fill="#c4c4c4">27</text>
<text x="987.59" y="508.90" class="pl" fill="#c4c4c4">27</text>
<text x="1067.21" y="493.20" class="pl" fill="#c4c4c4">64</text>
<text x="1093.75" y="493.20" class="pl" fill="#c4c4c4">64</text>
<text x="1146.83" y="493.20" class="pl" fill="#c4c4c4">26</text>
<text x="1173.37" y="493.20" class="pl" fill="#c4c4c4">26</text>
<text x="854.89" y="613.40" class="pl" fill="#c4c4c4">27</text>
<text x="264.21" y="408.70" class="xl">28</text>
<text x="304.35" y="408.70" class="xl">28</text>
<text x="449.99" y="408.70" class="xl">26</text>
<text x="490.13" y="408.70" class="xl">26</text>
<text x="821.55" y="408.70" class="xl">28</text>
<text x="874.63" y="474.40" class="xl">26</text>
<text x="874.63" y="528.90" class="xl">29</text>
<text x="264.21" y="594.60" class="xl">27</text>
<text x="304.35" y="594.60" class="xl">27</text>
<text x="449.99" y="594.60" class="xl">29</text>
<text x="490.13" y="594.60" class="xl">29</text>
<text x="821.55" y="594.60" class="xl">27</text>
<text x="449.99" y="649.10" class="xl">28</text>
<text x="490.13" y="649.10" class="xl">28</text>
<text x="874.63" y="714.80" class="xl">28</text>
<text x="874.63" y="769.30" class="xl">31</text>
<text x="449.99" y="835.00" class="xl">31</text>
<text x="490.13" y="835.00" class="xl">31</text>
<text x="78.43" y="889.50" class="xl">32</text>
<text x="118.57" y="889.50" class="xl">32</text>
<text x="449.99" y="889.50" class="xl">30</text>
<text x="490.13" y="889.50" class="xl">30</text>
<text x="635.77" y="889.50" class="xl">32</text>
<text x="675.91" y="889.50" class="xl">32</text>
<text x="874.63" y="955.20" class="xl">30</text>
<text x="874.63" y="1009.70" class="xl">33</text>
<text x="78.43" y="1075.40" class="xl">31</text>
<text x="118.57" y="1075.40" class="xl">31</text>
<text x="449.99" y="1075.40" class="xl">33</text>
<text x="490.13" y="1075.40" class="xl">33</text>
<text x="635.77" y="1075.40" class="xl">31</text>
<text x="675.91" y="1075.40" class="xl">31</text>
<text x="78.43" y="1129.90" class="xl">34</text>
<text x="118.57" y="1129.90" class="xl">34</text>
<text x="449.99" y="1129.90" class="xl">32</text>
<text x="490.13" y="1129.90" class="xl">32</text>
<text x="635.77" y="1129.90" class="xl">34</text>
<text x="675.91" y="1129.90" class="xl">34</text>
<line x1="80.00" y1="450.90" x2="881.43" y2="450.90" stroke="#0066cc" stroke-width="3.2" stroke-linecap="butt"/>
<line x1="80.00" y1="544.50" x2="881.43" y2="544.50" stroke="#0066cc" stroke-width="3.2" stroke-linecap="butt"/>
<line x1="80.00" y1="691.30" x2="881.43" y2="691.30" stroke="#0066cc" stroke-width="3.2" stroke-linecap="butt"/>
<line x1="80.00" y1="784.90" x2="881.43" y2="784.90" stroke="#0066cc" stroke-width="3.2" stroke-linecap="butt"/>
<line x1="80.00" y1="931.70" x2="881.43" y2="931.70" stroke="#0066cc" stroke-width="3.2" stroke-linecap="butt"/>
<line x1="80.00" y1="1025.30" x2="881.43" y2="1025.30" stroke="#0066cc" stroke-width="3.2" stroke-linecap="butt"/>
<line x1="80.00" y1="1172.10" x2="881.43" y2="1172.10" stroke="#0066cc" stroke-width="3.2" stroke-linecap="butt"/>
<line x1="80.00" y1="424.30" x2="271.01" y2="424.30" stroke="#f74308" stroke-width="3.2" stroke-linecap="butt"/>
<line x1="80.00" y1="571.10" x2="271.01" y2="571.10" stroke="#f74308" stroke-width="3.2" stroke-linecap="butt"/>
<line x1="297.55" y1="424.30" x2="456.79" y2="424.30" stroke="#888888" stroke-width="3.2" stroke-linecap="butt"/>
<line x1="297.55" y1="571.10" x2="350.63" y2="571.10" stroke="#888888" stroke-width="3.2" stroke-linecap="butt"/>
<line x1="483.33" y1="424.30" x2="604.76" y2="424.30" stroke="#888888" stroke-width="3.2" stroke-linecap="butt"/>
<line x1="642.57" y1="424.30" x2="828.35" y2="424.30" stroke="#f74308" stroke-width="3.2" stroke-linecap="butt"/>
<line x1="483.33" y1="571.10" x2="828.35" y2="571.10" stroke="#f74308" stroke-width="3.2" stroke-linecap="butt"/>
<line x1="483.33" y1="664.70" x2="1188.64" y2="664.70" stroke="#f74308" stroke-width="3.2" stroke-linecap="butt"/>
<line x1="388.44" y1="571.10" x2="456.79" y2="571.10" stroke="#1700de" stroke-width="3.2" stroke-linecap="butt"/>
<line x1="80.00" y1="664.70" x2="456.79" y2="664.70" stroke="#1700de" stroke-width="3.2" stroke-linecap="butt"/>
<line x1="80.00" y1="811.50" x2="271.01" y2="811.50" stroke="#333333" stroke-width="3.2" stroke-linecap="butt"/>
<line x1="308.82" y1="811.50" x2="456.79" y2="811.50" stroke="#333333" stroke-width="3.2" stroke-linecap="butt"/>
<line x1="111.77" y1="905.10" x2="456.79" y2="905.10" stroke="#333333" stroke-width="3.2" stroke-linecap="butt"/>
<line x1="111.77" y1="1051.90" x2="164.85" y2="1051.90" stroke="#333333" stroke-width="3.2" stroke-linecap="butt"/>
<line x1="80.00" y1="905.10" x2="85.23" y2="905.10" stroke="#333333" stroke-width="3.2" stroke-linecap="butt"/>
<line x1="80.00" y1="1051.90" x2="85.23" y2="1051.90" stroke="#333333" stroke-width="3.2" stroke-linecap="butt"/>
<line x1="483.33" y1="811.50" x2="1199.91" y2="811.50" stroke="#007200" stroke-width="3.2" stroke-linecap="butt"/>
<line x1="483.33" y1="905.10" x2="642.57" y2="905.10" stroke="#007200" stroke-width="3.2" stroke-linecap="butt"/>
<line x1="483.33" y1="1051.90" x2="642.57" y2="1051.90" stroke="#007200" stroke-width="3.2" stroke-linecap="butt"/>
<line x1="483.33" y1="1145.50" x2="551.68" y2="1145.50" stroke="#007200" stroke-width="3.2" stroke-linecap="butt"/>
<line x1="669.11" y1="905.10" x2="870.16" y2="905.10" stroke="#888888" stroke-width="3.2" stroke-linecap="butt"/>
<line x1="669.11" y1="1051.90" x2="881.43" y2="1051.90" stroke="#888888" stroke-width="3.2" stroke-linecap="butt"/>
<line x1="202.66" y1="1051.90" x2="456.79" y2="1051.90" stroke="#888888" stroke-width="3.2" stroke-linecap="butt"/>
<line x1="111.77" y1="1145.50" x2="456.79" y2="1145.50" stroke="#888888" stroke-width="3.2" stroke-linecap="butt"/>
<line x1="80.00" y1="1145.50" x2="85.23" y2="1145.50" stroke="#1700de" stroke-width="3.2" stroke-linecap="butt"/>
<line x1="589.49" y1="1145.50" x2="642.57" y2="1145.50" stroke="#333333" stroke-width="3.2" stroke-linecap="butt"/>
<line x1="669.11" y1="1145.50" x2="870.16" y2="1145.50" stroke="#1700de" stroke-width="3.2" stroke-linecap="butt"/>
<path d="M602.76,411.50 L622.76,424.30 L602.76,437.10 Z" fill="#f03030" stroke="#1a1a1a" stroke-width="2"/>
<rect x="635.97" y="414.30" width="20" height="20" fill="#f74308" stroke="#1a1a1a" stroke-width="1.5"/>
<rect x="337.23" y="561.10" width="20" height="20" fill="#888888" stroke="#1a1a1a" stroke-width="1.5"/>
<path d="M390.44,558.30 L370.44,571.10 L390.44,583.90 Z" fill="#1700de" stroke="#1a1a1a" stroke-width="2"/>
<path d="M1186.64,651.90 L1206.64,664.70 L1186.64,677.50 Z" fill="#f74308" stroke="#1a1a1a" stroke-width="2"/>
<rect x="257.61" y="801.50" width="20" height="20" fill="#333333" stroke="#1a1a1a" stroke-width="1.5"/>
<path d="M310.82,798.70 L290.82,811.50 L310.82,824.30 Z" fill="#333333" stroke="#1a1a1a" stroke-width="2"/>
<rect x="1186.51" y="801.50" width="20" height="20" fill="#007200" stroke="#1a1a1a" stroke-width="1.5"/>
<rect x="151.45" y="1041.90" width="20" height="20" fill="#333333" stroke="#1a1a1a" stroke-width="1.5"/>
<path d="M204.66,1039.10 L184.66,1051.90 L204.66,1064.70 Z" fill="#888888" stroke="#1a1a1a" stroke-width="2"/>
<path d="M868.16,892.30 L888.16,905.10 L868.16,917.90 Z" fill="#888888" stroke="#1a1a1a" stroke-width="2"/>
<rect x="868.03" y="1041.90" width="20" height="20" fill="#888888" stroke="#1a1a1a" stroke-width="1.5"/>
<path d="M549.68,1132.70 L569.68,1145.50 L549.68,1158.30 Z" fill="#007200" stroke="#1a1a1a" stroke-width="2"/>
<rect x="582.89" y="1135.50" width="20" height="20" fill="#333333" stroke="#1a1a1a" stroke-width="1.5"/>
<path d="M868.16,1132.70 L888.16,1145.50 L868.16,1158.30 Z" fill="#1700de" stroke="#1a1a1a" stroke-width="2"/>
<path d="M881.43,464.20 Q875.71,377.50 881.43,290.80" stroke="#0066cc" stroke-width="3.2" fill="none"/>
<line x1="881.43" y1="449.30" x2="881.43" y2="464.20" stroke="#0066cc" stroke-width="3.2"/>
<path d="M881.43,531.20 Q875.71,617.90 881.43,704.60" stroke="#0066cc" stroke-width="3.2" fill="none"/>
<line x1="881.43" y1="546.10" x2="881.43" y2="531.20" stroke="#0066cc" stroke-width="3.2"/>
<line x1="881.43" y1="689.70" x2="881.43" y2="704.60" stroke="#0066cc" stroke-width="3.2"/>
<path d="M881.43,771.60 Q875.71,858.30 881.43,945.00" stroke="#0066cc" stroke-width="3.2" fill="none"/>
<line x1="881.43" y1="786.50" x2="881.43" y2="771.60" stroke="#0066cc" stroke-width="3.2"/>
<line x1="881.43" y1="930.10" x2="881.43" y2="945.00" stroke="#0066cc" stroke-width="3.2"/>
<path d="M881.43,1012.00 Q875.71,1098.70 881.43,1185.40" stroke="#0066cc" stroke-width="3.2" fill="none"/>
<line x1="881.43" y1="1026.90" x2="881.43" y2="1012.00" stroke="#0066cc" stroke-width="3.2"/>
<line x1="881.43" y1="1170.50" x2="881.43" y2="1185.40" stroke="#0066cc" stroke-width="3.2"/>
<path d="M271.01,411.00 Q265.29,497.70 271.01,584.40" stroke="#f74308" stroke-width="3.2" fill="none"/>
<line x1="271.01" y1="425.90" x2="271.01" y2="411.00" stroke="#f74308" stroke-width="3.2"/>
<line x1="271.01" y1="569.50" x2="271.01" y2="584.40" stroke="#f74308" stroke-width="3.2"/>
<path d="M297.55,411.00 Q303.27,497.70 297.55,584.40" stroke="#888888" stroke-width="3.2" fill="none"/>
<line x1="297.55" y1="425.90" x2="297.55" y2="411.00" stroke="#888888" stroke-width="3.2"/>
<line x1="297.55" y1="569.50" x2="297.55" y2="584.40" stroke="#888888" stroke-width="3.2"/>
<path d="M456.79,411.00 Q454.29,377.50 456.79,344.00" stroke="#888888" stroke-width="3.2" fill="none"/>
<line x1="456.79" y1="425.90" x2="456.79" y2="411.00" stroke="#888888" stroke-width="3.2"/>
<path d="M483.33,411.00 Q485.83,377.50 483.33,344.00" stroke="#888888" stroke-width="3.2" fill="none"/>
<line x1="483.33" y1="425.90" x2="483.33" y2="411.00" stroke="#888888" stroke-width="3.2"/>
<path d="M828.35,411.00 Q822.63,497.70 828.35,584.40" stroke="#f74308" stroke-width="3.2" fill="none"/>
<line x1="828.35" y1="425.90" x2="828.35" y2="411.00" stroke="#f74308" stroke-width="3.2"/>
<line x1="828.35" y1="569.50" x2="828.35" y2="584.40" stroke="#f74308" stroke-width="3.2"/>
<path d="M483.33,584.40 Q485.83,617.90 483.33,651.40" stroke="#f74308" stroke-width="3.2" fill="none"/>
<line x1="483.33" y1="569.50" x2="483.33" y2="584.40" stroke="#f74308" stroke-width="3.2"/>
<line x1="483.33" y1="666.30" x2="483.33" y2="651.40" stroke="#f74308" stroke-width="3.2"/>
<path d="M456.79,584.40 Q454.29,617.90 456.79,651.40" stroke="#1700de" stroke-width="3.2" fill="none"/>
<line x1="456.79" y1="569.50" x2="456.79" y2="584.40" stroke="#1700de" stroke-width="3.2"/>
<line x1="456.79" y1="666.30" x2="456.79" y2="651.40" stroke="#1700de" stroke-width="3.2"/>
<path d="M456.79,824.80 Q454.29,858.30 456.79,891.80" stroke="#333333" stroke-width="3.2" fill="none"/>
<line x1="456.79" y1="809.90" x2="456.79" y2="824.80" stroke="#333333" stroke-width="3.2"/>
<line x1="456.79" y1="906.70" x2="456.79" y2="891.80" stroke="#333333" stroke-width="3.2"/>
<path d="M111.77,891.80 Q117.49,978.50 111.77,1065.20" stroke="#333333" stroke-width="3.2" fill="none"/>
<line x1="111.77" y1="906.70" x2="111.77" y2="891.80" stroke="#333333" stroke-width="3.2"/>
<line x1="111.77" y1="1050.30" x2="111.77" y2="1065.20" stroke="#333333" stroke-width="3.2"/>
<path d="M85.23,891.80 Q79.51,978.50 85.23,1065.20" stroke="#333333" stroke-width="3.2" fill="none"/>
<line x1="85.23" y1="906.70" x2="85.23" y2="891.80" stroke="#333333" stroke-width="3.2"/>
<line x1="85.23" y1="1050.30" x2="85.23" y2="1065.20" stroke="#333333" stroke-width="3.2"/>
<path d="M483.33,824.80 Q485.83,858.30 483.33,891.80" stroke="#007200" stroke-width="3.2" fill="none"/>
<line x1="483.33" y1="809.90" x2="483.33" y2="824.80" stroke="#007200" stroke-width="3.2"/>
<line x1="483.33" y1="906.70" x2="483.33" y2="891.80" stroke="#007200" stroke-width="3.2"/>
<path d="M642.57,891.80 Q636.85,978.50 642.57,1065.20" stroke="#007200" stroke-width="3.2" fill="none"/>
<line x1="642.57" y1="906.70" x2="642.57" y2="891.80" stroke="#007200" stroke-width="3.2"/>
<line x1="642.57" y1="1050.30" x2="642.57" y2="1065.20" stroke="#007200" stroke-width="3.2"/>
<path d="M483.33,1065.20 Q485.83,1098.70 483.33,1132.20" stroke="#007200" stroke-width="3.2" fill="none"/>
<line x1="483.33" y1="1050.30" x2="483.33" y2="1065.20" stroke="#007200" stroke-width="3.2"/>
<line x1="483.33" y1="1147.10" x2="483.33" y2="1132.20" stroke="#007200" stroke-width="3.2"/>
<path d="M669.11,891.80 Q674.83,978.50 669.11,1065.20" stroke="#888888" stroke-width="3.2" fill="none"/>
<line x1="669.11" y1="906.70" x2="669.11" y2="891.80" stroke="#888888" stroke-width="3.2"/>
<line x1="669.11" y1="1050.30" x2="669.11" y2="1065.20" stroke="#888888" stroke-width="3.2"/>
<path d="M456.79,1065.20 Q454.29,1098.70 456.79,1132.20" stroke="#888888" stroke-width="3.2" fill="none"/>
<line x1="456.79" y1="1050.30" x2="456.79" y2="1065.20" stroke="#888888" stroke-width="3.2"/>
<line x1="456.79" y1="1147.10" x2="456.79" y2="1132.20" stroke="#888888" stroke-width="3.2"/>
<path d="M111.77,1132.20 Q117.49,1218.90 111.77,1305.60" stroke="#888888" stroke-width="3.2" fill="none"/>
<line x1="111.77" y1="1147.10" x2="111.77" y2="1132.20" stroke="#888888" stroke-width="3.2"/>
<path d="M85.23,1132.20 Q79.51,1218.90 85.23,1305.60" stroke="#1700de" stroke-width="3.2" fill="none"/>
<line x1="85.23" y1="1147.10" x2="85.23" y2="1132.20" stroke="#1700de" stroke-width="3.2"/>
<path d="M642.57,1132.20 Q636.85,1218.90 642.57,1305.60" stroke="#333333" stroke-width="3.2" fill="none"/>
<line x1="642.57" y1="1147.10" x2="642.57" y2="1132.20" stroke="#333333" stroke-width="3.2"/>
<path d="M669.11,1132.20 Q674.83,1218.90 669.11,1305.60" stroke="#1700de" stroke-width="3.2" fill="none"/>
<line x1="669.11" y1="1147.10" x2="669.11" y2="1132.20" stroke="#1700de" stroke-width="3.2"/>
</g>
</svg>
<div class="a" style="left:77px;top:199px;width:2px;height:976px;background:#333"></div>
<div class="a" style="left:1408px;top:199px;width:2px;height:976px;background:#333"></div>
<div class="a" style="left:79px;top:199px;width:3px;height:151px;background:linear-gradient(to right,#b4b4b4,#f6f6f6)"></div>
<div class="a" style="left:79px;top:362px;width:3px;height:813px;background:linear-gradient(to right,#b4b4b4,#f6f6f6)"></div>
<div class="a" style="left:1406px;top:199px;width:2px;height:151px;background:linear-gradient(to right,#f6f6f6,#a0a0a0)"></div>
<div class="a" style="left:1406px;top:362px;width:2px;height:813px;background:linear-gradient(to right,#f6f6f6,#a0a0a0)"></div>
<svg class="a" style="left:0;top:0" width="1500" height="1191" viewBox="0 0 1500 1191">
<defs>
<linearGradient id="gNew" x1="0" y1="0" x2="0" y2="1"><stop offset="0" stop-color="#d6e8fb"/><stop offset="1" stop-color="#b9d5f3"/></linearGradient>
<linearGradient id="gFold" x1="0" y1="0" x2="0" y2="1"><stop offset="0" stop-color="#8fb9ea"/><stop offset="1" stop-color="#6d9be0"/></linearGradient>
<linearGradient id="gOr" x1="0" y1="0" x2="0" y2="1"><stop offset="0" stop-color="#f7c898"/><stop offset="0.5" stop-color="#f4b074"/><stop offset="0.52" stop-color="#ea7614"/><stop offset="1" stop-color="#e56c0c"/></linearGradient>
<linearGradient id="gPlus" x1="0" y1="0" x2="0" y2="1"><stop offset="0" stop-color="#7ab4f0"/><stop offset="1" stop-color="#2f7fd8"/></linearGradient>
<linearGradient id="gX" x1="0" y1="0" x2="0" y2="1"><stop offset="0" stop-color="#f47a1c"/><stop offset="1" stop-color="#d43a04"/></linearGradient>
<linearGradient id="gArrow" x1="0" y1="0" x2="1" y2="1"><stop offset="0" stop-color="#ffffff"/><stop offset="1" stop-color="#b8b8b8"/></linearGradient>
<radialGradient id="gDotO" cx="0.4" cy="0.35" r="0.7"><stop offset="0" stop-color="#ffd9a0"/><stop offset="0.6" stop-color="#f59a30"/><stop offset="1" stop-color="#d87010"/></radialGradient>
<radialGradient id="gDotB" cx="0.4" cy="0.35" r="0.7"><stop offset="0" stop-color="#8cc0ff"/><stop offset="0.6" stop-color="#2a78f0"/><stop offset="1" stop-color="#1050c0"/></radialGradient>
<linearGradient id="gX2" gradientUnits="userSpaceOnUse" x1="0" y1="608" x2="0" y2="653"><stop offset="0" stop-color="#f7861e"/><stop offset="1" stop-color="#d63c04"/></linearGradient>
<linearGradient id="gPen" x1="0" y1="0" x2="0" y2="1"><stop offset="0" stop-color="#1e4fd8"/><stop offset="0.55" stop-color="#3f86f4"/><stop offset="1" stop-color="#7ab4ff"/></linearGradient>
<filter id="sh" x="-50%" y="-50%" width="200%" height="200%"><feGaussianBlur stdDeviation="1.5"/></filter>
</defs>
<!-- New -->
<path d="M29.6,121.8 H47.2 L59.6,134.2 V157.4 H29.6 Z" fill="url(#gNew)" stroke="#2e2e2e" stroke-width="1"/>
<path d="M47.2,121.8 L47.2,134.2 L59.6,134.2 Z" fill="#eef6ff"/>
<rect x="30" y="155" width="29" height="2.4" fill="#9fc0e8"/>
<!-- Open -->
<path d="M95.2,127 H108 L110,130.2 H125.6 V153.4 H95.2 Z" fill="#8ab3ec" stroke="#2e2e2e" stroke-width="0.8"/>
<path d="M102.8,136.6 H131.6 L126.4,153.4 H95.2 Z" fill="#6f9de2" stroke="#2e2e2e" stroke-width="0.8"/>
<path d="M103.5,137.4 H130.6" stroke="#c8defa" stroke-width="1"/>
<!-- Save floppy -->
<rect x="167" y="124.5" width="31.7" height="34.2" rx="1.5" fill="#2f2f2f" stroke="#555" stroke-width="1"/>
<rect x="174.6" y="124.5" width="19" height="12" fill="#cdeeee"/>
<rect x="186" y="126.5" width="4" height="8" fill="#333"/>
<rect x="170" y="139" width="26" height="15" fill="#dce9f6"/>
<path d="M170,142.5 H196 M170,147 H196 M170,151 H196" stroke="#e2b890" stroke-width="0.8"/>
<rect x="170" y="153.5" width="26" height="5" fill="#f08a10"/>
<!-- SVG -->
<path d="M247.5,127 V136 M239,130.5 L243.5,135.5 M256,130.5 L251.5,135.5 M240,138 Q247.5,141.5 255,138" stroke="#1b6fd0" stroke-width="7" stroke-linecap="round" fill="none"/>
<path d="M247.5,127 V136 M239,130.5 L243.5,135.5 M256,130.5 L251.5,135.5 M240,138 Q247.5,141.5 255,138" stroke="#ffffff" stroke-width="2.8" stroke-linecap="round" fill="none"/>
<rect x="230.3" y="140" width="34.9" height="19.4" fill="#1b6fd0"/>
<rect x="230.3" y="140" width="34.9" height="2.5" fill="#5b9be6"/>
<text x="247.7" y="157.5" font-family="Liberation Sans" font-weight="bold" font-size="18" fill="#fff" text-anchor="middle" transform="translate(247.7 0) scale(0.78 1) translate(-247.7 0)">SVG</text>
<!-- Export AC GT grey -->
<text x="321.5" y="140.5" font-family="Liberation Sans" font-size="18.5" fill="#7a7a7a" text-anchor="middle" letter-spacing="2.5">AC</text>
<text x="321.5" y="-144.5" font-family="Liberation Sans" font-size="18.5" fill="#7a7a7a" text-anchor="middle" letter-spacing="2.5" transform="scale(-1,-1) translate(-641,0)">GT</text>
<!-- Honeycomb -->
<g fill="url(#gDotO)"><circle cx="432.2" cy="131.9" r="4.2"/><circle cx="424.3" cy="136.6" r="4.2"/><circle cx="440.7" cy="136.6" r="4.2"/><circle cx="424.3" cy="146" r="4.2"/><circle cx="440.7" cy="146" r="4.2"/><circle cx="432.2" cy="150.6" r="4.2"/></g>
<path d="M440.3,145.5 V155.5 M435.3,150.5 H445.3" stroke="#fff" stroke-width="2"/>
<!-- Square -->
<g fill="url(#gDotB)"><circle cx="531.4" cy="131.9" r="4.8"/><circle cx="540.6" cy="131.9" r="4.8"/><circle cx="550" cy="131.9" r="4.8"/><circle cx="531.4" cy="141.2" r="4.8"/><circle cx="540.6" cy="141.2" r="4.8"/><circle cx="550" cy="141.2" r="4.8"/><circle cx="531.4" cy="150.6" r="4.8"/><circle cx="540.6" cy="150.6" r="4.8"/></g>
<path d="M549,145 V156 M543.5,150.5 H554.5" stroke="#fff" stroke-width="2"/>
<!-- AutoStaple -->
<path d="M633,139 L666.2,149.8 V152.8 L656,155.2 L633,141.5 Z" fill="#d8221a"/>
<path d="M632,130 L646.4,129.4 L663.8,135.4 V142 L659.6,143.8 L633.2,136.5 Z" fill="#ee2a20"/>
<path d="M632,130 L646.4,129.4 L663.8,135.4 L649,135 Z" fill="#ff5a4a" opacity="0.6"/>
<path d="M641.6,139 L659.6,145.6" stroke="#b8b8b8" stroke-width="1.4"/>
<rect x="655" y="143" width="4.6" height="6.5" fill="#a0a0a0"/>
<!-- AutoBreak scissors -->
<path d="M761,139.5 L783,131.5 L783.5,133.5 L764,142.5 Z" fill="#cfcfcf"/>
<path d="M761,142.5 L783.5,151 L783,153 L764,139.5 Z" fill="#cfcfcf"/>
<path d="M757.5,136 L763.5,141 L757.5,146" stroke="#2a5ff0" stroke-width="3" fill="none"/>
<circle cx="755.6" cy="131.5" r="4" fill="none" stroke="#2a5ff0" stroke-width="3.2"/>
<circle cx="755.6" cy="151.4" r="4" fill="none" stroke="#2a5ff0" stroke-width="3.2"/>
<!-- SCAF -->
<text x="977.5" y="157" font-family="Liberation Sans" font-weight="bold" font-size="13" fill="#1a6fd0" text-anchor="middle" letter-spacing="0.6">SCAF</text>
<ellipse cx="977" cy="169" rx="12" ry="1.5" fill="#2e2e2e" filter="url(#sh)"/>
<!-- STAP -->
<text x="1035.8" y="158" font-family="Liberation Sans" font-weight="bold" font-size="13" fill="#dd1c1c" text-anchor="middle" letter-spacing="0.6">STAP</text>
<ellipse cx="1034" cy="171" rx="12" ry="1.3" fill="#7a7a7a" filter="url(#sh)"/>
<!-- orange dots -->
<g fill="url(#gDotO)"><circle cx="1089.7" cy="140.4" r="4"/><circle cx="1089.7" cy="151" r="4"/><circle cx="1089.7" cy="161.3" r="4"/></g>
<ellipse cx="1090" cy="169" rx="6" ry="1.3" fill="#2e2e2e" filter="url(#sh)"/>
<!-- btn2 arrows -->
<rect x="1137" y="144.8" width="6.6" height="6.4" fill="#1a6ff0"/>
<path d="M1143,148 H1153" stroke="#4a8ef0" stroke-width="2"/>
<path d="M1152,143.5 L1160.5,148 L1152,152.5 Z" fill="#1a6ff0"/>
<rect x="1153.5" y="156" width="6.6" height="6.6" fill="#e01010"/>
<path d="M1143,159.3 H1154" stroke="#e85050" stroke-width="2"/>
<path d="M1145,155 L1136.5,159.3 L1145,163.6 Z" fill="#e01010"/>
<ellipse cx="1146" cy="171" rx="12" ry="1.3" fill="#7a7a7a" filter="url(#sh)"/>
<!-- btn3 grid -->
<path d="M1191,140 H1213 M1191,162 H1213" stroke="#e04040" stroke-width="1.8" opacity="0.85"/>
<path d="M1192,145 H1218 M1192,160 H1218" stroke="#3a80e0" stroke-width="1.6" opacity="0.85"/>
<path d="M1194,145 V160 M1201,138 V164 M1206,138 V164" stroke="#3a80e0" stroke-width="1.6" opacity="0.85"/>
<path d="M1204,137 V166 M1214,138 V164" stroke="#e04040" stroke-width="1.8" opacity="0.85"/>
<ellipse cx="1202" cy="171" rx="12" ry="1.3" fill="#7a7a7a" filter="url(#sh)"/>
<!-- = icon -->
<path d="M1249,146.3 H1268" stroke="#1a6fd0" stroke-width="2.4"/>
<path d="M1249,159.1 H1268" stroke="#c81818" stroke-width="2.4"/>
<ellipse cx="1258" cy="169" rx="10" ry="1.3" fill="#2e2e2e" filter="url(#sh)"/>

<!-- First -->
<rect x="14.1" y="233" width="7.2" height="37" fill="url(#gOr)" stroke="#a84800" stroke-width="1.1"/>
<path d="M21.6,251.2 L40.2,233.7 V241.5 H55.1 V261.7 H40.2 V268.8 Z" fill="url(#gOr)" stroke="#a84800" stroke-width="1.1"/>
<!-- Last -->
<rect x="48" y="328" width="7.2" height="36.5" fill="url(#gOr)" stroke="#a84800" stroke-width="1.1"/>
<path d="M47.7,346.3 L29,328.7 V336.5 H14 V356.7 H29 V363.9 Z" fill="url(#gOr)" stroke="#a84800" stroke-width="1.1"/>
<!-- Rnum -->
<g fill="#fcd8ae" stroke="#e8780c" stroke-width="1.8">
<circle cx="20.6" cy="425" r="6.9"/><circle cx="50.3" cy="425" r="6.9"/>
<circle cx="20.6" cy="441.1" r="6.9"/><circle cx="50.3" cy="441.1" r="6.9"/>
<circle cx="20.6" cy="456.9" r="6.9"/><circle cx="50.3" cy="456.9" r="6.9"/></g>
<g font-family="Liberation Sans" font-size="10" font-weight="bold" fill="#1a1a1a" text-anchor="middle">
<text x="20.6" y="428.5">3</text><text x="50.3" y="428.5">1</text>
<text x="20.6" y="444.6">1</text><text x="50.3" y="444.6">2</text>
<text x="20.6" y="460.4">2</text><text x="50.3" y="460.4">3</text></g>
<g fill="#0a6ee8"><path d="M30.5,422.8 H35 V419.5 L40.5,425 L35,430.5 V427.2 H30.5 Z"/><path d="M30.5,438.9 H35 V435.6 L40.5,441.1 L35,446.6 V443.3 H30.5 Z"/><path d="M30.5,454.7 H35 V451.4 L40.5,456.9 L35,462.4 V459.1 H30.5 Z"/></g>

<!-- Select arrow -->
<path d="M1441.5,232.5 L1467,257.5 L1455,257.8 L1461,270 L1455.5,272 L1450,260 L1441.5,268.5 Z" fill="url(#gArrow)" stroke="#1a6ff0" stroke-width="2" stroke-linejoin="miter"/>
<!-- Pencil -->
<ellipse cx="1450" cy="371" rx="17" ry="2.2" fill="#222" filter="url(#sh)"/>
<g transform="translate(1429.5,366.7) rotate(-45)">
<path d="M0,0 L12,-6.5 V6.5 Z" fill="#f3cc6c"/>
<path d="M0,0 L3.5,-1.9 V1.9 Z" fill="#222"/>
<rect x="12" y="-6.8" width="32" height="13.6" fill="url(#gPen)"/>
<rect x="44" y="-6.8" width="7" height="13.6" fill="#d6d6d6"/>
<path d="M46,-6.8 V6.8 M48.5,-6.8 V6.8" stroke="#aaa" stroke-width="0.8"/>
<path d="M51,-6.8 H56 Q60,-6.8 60,-2 V2 Q60,6.8 56,6.8 H51 Z" fill="#e06464"/>
</g>
<!-- Break -->
<g stroke="#6a6a6a" stroke-width="0.8" fill="none"><rect x="1426.4" y="416.7" width="51" height="14.8"/><path d="M1426.4,424 H1477.4 M1439,416.7 V431.5 M1452,416.7 V431.5 M1465,416.7 V431.5"/>
<rect x="1426.4" y="453" width="51" height="14.8"/><path d="M1426.4,460.4 H1477.4 M1439,453 V467.8 M1452,453 V467.8 M1465,453 V467.8"/></g>
<path d="M1426.4,424.1 H1477.5" stroke="#1a6fd0" stroke-width="3"/>
<path d="M1448,435 H1456.5 V443 H1460.7 L1452.3,451.7 L1443.9,443 H1448 Z" fill="#e00000"/>
<path d="M1426.4,460.4 H1442" stroke="#1a6fd0" stroke-width="3"/>
<path d="M1440,453.5 L1449.5,460.4 L1440,467.3 Z" fill="#1a6fd0"/>
<rect x="1454.6" y="453.5" width="10.1" height="13.8" fill="#1a6fd0"/>
<path d="M1464,460.4 H1477.5" stroke="#1a6fd0" stroke-width="3"/>
<!-- Insert plus -->
<ellipse cx="1450" cy="561" rx="20" ry="2" fill="#2a2a2a" filter="url(#sh)"/>
<path d="M1444,512.8 H1456.6 Q1458.7,512.8 1458.7,515 V528.3 H1473.3 Q1475.5,528.3 1475.5,530.5 V542.9 Q1475.5,545.1 1473.3,545.1 H1458.7 V558.3 Q1458.7,560.5 1456.6,560.5 H1444 Q1441.9,560.5 1441.9,558.3 V545.1 H1426.6 Q1424.4,545.1 1424.4,542.9 V530.5 Q1424.4,528.3 1426.6,528.3 H1441.9 V515 Q1441.9,512.8 1444,512.8 Z" fill="url(#gPlus)" stroke="#2a6ab8" stroke-width="0.8"/>
<!-- Skip X -->
<ellipse cx="1452" cy="655" rx="20" ry="2" fill="#2a2a2a" filter="url(#sh)"/>
<path d="M1436.2,614.2 L1468.7,646.7 M1468.7,614.2 L1436.2,646.7" stroke="#c4400a" stroke-width="14.5" stroke-linecap="round"/>
<path d="M1436.2,614.2 L1468.7,646.7 M1468.7,614.2 L1436.2,646.7" stroke="url(#gX2)" stroke-width="12" stroke-linecap="round"/>
<!-- Paint brush -->
<ellipse cx="1448" cy="750" rx="16" ry="2" fill="#2a2a2a" filter="url(#sh)"/>
<path d="M1467.5,707 L1460.5,722" stroke="#3a3a3a" stroke-width="7.5" stroke-linecap="round"/>
<path d="M1445,717 L1457,713 L1465,725 L1465,733 Z" fill="#333"/>
<path d="M1429.5,737 L1441,725 L1449,731 L1464,737 L1464,744 L1447,748.5 Z" fill="#3271ef"/>
<path d="M1442.5,721 L1462,735 L1459,739 L1456,736 L1453,741 L1450,734 L1447,736 L1444,729 Z" fill="#b3621c"/>
<path d="M1442.6,718.5 L1464,733.5" stroke="#f2f2f2" stroke-width="4"/>
<!-- Seq -->
<text x="1452" y="820.7" font-family="Liberation Sans" font-size="26" fill="#e00000" stroke="#e00000" stroke-width="0.7" text-anchor="middle" letter-spacing="3">AC</text>
<text x="1452" y="-823.3" font-family="Liberation Sans" font-size="26" fill="#1a80f0" stroke="#1a80f0" stroke-width="0.7" text-anchor="middle" letter-spacing="3" transform="scale(-1,-1) translate(-2904,0)">GT</text>
<!-- restore button icon -->
<rect x="1472.5" y="50.8" width="19.8" height="20" rx="2.5" fill="#5c5c5c" stroke="#1e1e1e" stroke-width="1.6"/>
<rect x="1474" y="52.3" width="16.8" height="17" fill="none" stroke="#7c7c7c" stroke-width="1"/>
<rect x="1479.5" y="53.2" width="9.8" height="9.5" fill="#0e0e0e"/><rect x="1481.2" y="55.6" width="6" height="4.8" fill="#6a6a6a"/>
<rect x="1476" y="58" width="9.2" height="9.6" fill="#0e0e0e"/><rect x="1478" y="61" width="5.2" height="4.4" fill="#8a8a8a"/>
<path d="M1484,1189 L1494,1179 M1489,1189 L1494,1184" stroke="#262626" stroke-width="1.5"/><path d="M1485,1190 L1495,1180 M1490,1190 L1495,1185" stroke="#6a6a6a" stroke-width="1"/>
</svg>
<svg class="a" style="left:0;top:0" width="1500" height="1191"><rect x="0.8" y="56.9" width="1.6" height="1.6" fill="#3a3a3a"/><rect x="2.4" y="58.7" width="1.7" height="1.7" fill="#6c6c6c"/><rect x="10.4" y="56.9" width="1.6" height="1.6" fill="#3a3a3a"/><rect x="12.0" y="58.7" width="1.7" height="1.7" fill="#6c6c6c"/><rect x="5.7" y="61.5" width="1.6" height="1.6" fill="#3a3a3a"/><rect x="7.3" y="63.3" width="1.7" height="1.7" fill="#6c6c6c"/><rect x="20.0" y="56.9" width="1.6" height="1.6" fill="#3a3a3a"/><rect x="21.6" y="58.7" width="1.7" height="1.7" fill="#6c6c6c"/><rect x="15.3" y="61.5" width="1.6" height="1.6" fill="#3a3a3a"/><rect x="16.9" y="63.3" width="1.7" height="1.7" fill="#6c6c6c"/><rect x="29.6" y="56.9" width="1.6" height="1.6" fill="#3a3a3a"/><rect x="31.2" y="58.7" width="1.7" height="1.7" fill="#6c6c6c"/><rect x="24.9" y="61.5" width="1.6" height="1.6" fill="#3a3a3a"/><rect x="26.5" y="63.3" width="1.7" height="1.7" fill="#6c6c6c"/><rect x="39.2" y="56.9" width="1.6" height="1.6" fill="#3a3a3a"/><rect x="40.8" y="58.7" width="1.7" height="1.7" fill="#6c6c6c"/><rect x="34.5" y="61.5" width="1.6" height="1.6" fill="#3a3a3a"/><rect x="36.1" y="63.3" width="1.7" height="1.7" fill="#6c6c6c"/><rect x="48.8" y="56.9" width="1.6" height="1.6" fill="#3a3a3a"/><rect x="50.4" y="58.7" width="1.7" height="1.7" fill="#6c6c6c"/><rect x="44.1" y="61.5" width="1.6" height="1.6" fill="#3a3a3a"/><rect x="45.7" y="63.3" width="1.7" height="1.7" fill="#6c6c6c"/><rect x="58.4" y="56.9" width="1.6" height="1.6" fill="#3a3a3a"/><rect x="60.0" y="58.7" width="1.7" height="1.7" fill="#6c6c6c"/><rect x="53.7" y="61.5" width="1.6" height="1.6" fill="#3a3a3a"/><rect x="55.3" y="63.3" width="1.7" height="1.7" fill="#6c6c6c"/><rect x="68.0" y="56.9" width="1.6" height="1.6" fill="#3a3a3a"/><rect x="69.6" y="58.7" width="1.7" height="1.7" fill="#6c6c6c"/><rect x="63.3" y="61.5" width="1.6" height="1.6" fill="#3a3a3a"/><rect x="64.9" y="63.3" width="1.7" height="1.7" fill="#6c6c6c"/><rect x="77.6" y="56.9" width="1.6" height="1.6" fill="#3a3a3a"/><rect x="79.2" y="58.7" width="1.7" height="1.7" fill="#6c6c6c"/><rect x="72.9" y="61.5" width="1.6" height="1.6" fill="#3a3a3a"/><rect x="74.5" y="63.3" width="1.7" height="1.7" fill="#6c6c6c"/><rect x="87.2" y="56.9" width="1.6" height="1.6" fill="#3a3a3a"/><rect x="88.8" y="58.7" width="1.7" height="1.7" fill="#6c6c6c"/><rect x="82.5" y="61.5" width="1.6" height="1.6" fill="#3a3a3a"/><rect x="84.1" y="63.3" width="1.7" height="1.7" fill="#6c6c6c"/><rect x="96.8" y="56.9" width="1.6" height="1.6" fill="#3a3a3a"/><rect x="98.4" y="58.7" width="1.7" height="1.7" fill="#6c6c6c"/><rect x="92.1" y="61.5" width="1.6" height="1.6" fill="#3a3a3a"/><rect x="93.7" y="63.3" width="1.7" height="1.7" fill="#6c6c6c"/><rect x="106.4" y="56.9" width="1.6" height="1.6" fill="#3a3a3a"/><rect x="108.0" y="58.7" width="1.7" height="1.7" fill="#6c6c6c"/><rect x="101.7" y="61.5" width="1.6" height="1.6" fill="#3a3a3a"/><rect x="103.3" y="63.3" width="1.7" height="1.7" fill="#6c6c6c"/><rect x="116.0" y="56.9" width="1.6" height="1.6" fill="#3a3a3a"/><rect x="117.6" y="58.7" width="1.7" height="1.7" fill="#6c6c6c"/><rect x="111.3" y="61.5" width="1.6" height="1.6" fill="#3a3a3a"/><rect x="112.9" y="63.3" width="1.7" height="1.7" fill="#6c6c6c"/><rect x="125.6" y="56.9" width="1.6" height="1.6" fill="#3a3a3a"/><rect x="127.2" y="58.7" width="1.7" height="1.7" fill="#6c6c6c"/><rect x="120.9" y="61.5" width="1.6" height="1.6" fill="#3a3a3a"/><rect x="122.5" y="63.3" width="1.7" height="1.7" fill="#6c6c6c"/><rect x="135.2" y="56.9" width="1.6" height="1.6" fill="#3a3a3a"/><rect x="136.8" y="58.7" width="1.7" height="1.7" fill="#6c6c6c"/><rect x="130.5" y="61.5" width="1.6" height="1.6" fill="#3a3a3a"/><rect x="132.1" y="63.3" width="1.7" height="1.7" fill="#6c6c6c"/><rect x="144.8" y="56.9" width="1.6" height="1.6" fill="#3a3a3a"/><rect x="146.4" y="58.7" width="1.7" height="1.7" fill="#6c6c6c"/><rect x="140.1" y="61.5" width="1.6" height="1.6" fill="#3a3a3a"/><rect x="141.7" y="63.3" width="1.7" height="1.7" fill="#6c6c6c"/><rect x="154.4" y="56.9" width="1.6" height="1.6" fill="#3a3a3a"/><rect x="156.0" y="58.7" width="1.7" height="1.7" fill="#6c6c6c"/><rect x="149.7" y="61.5" width="1.6" height="1.6" fill="#3a3a3a"/><rect x="151.3" y="63.3" width="1.7" height="1.7" fill="#6c6c6c"/><rect x="164.0" y="56.9" width="1.6" height="1.6" fill="#3a3a3a"/><rect x="165.6" y="58.7" width="1.7" height="1.7" fill="#6c6c6c"/><rect x="159.3" y="61.5" width="1.6" height="1.6" fill="#3a3a3a"/><rect x="160.9" y="63.3" width="1.7" height="1.7" fill="#6c6c6c"/><rect x="173.6" y="56.9" width="1.6" height="1.6" fill="#3a3a3a"/><rect x="175.2" y="58.7" width="1.7" height="1.7" fill="#6c6c6c"/><rect x="168.9" y="61.5" width="1.6" height="1.6" fill="#3a3a3a"/><rect x="170.5" y="63.3" width="1.7" height="1.7" fill="#6c6c6c"/><rect x="183.2" y="56.9" width="1.6" height="1.6" fill="#3a3a3a"/><rect x="184.8" y="58.7" width="1.7" height="1.7" fill="#6c6c6c"/><rect x="178.5" y="61.5" width="1.6" height="1.6" fill="#3a3a3a"/><rect x="180.1" y="63.3" width="1.7" height="1.7" fill="#6c6c6c"/><rect x="192.8" y="56.9" width="1.6" height="1.6" fill="#3a3a3a"/><rect x="194.4" y="58.7" width="1.7" height="1.7" fill="#6c6c6c"/><rect x="188.1" y="61.5" width="1.6" height="1.6" fill="#3a3a3a"/><rect x="189.7" y="63.3" width="1.7" height="1.7" fill="#6c6c6c"/><rect x="202.4" y="56.9" width="1.6" height="1.6" fill="#3a3a3a"/><rect x="204.0" y="58.7" width="1.7" height="1.7" fill="#6c6c6c"/><rect x="197.7" y="61.5" width="1.6" height="1.6" fill="#3a3a3a"/><rect x="199.3" y="63.3" width="1.7" height="1.7" fill="#6c6c6c"/><rect x="212.0" y="56.9" width="1.6" height="1.6" fill="#3a3a3a"/><rect x="213.6" y="58.7" width="1.7" height="1.7" fill="#6c6c6c"/><rect x="207.3" y="61.5" width="1.6" height="1.6" fill="#3a3a3a"/><rect x="208.9" y="63.3" width="1.7" height="1.7" fill="#6c6c6c"/><rect x="221.6" y="56.9" width="1.6" height="1.6" fill="#3a3a3a"/><rect x="223.2" y="58.7" width="1.7" height="1.7" fill="#6c6c6c"/><rect x="216.9" y="61.5" width="1.6" height="1.6" fill="#3a3a3a"/><rect x="218.5" y="63.3" width="1.7" height="1.7" fill="#6c6c6c"/><rect x="231.2" y="56.9" width="1.6" height="1.6" fill="#3a3a3a"/><rect x="232.8" y="58.7" width="1.7" height="1.7" fill="#6c6c6c"/><rect x="226.5" y="61.5" width="1.6" height="1.6" fill="#3a3a3a"/><rect x="228.1" y="63.3" width="1.7" height="1.7" fill="#6c6c6c"/><rect x="240.8" y="56.9" width="1.6" height="1.6" fill="#3a3a3a"/><rect x="242.4" y="58.7" width="1.7" height="1.7" fill="#6c6c6c"/><rect x="236.1" y="61.5" width="1.6" height="1.6" fill="#3a3a3a"/><rect x="237.7" y="63.3" width="1.7" height="1.7" fill="#6c6c6c"/><rect x="250.4" y="56.9" width="1.6" height="1.6" fill="#3a3a3a"/><rect x="252.0" y="58.7" width="1.7" height="1.7" fill="#6c6c6c"/><rect x="245.7" y="61.5" width="1.6" height="1.6" fill="#3a3a3a"/><rect x="247.3" y="63.3" width="1.7" height="1.7" fill="#6c6c6c"/><rect x="260.0" y="56.9" width="1.6" height="1.6" fill="#3a3a3a"/><rect x="261.6" y="58.7" width="1.7" height="1.7" fill="#6c6c6c"/><rect x="255.3" y="61.5" width="1.6" height="1.6" fill="#3a3a3a"/><rect x="256.9" y="63.3" width="1.7" height="1.7" fill="#6c6c6c"/><rect x="269.6" y="56.9" width="1.6" height="1.6" fill="#3a3a3a"/><rect x="271.2" y="58.7" width="1.7" height="1.7" fill="#6c6c6c"/><rect x="264.9" y="61.5" width="1.6" height="1.6" fill="#3a3a3a"/><rect x="266.5" y="63.3" width="1.7" height="1.7" fill="#6c6c6c"/><rect x="279.2" y="56.9" width="1.6" height="1.6" fill="#3a3a3a"/><rect x="280.8" y="58.7" width="1.7" height="1.7" fill="#6c6c6c"/><rect x="274.5" y="61.5" width="1.6" height="1.6" fill="#3a3a3a"/><rect x="276.1" y="63.3" width="1.7" height="1.7" fill="#6c6c6c"/><rect x="288.8" y="56.9" width="1.6" height="1.6" fill="#3a3a3a"/><rect x="290.4" y="58.7" width="1.7" height="1.7" fill="#6c6c6c"/><rect x="284.1" y="61.5" width="1.6" height="1.6" fill="#3a3a3a"/><rect x="285.7" y="63.3" width="1.7" height="1.7" fill="#6c6c6c"/><rect x="298.4" y="56.9" width="1.6" height="1.6" fill="#3a3a3a"/><rect x="300.0" y="58.7" width="1.7" height="1.7" fill="#6c6c6c"/><rect x="293.7" y="61.5" width="1.6" height="1.6" fill="#3a3a3a"/><rect x="295.3" y="63.3" width="1.7" height="1.7" fill="#6c6c6c"/><rect x="308.0" y="56.9" width="1.6" height="1.6" fill="#3a3a3a"/><rect x="309.6" y="58.7" width="1.7" height="1.7" fill="#6c6c6c"/><rect x="303.3" y="61.5" width="1.6" height="1.6" fill="#3a3a3a"/><rect x="304.9" y="63.3" width="1.7" height="1.7" fill="#6c6c6c"/><rect x="317.6" y="56.9" width="1.6" height="1.6" fill="#3a3a3a"/><rect x="319.2" y="58.7" width="1.7" height="1.7" fill="#6c6c6c"/><rect x="312.9" y="61.5" width="1.6" height="1.6" fill="#3a3a3a"/><rect x="314.5" y="63.3" width="1.7" height="1.7" fill="#6c6c6c"/><rect x="327.2" y="56.9" width="1.6" height="1.6" fill="#3a3a3a"/><rect x="328.8" y="58.7" width="1.7" height="1.7" fill="#6c6c6c"/><rect x="322.5" y="61.5" width="1.6" height="1.6" fill="#3a3a3a"/><rect x="324.1" y="63.3" width="1.7" height="1.7" fill="#6c6c6c"/><rect x="336.8" y="56.9" width="1.6" height="1.6" fill="#3a3a3a"/><rect x="338.4" y="58.7" width="1.7" height="1.7" fill="#6c6c6c"/><rect x="332.1" y="61.5" width="1.6" height="1.6" fill="#3a3a3a"/><rect x="333.7" y="63.3" width="1.7" height="1.7" fill="#6c6c6c"/><rect x="346.4" y="56.9" width="1.6" height="1.6" fill="#3a3a3a"/><rect x="348.0" y="58.7" width="1.7" height="1.7" fill="#6c6c6c"/><rect x="341.7" y="61.5" width="1.6" height="1.6" fill="#3a3a3a"/><rect x="343.3" y="63.3" width="1.7" height="1.7" fill="#6c6c6c"/><rect x="356.0" y="56.9" width="1.6" height="1.6" fill="#3a3a3a"/><rect x="357.6" y="58.7" width="1.7" height="1.7" fill="#6c6c6c"/><rect x="351.3" y="61.5" width="1.6" height="1.6" fill="#3a3a3a"/><rect x="352.9" y="63.3" width="1.7" height="1.7" fill="#6c6c6c"/><rect x="365.6" y="56.9" width="1.6" height="1.6" fill="#3a3a3a"/><rect x="367.2" y="58.7" width="1.7" height="1.7" fill="#6c6c6c"/><rect x="360.9" y="61.5" width="1.6" height="1.6" fill="#3a3a3a"/><rect x="362.5" y="63.3" width="1.7" height="1.7" fill="#6c6c6c"/><rect x="375.2" y="56.9" width="1.6" height="1.6" fill="#3a3a3a"/><rect x="376.8" y="58.7" width="1.7" height="1.7" fill="#6c6c6c"/><rect x="370.5" y="61.5" width="1.6" height="1.6" fill="#3a3a3a"/><rect x="372.1" y="63.3" width="1.7" height="1.7" fill="#6c6c6c"/><rect x="384.8" y="56.9" width="1.6" height="1.6" fill="#3a3a3a"/><rect x="386.4" y="58.7" width="1.7" height="1.7" fill="#6c6c6c"/><rect x="380.1" y="61.5" width="1.6" height="1.6" fill="#3a3a3a"/><rect x="381.7" y="63.3" width="1.7" height="1.7" fill="#6c6c6c"/><rect x="394.4" y="56.9" width="1.6" height="1.6" fill="#3a3a3a"/><rect x="396.0" y="58.7" width="1.7" height="1.7" fill="#6c6c6c"/><rect x="389.7" y="61.5" width="1.6" height="1.6" fill="#3a3a3a"/><rect x="391.3" y="63.3" width="1.7" height="1.7" fill="#6c6c6c"/><rect x="404.0" y="56.9" width="1.6" height="1.6" fill="#3a3a3a"/><rect x="405.6" y="58.7" width="1.7" height="1.7" fill="#6c6c6c"/><rect x="399.3" y="61.5" width="1.6" height="1.6" fill="#3a3a3a"/><rect x="400.9" y="63.3" width="1.7" height="1.7" fill="#6c6c6c"/><rect x="413.6" y="56.9" width="1.6" height="1.6" fill="#3a3a3a"/><rect x="415.2" y="58.7" width="1.7" height="1.7" fill="#6c6c6c"/><rect x="408.9" y="61.5" width="1.6" height="1.6" fill="#3a3a3a"/><rect x="410.5" y="63.3" width="1.7" height="1.7" fill="#6c6c6c"/><rect x="423.2" y="56.9" width="1.6" height="1.6" fill="#3a3a3a"/><rect x="424.8" y="58.7" width="1.7" height="1.7" fill="#6c6c6c"/><rect x="418.5" y="61.5" width="1.6" height="1.6" fill="#3a3a3a"/><rect x="420.1" y="63.3" width="1.7" height="1.7" fill="#6c6c6c"/><rect x="432.8" y="56.9" width="1.6" height="1.6" fill="#3a3a3a"/><rect x="434.4" y="58.7" width="1.7" height="1.7" fill="#6c6c6c"/><rect x="428.1" y="61.5" width="1.6" height="1.6" fill="#3a3a3a"/><rect x="429.7" y="63.3" width="1.7" height="1.7" fill="#6c6c6c"/><rect x="442.4" y="56.9" width="1.6" height="1.6" fill="#3a3a3a"/><rect x="444.0" y="58.7" width="1.7" height="1.7" fill="#6c6c6c"/><rect x="437.7" y="61.5" width="1.6" height="1.6" fill="#3a3a3a"/><rect x="439.3" y="63.3" width="1.7" height="1.7" fill="#6c6c6c"/><rect x="452.0" y="56.9" width="1.6" height="1.6" fill="#3a3a3a"/><rect x="453.6" y="58.7" width="1.7" height="1.7" fill="#6c6c6c"/><rect x="447.3" y="61.5" width="1.6" height="1.6" fill="#3a3a3a"/><rect x="448.9" y="63.3" width="1.7" height="1.7" fill="#6c6c6c"/><rect x="461.6" y="56.9" width="1.6" height="1.6" fill="#3a3a3a"/><rect x="463.2" y="58.7" width="1.7" height="1.7" fill="#6c6c6c"/><rect x="456.9" y="61.5" width="1.6" height="1.6" fill="#3a3a3a"/><rect x="458.5" y="63.3" width="1.7" height="1.7" fill="#6c6c6c"/><rect x="471.2" y="56.9" width="1.6" height="1.6" fill="#3a3a3a"/><rect x="472.8" y="58.7" width="1.7" height="1.7" fill="#6c6c6c"/><rect x="466.5" y="61.5" width="1.6" height="1.6" fill="#3a3a3a"/><rect x="468.1" y="63.3" width="1.7" height="1.7" fill="#6c6c6c"/><rect x="480.8" y="56.9" width="1.6" height="1.6" fill="#3a3a3a"/><rect x="482.4" y="58.7" width="1.7" height="1.7" fill="#6c6c6c"/><rect x="476.1" y="61.5" width="1.6" height="1.6" fill="#3a3a3a"/><rect x="477.7" y="63.3" width="1.7" height="1.7" fill="#6c6c6c"/><rect x="490.4" y="56.9" width="1.6" height="1.6" fill="#3a3a3a"/><rect x="492.0" y="58.7" width="1.7" height="1.7" fill="#6c6c6c"/><rect x="485.7" y="61.5" width="1.6" height="1.6" fill="#3a3a3a"/><rect x="487.3" y="63.3" width="1.7" height="1.7" fill="#6c6c6c"/><rect x="500.0" y="56.9" width="1.6" height="1.6" fill="#3a3a3a"/><rect x="501.6" y="58.7" width="1.7" height="1.7" fill="#6c6c6c"/><rect x="495.3" y="61.5" width="1.6" height="1.6" fill="#3a3a3a"/><rect x="496.9" y="63.3" width="1.7" height="1.7" fill="#6c6c6c"/><rect x="509.6" y="56.9" width="1.6" height="1.6" fill="#3a3a3a"/><rect x="511.2" y="58.7" width="1.7" height="1.7" fill="#6c6c6c"/><rect x="504.9" y="61.5" width="1.6" height="1.6" fill="#3a3a3a"/><rect x="506.5" y="63.3" width="1.7" height="1.7" fill="#6c6c6c"/><rect x="519.2" y="56.9" width="1.6" height="1.6" fill="#3a3a3a"/><rect x="520.8" y="58.7" width="1.7" height="1.7" fill="#6c6c6c"/><rect x="514.5" y="61.5" width="1.6" height="1.6" fill="#3a3a3a"/><rect x="516.1" y="63.3" width="1.7" height="1.7" fill="#6c6c6c"/><rect x="528.8" y="56.9" width="1.6" height="1.6" fill="#3a3a3a"/><rect x="530.4" y="58.7" width="1.7" height="1.7" fill="#6c6c6c"/><rect x="524.1" y="61.5" width="1.6" height="1.6" fill="#3a3a3a"/><rect x="525.7" y="63.3" width="1.7" height="1.7" fill="#6c6c6c"/><rect x="538.4" y="56.9" width="1.6" height="1.6" fill="#3a3a3a"/><rect x="540.0" y="58.7" width="1.7" height="1.7" fill="#6c6c6c"/><rect x="533.7" y="61.5" width="1.6" height="1.6" fill="#3a3a3a"/><rect x="535.3" y="63.3" width="1.7" height="1.7" fill="#6c6c6c"/><rect x="548.0" y="56.9" width="1.6" height="1.6" fill="#3a3a3a"/><rect x="549.6" y="58.7" width="1.7" height="1.7" fill="#6c6c6c"/><rect x="543.3" y="61.5" width="1.6" height="1.6" fill="#3a3a3a"/><rect x="544.9" y="63.3" width="1.7" height="1.7" fill="#6c6c6c"/><rect x="557.6" y="56.9" width="1.6" height="1.6" fill="#3a3a3a"/><rect x="559.2" y="58.7" width="1.7" height="1.7" fill="#6c6c6c"/><rect x="552.9" y="61.5" width="1.6" height="1.6" fill="#3a3a3a"/><rect x="554.5" y="63.3" width="1.7" height="1.7" fill="#6c6c6c"/><rect x="567.2" y="56.9" width="1.6" height="1.6" fill="#3a3a3a"/><rect x="568.8" y="58.7" width="1.7" height="1.7" fill="#6c6c6c"/><rect x="562.5" y="61.5" width="1.6" height="1.6" fill="#3a3a3a"/><rect x="564.1" y="63.3" width="1.7" height="1.7" fill="#6c6c6c"/><rect x="576.8" y="56.9" width="1.6" height="1.6" fill="#3a3a3a"/><rect x="578.4" y="58.7" width="1.7" height="1.7" fill="#6c6c6c"/><rect x="572.1" y="61.5" width="1.6" height="1.6" fill="#3a3a3a"/><rect x="573.7" y="63.3" width="1.7" height="1.7" fill="#6c6c6c"/><rect x="586.4" y="56.9" width="1.6" height="1.6" fill="#3a3a3a"/><rect x="588.0" y="58.7" width="1.7" height="1.7" fill="#6c6c6c"/><rect x="581.7" y="61.5" width="1.6" height="1.6" fill="#3a3a3a"/><rect x="583.3" y="63.3" width="1.7" height="1.7" fill="#6c6c6c"/><rect x="596.0" y="56.9" width="1.6" height="1.6" fill="#3a3a3a"/><rect x="597.6" y="58.7" width="1.7" height="1.7" fill="#6c6c6c"/><rect x="591.3" y="61.5" width="1.6" height="1.6" fill="#3a3a3a"/><rect x="592.9" y="63.3" width="1.7" height="1.7" fill="#6c6c6c"/><rect x="605.6" y="56.9" width="1.6" height="1.6" fill="#3a3a3a"/><rect x="607.2" y="58.7" width="1.7" height="1.7" fill="#6c6c6c"/><rect x="600.9" y="61.5" width="1.6" height="1.6" fill="#3a3a3a"/><rect x="602.5" y="63.3" width="1.7" height="1.7" fill="#6c6c6c"/><rect x="615.2" y="56.9" width="1.6" height="1.6" fill="#3a3a3a"/><rect x="616.8" y="58.7" width="1.7" height="1.7" fill="#6c6c6c"/><rect x="610.5" y="61.5" width="1.6" height="1.6" fill="#3a3a3a"/><rect x="612.1" y="63.3" width="1.7" height="1.7" fill="#6c6c6c"/><rect x="624.8" y="56.9" width="1.6" height="1.6" fill="#3a3a3a"/><rect x="626.4" y="58.7" width="1.7" height="1.7" fill="#6c6c6c"/><rect x="620.1" y="61.5" width="1.6" height="1.6" fill="#3a3a3a"/><rect x="621.7" y="63.3" width="1.7" height="1.7" fill="#6c6c6c"/><rect x="634.4" y="56.9" width="1.6" height="1.6" fill="#3a3a3a"/><rect x="636.0" y="58.7" width="1.7" height="1.7" fill="#6c6c6c"/><rect x="629.7" y="61.5" width="1.6" height="1.6" fill="#3a3a3a"/><rect x="631.3" y="63.3" width="1.7" height="1.7" fill="#6c6c6c"/><rect x="644.0" y="56.9" width="1.6" height="1.6" fill="#3a3a3a"/><rect x="645.6" y="58.7" width="1.7" height="1.7" fill="#6c6c6c"/><rect x="639.3" y="61.5" width="1.6" height="1.6" fill="#3a3a3a"/><rect x="640.9" y="63.3" width="1.7" height="1.7" fill="#6c6c6c"/><rect x="653.6" y="56.9" width="1.6" height="1.6" fill="#3a3a3a"/><rect x="655.2" y="58.7" width="1.7" height="1.7" fill="#6c6c6c"/><rect x="648.9" y="61.5" width="1.6" height="1.6" fill="#3a3a3a"/><rect x="650.5" y="63.3" width="1.7" height="1.7" fill="#6c6c6c"/><rect x="663.2" y="56.9" width="1.6" height="1.6" fill="#3a3a3a"/><rect x="664.8" y="58.7" width="1.7" height="1.7" fill="#6c6c6c"/><rect x="658.5" y="61.5" width="1.6" height="1.6" fill="#3a3a3a"/><rect x="660.1" y="63.3" width="1.7" height="1.7" fill="#6c6c6c"/><rect x="672.8" y="56.9" width="1.6" height="1.6" fill="#3a3a3a"/><rect x="674.4" y="58.7" width="1.7" height="1.7" fill="#6c6c6c"/><rect x="668.1" y="61.5" width="1.6" height="1.6" fill="#3a3a3a"/><rect x="669.7" y="63.3" width="1.7" height="1.7" fill="#6c6c6c"/><rect x="682.4" y="56.9" width="1.6" height="1.6" fill="#3a3a3a"/><rect x="684.0" y="58.7" width="1.7" height="1.7" fill="#6c6c6c"/><rect x="677.7" y="61.5" width="1.6" height="1.6" fill="#3a3a3a"/><rect x="679.3" y="63.3" width="1.7" height="1.7" fill="#6c6c6c"/><rect x="687.3" y="61.5" width="1.6" height="1.6" fill="#3a3a3a"/><rect x="688.9" y="63.3" width="1.7" height="1.7" fill="#6c6c6c"/><rect x="778.4" y="56.9" width="1.6" height="1.6" fill="#3a3a3a"/><rect x="780.0" y="58.7" width="1.7" height="1.7" fill="#6c6c6c"/><rect x="788.0" y="56.9" width="1.6" height="1.6" fill="#3a3a3a"/><rect x="789.6" y="58.7" width="1.7" height="1.7" fill="#6c6c6c"/><rect x="783.3" y="61.5" width="1.6" height="1.6" fill="#3a3a3a"/><rect x="784.9" y="63.3" width="1.7" height="1.7" fill="#6c6c6c"/><rect x="797.6" y="56.9" width="1.6" height="1.6" fill="#3a3a3a"/><rect x="799.2" y="58.7" width="1.7" height="1.7" fill="#6c6c6c"/><rect x="792.9" y="61.5" width="1.6" height="1.6" fill="#3a3a3a"/><rect x="794.5" y="63.3" width="1.7" height="1.7" fill="#6c6c6c"/><rect x="807.2" y="56.9" width="1.6" height="1.6" fill="#3a3a3a"/><rect x="808.8" y="58.7" width="1.7" height="1.7" fill="#6c6c6c"/><rect x="802.5" y="61.5" width="1.6" height="1.6" fill="#3a3a3a"/><rect x="804.1" y="63.3" width="1.7" height="1.7" fill="#6c6c6c"/><rect x="816.8" y="56.9" width="1.6" height="1.6" fill="#3a3a3a"/><rect x="818.4" y="58.7" width="1.7" height="1.7" fill="#6c6c6c"/><rect x="812.1" y="61.5" width="1.6" height="1.6" fill="#3a3a3a"/><rect x="813.7" y="63.3" width="1.7" height="1.7" fill="#6c6c6c"/><rect x="826.4" y="56.9" width="1.6" height="1.6" fill="#3a3a3a"/><rect x="828.0" y="58.7" width="1.7" height="1.7" fill="#6c6c6c"/><rect x="821.7" y="61.5" width="1.6" height="1.6" fill="#3a3a3a"/><rect x="823.3" y="63.3" width="1.7" height="1.7" fill="#6c6c6c"/><rect x="836.0" y="56.9" width="1.6" height="1.6" fill="#3a3a3a"/><rect x="837.6" y="58.7" width="1.7" height="1.7" fill="#6c6c6c"/><rect x="831.3" y="61.5" width="1.6" height="1.6" fill="#3a3a3a"/><rect x="832.9" y="63.3" width="1.7" height="1.7" fill="#6c6c6c"/><rect x="845.6" y="56.9" width="1.6" height="1.6" fill="#3a3a3a"/><rect x="847.2" y="58.7" width="1.7" height="1.7" fill="#6c6c6c"/><rect x="840.9" y="61.5" width="1.6" height="1.6" fill="#3a3a3a"/><rect x="842.5" y="63.3" width="1.7" height="1.7" fill="#6c6c6c"/><rect x="855.2" y="56.9" width="1.6" height="1.6" fill="#3a3a3a"/><rect x="856.8" y="58.7" width="1.7" height="1.7" fill="#6c6c6c"/><rect x="850.5" y="61.5" width="1.6" height="1.6" fill="#3a3a3a"/><rect x="852.1" y="63.3" width="1.7" height="1.7" fill="#6c6c6c"/><rect x="864.8" y="56.9" width="1.6" height="1.6" fill="#3a3a3a"/><rect x="866.4" y="58.7" width="1.7" height="1.7" fill="#6c6c6c"/><rect x="860.1" y="61.5" width="1.6" height="1.6" fill="#3a3a3a"/><rect x="861.7" y="63.3" width="1.7" height="1.7" fill="#6c6c6c"/><rect x="874.4" y="56.9" width="1.6" height="1.6" fill="#3a3a3a"/><rect x="876.0" y="58.7" width="1.7" height="1.7" fill="#6c6c6c"/><rect x="869.7" y="61.5" width="1.6" height="1.6" fill="#3a3a3a"/><rect x="871.3" y="63.3" width="1.7" height="1.7" fill="#6c6c6c"/><rect x="884.0" y="56.9" width="1.6" height="1.6" fill="#3a3a3a"/><rect x="885.6" y="58.7" width="1.7" height="1.7" fill="#6c6c6c"/><rect x="879.3" y="61.5" width="1.6" height="1.6" fill="#3a3a3a"/><rect x="880.9" y="63.3" width="1.7" height="1.7" fill="#6c6c6c"/><rect x="893.6" y="56.9" width="1.6" height="1.6" fill="#3a3a3a"/><rect x="895.2" y="58.7" width="1.7" height="1.7" fill="#6c6c6c"/><rect x="888.9" y="61.5" width="1.6" height="1.6" fill="#3a3a3a"/><rect x="890.5" y="63.3" width="1.7" height="1.7" fill="#6c6c6c"/><rect x="903.2" y="56.9" width="1.6" height="1.6" fill="#3a3a3a"/><rect x="904.8" y="58.7" width="1.7" height="1.7" fill="#6c6c6c"/><rect x="898.5" y="61.5" width="1.6" height="1.6" fill="#3a3a3a"/><rect x="900.1" y="63.3" width="1.7" height="1.7" fill="#6c6c6c"/><rect x="912.8" y="56.9" width="1.6" height="1.6" fill="#3a3a3a"/><rect x="914.4" y="58.7" width="1.7" height="1.7" fill="#6c6c6c"/><rect x="908.1" y="61.5" width="1.6" height="1.6" fill="#3a3a3a"/><rect x="909.7" y="63.3" width="1.7" height="1.7" fill="#6c6c6c"/><rect x="922.4" y="56.9" width="1.6" height="1.6" fill="#3a3a3a"/><rect x="924.0" y="58.7" width="1.7" height="1.7" fill="#6c6c6c"/><rect x="917.7" y="61.5" width="1.6" height="1.6" fill="#3a3a3a"/><rect x="919.3" y="63.3" width="1.7" height="1.7" fill="#6c6c6c"/><rect x="932.0" y="56.9" width="1.6" height="1.6" fill="#3a3a3a"/><rect x="933.6" y="58.7" width="1.7" height="1.7" fill="#6c6c6c"/><rect x="927.3" y="61.5" width="1.6" height="1.6" fill="#3a3a3a"/><rect x="928.9" y="63.3" width="1.7" height="1.7" fill="#6c6c6c"/><rect x="941.6" y="56.9" width="1.6" height="1.6" fill="#3a3a3a"/><rect x="943.2" y="58.7" width="1.7" height="1.7" fill="#6c6c6c"/><rect x="936.9" y="61.5" width="1.6" height="1.6" fill="#3a3a3a"/><rect x="938.5" y="63.3" width="1.7" height="1.7" fill="#6c6c6c"/><rect x="951.2" y="56.9" width="1.6" height="1.6" fill="#3a3a3a"/><rect x="952.8" y="58.7" width="1.7" height="1.7" fill="#6c6c6c"/><rect x="946.5" y="61.5" width="1.6" height="1.6" fill="#3a3a3a"/><rect x="948.1" y="63.3" width="1.7" height="1.7" fill="#6c6c6c"/><rect x="960.8" y="56.9" width="1.6" height="1.6" fill="#3a3a3a"/><rect x="962.4" y="58.7" width="1.7" height="1.7" fill="#6c6c6c"/><rect x="956.1" y="61.5" width="1.6" height="1.6" fill="#3a3a3a"/><rect x="957.7" y="63.3" width="1.7" height="1.7" fill="#6c6c6c"/><rect x="970.4" y="56.9" width="1.6" height="1.6" fill="#3a3a3a"/><rect x="972.0" y="58.7" width="1.7" height="1.7" fill="#6c6c6c"/><rect x="965.7" y="61.5" width="1.6" height="1.6" fill="#3a3a3a"/><rect x="967.3" y="63.3" width="1.7" height="1.7" fill="#6c6c6c"/><rect x="980.0" y="56.9" width="1.6" height="1.6" fill="#3a3a3a"/><rect x="981.6" y="58.7" width="1.7" height="1.7" fill="#6c6c6c"/><rect x="975.3" y="61.5" width="1.6" height="1.6" fill="#3a3a3a"/><rect x="976.9" y="63.3" width="1.7" height="1.7" fill="#6c6c6c"/><rect x="989.6" y="56.9" width="1.6" height="1.6" fill="#3a3a3a"/><rect x="991.2" y="58.7" width="1.7" height="1.7" fill="#6c6c6c"/><rect x="984.9" y="61.5" width="1.6" height="1.6" fill="#3a3a3a"/><rect x="986.5" y="63.3" width="1.7" height="1.7" fill="#6c6c6c"/><rect x="999.2" y="56.9" width="1.6" height="1.6" fill="#3a3a3a"/><rect x="1000.8" y="58.7" width="1.7" height="1.7" fill="#6c6c6c"/><rect x="994.5" y="61.5" width="1.6" height="1.6" fill="#3a3a3a"/><rect x="996.1" y="63.3" width="1.7" height="1.7" fill="#6c6c6c"/><rect x="1008.8" y="56.9" width="1.6" height="1.6" fill="#3a3a3a"/><rect x="1010.4" y="58.7" width="1.7" height="1.7" fill="#6c6c6c"/><rect x="1004.1" y="61.5" width="1.6" height="1.6" fill="#3a3a3a"/><rect x="1005.7" y="63.3" width="1.7" height="1.7" fill="#6c6c6c"/><rect x="1018.4" y="56.9" width="1.6" height="1.6" fill="#3a3a3a"/><rect x="1020.0" y="58.7" width="1.7" height="1.7" fill="#6c6c6c"/><rect x="1013.7" y="61.5" width="1.6" height="1.6" fill="#3a3a3a"/><rect x="1015.3" y="63.3" width="1.7" height="1.7" fill="#6c6c6c"/><rect x="1028.0" y="56.9" width="1.6" height="1.6" fill="#3a3a3a"/><rect x="1029.6" y="58.7" width="1.7" height="1.7" fill="#6c6c6c"/><rect x="1023.3" y="61.5" width="1.6" height="1.6" fill="#3a3a3a"/><rect x="1024.9" y="63.3" width="1.7" height="1.7" fill="#6c6c6c"/><rect x="1037.6" y="56.9" width="1.6" height="1.6" fill="#3a3a3a"/><rect x="1039.2" y="58.7" width="1.7" height="1.7" fill="#6c6c6c"/><rect x="1032.9" y="61.5" width="1.6" height="1.6" fill="#3a3a3a"/><rect x="1034.5" y="63.3" width="1.7" height="1.7" fill="#6c6c6c"/><rect x="1047.2" y="56.9" width="1.6" height="1.6" fill="#3a3a3a"/><rect x="1048.8" y="58.7" width="1.7" height="1.7" fill="#6c6c6c"/><rect x="1042.5" y="61.5" width="1.6" height="1.6" fill="#3a3a3a"/><rect x="1044.1" y="63.3" width="1.7" height="1.7" fill="#6c6c6c"/><rect x="1056.8" y="56.9" width="1.6" height="1.6" fill="#3a3a3a"/><rect x="1058.4" y="58.7" width="1.7" height="1.7" fill="#6c6c6c"/><rect x="1052.1" y="61.5" width="1.6" height="1.6" fill="#3a3a3a"/><rect x="1053.7" y="63.3" width="1.7" height="1.7" fill="#6c6c6c"/><rect x="1066.4" y="56.9" width="1.6" height="1.6" fill="#3a3a3a"/><rect x="1068.0" y="58.7" width="1.7" height="1.7" fill="#6c6c6c"/><rect x="1061.7" y="61.5" width="1.6" height="1.6" fill="#3a3a3a"/><rect x="1063.3" y="63.3" width="1.7" height="1.7" fill="#6c6c6c"/><rect x="1076.0" y="56.9" width="1.6" height="1.6" fill="#3a3a3a"/><rect x="1077.6" y="58.7" width="1.7" height="1.7" fill="#6c6c6c"/><rect x="1071.3" y="61.5" width="1.6" height="1.6" fill="#3a3a3a"/><rect x="1072.9" y="63.3" width="1.7" height="1.7" fill="#6c6c6c"/><rect x="1085.6" y="56.9" width="1.6" height="1.6" fill="#3a3a3a"/><rect x="1087.2" y="58.7" width="1.7" height="1.7" fill="#6c6c6c"/><rect x="1080.9" y="61.5" width="1.6" height="1.6" fill="#3a3a3a"/><rect x="1082.5" y="63.3" width="1.7" height="1.7" fill="#6c6c6c"/><rect x="1095.2" y="56.9" width="1.6" height="1.6" fill="#3a3a3a"/><rect x="1096.8" y="58.7" width="1.7" height="1.7" fill="#6c6c6c"/><rect x="1090.5" y="61.5" width="1.6" height="1.6" fill="#3a3a3a"/><rect x="1092.1" y="63.3" width="1.7" height="1.7" fill="#6c6c6c"/><rect x="1104.8" y="56.9" width="1.6" height="1.6" fill="#3a3a3a"/><rect x="1106.4" y="58.7" width="1.7" height="1.7" fill="#6c6c6c"/><rect x="1100.1" y="61.5" width="1.6" height="1.6" fill="#3a3a3a"/><rect x="1101.7" y="63.3" width="1.7" height="1.7" fill="#6c6c6c"/><rect x="1114.4" y="56.9" width="1.6" height="1.6" fill="#3a3a3a"/><rect x="1116.0" y="58.7" width="1.7" height="1.7" fill="#6c6c6c"/><rect x="1109.7" y="61.5" width="1.6" height="1.6" fill="#3a3a3a"/><rect x="1111.3" y="63.3" width="1.7" height="1.7" fill="#6c6c6c"/><rect x="1124.0" y="56.9" width="1.6" height="1.6" fill="#3a3a3a"/><rect x="1125.6" y="58.7" width="1.7" height="1.7" fill="#6c6c6c"/><rect x="1119.3" y="61.5" width="1.6" height="1.6" fill="#3a3a3a"/><rect x="1120.9" y="63.3" width="1.7" height="1.7" fill="#6c6c6c"/><rect x="1133.6" y="56.9" width="1.6" height="1.6" fill="#3a3a3a"/><rect x="1135.2" y="58.7" width="1.7" height="1.7" fill="#6c6c6c"/><rect x="1128.9" y="61.5" width="1.6" height="1.6" fill="#3a3a3a"/><rect x="1130.5" y="63.3" width="1.7" height="1.7" fill="#6c6c6c"/><rect x="1143.2" y="56.9" width="1.6" height="1.6" fill="#3a3a3a"/><rect x="1144.8" y="58.7" width="1.7" height="1.7" fill="#6c6c6c"/><rect x="1138.5" y="61.5" width="1.6" height="1.6" fill="#3a3a3a"/><rect x="1140.1" y="63.3" width="1.7" height="1.7" fill="#6c6c6c"/><rect x="1152.8" y="56.9" width="1.6" height="1.6" fill="#3a3a3a"/><rect x="1154.4" y="58.7" width="1.7" height="1.7" fill="#6c6c6c"/><rect x="1148.1" y="61.5" width="1.6" height="1.6" fill="#3a3a3a"/><rect x="1149.7" y="63.3" width="1.7" height="1.7" fill="#6c6c6c"/><rect x="1162.4" y="56.9" width="1.6" height="1.6" fill="#3a3a3a"/><rect x="1164.0" y="58.7" width="1.7" height="1.7" fill="#6c6c6c"/><rect x="1157.7" y="61.5" width="1.6" height="1.6" fill="#3a3a3a"/><rect x="1159.3" y="63.3" width="1.7" height="1.7" fill="#6c6c6c"/><rect x="1172.0" y="56.9" width="1.6" height="1.6" fill="#3a3a3a"/><rect x="1173.6" y="58.7" width="1.7" height="1.7" fill="#6c6c6c"/><rect x="1167.3" y="61.5" width="1.6" height="1.6" fill="#3a3a3a"/><rect x="1168.9" y="63.3" width="1.7" height="1.7" fill="#6c6c6c"/><rect x="1181.6" y="56.9" width="1.6" height="1.6" fill="#3a3a3a"/><rect x="1183.2" y="58.7" width="1.7" height="1.7" fill="#6c6c6c"/><rect x="1176.9" y="61.5" width="1.6" height="1.6" fill="#3a3a3a"/><rect x="1178.5" y="63.3" width="1.7" height="1.7" fill="#6c6c6c"/><rect x="1191.2" y="56.9" width="1.6" height="1.6" fill="#3a3a3a"/><rect x="1192.8" y="58.7" width="1.7" height="1.7" fill="#6c6c6c"/><rect x="1186.5" y="61.5" width="1.6" height="1.6" fill="#3a3a3a"/><rect x="1188.1" y="63.3" width="1.7" height="1.7" fill="#6c6c6c"/><rect x="1200.8" y="56.9" width="1.6" height="1.6" fill="#3a3a3a"/><rect x="1202.4" y="58.7" width="1.7" height="1.7" fill="#6c6c6c"/><rect x="1196.1" y="61.5" width="1.6" height="1.6" fill="#3a3a3a"/><rect x="1197.7" y="63.3" width="1.7" height="1.7" fill="#6c6c6c"/><rect x="1210.4" y="56.9" width="1.6" height="1.6" fill="#3a3a3a"/><rect x="1212.0" y="58.7" width="1.7" height="1.7" fill="#6c6c6c"/><rect x="1205.7" y="61.5" width="1.6" height="1.6" fill="#3a3a3a"/><rect x="1207.3" y="63.3" width="1.7" height="1.7" fill="#6c6c6c"/><rect x="1220.0" y="56.9" width="1.6" height="1.6" fill="#3a3a3a"/><rect x="1221.6" y="58.7" width="1.7" height="1.7" fill="#6c6c6c"/><rect x="1215.3" y="61.5" width="1.6" height="1.6" fill="#3a3a3a"/><rect x="1216.9" y="63.3" width="1.7" height="1.7" fill="#6c6c6c"/><rect x="1229.6" y="56.9" width="1.6" height="1.6" fill="#3a3a3a"/><rect x="1231.2" y="58.7" width="1.7" height="1.7" fill="#6c6c6c"/><rect x="1224.9" y="61.5" width="1.6" height="1.6" fill="#3a3a3a"/><rect x="1226.5" y="63.3" width="1.7" height="1.7" fill="#6c6c6c"/><rect x="1239.2" y="56.9" width="1.6" height="1.6" fill="#3a3a3a"/><rect x="1240.8" y="58.7" width="1.7" height="1.7" fill="#6c6c6c"/><rect x="1234.5" y="61.5" width="1.6" height="1.6" fill="#3a3a3a"/><rect x="1236.1" y="63.3" width="1.7" height="1.7" fill="#6c6c6c"/><rect x="1248.8" y="56.9" width="1.6" height="1.6" fill="#3a3a3a"/><rect x="1250.4" y="58.7" width="1.7" height="1.7" fill="#6c6c6c"/><rect x="1244.1" y="61.5" width="1.6" height="1.6" fill="#3a3a3a"/><rect x="1245.7" y="63.3" width="1.7" height="1.7" fill="#6c6c6c"/><rect x="1258.4" y="56.9" width="1.6" height="1.6" fill="#3a3a3a"/><rect x="1260.0" y="58.7" width="1.7" height="1.7" fill="#6c6c6c"/><rect x="1253.7" y="61.5" width="1.6" height="1.6" fill="#3a3a3a"/><rect x="1255.3" y="63.3" width="1.7" height="1.7" fill="#6c6c6c"/><rect x="1268.0" y="56.9" width="1.6" height="1.6" fill="#3a3a3a"/><rect x="1269.6" y="58.7" width="1.7" height="1.7" fill="#6c6c6c"/><rect x="1263.3" y="61.5" width="1.6" height="1.6" fill="#3a3a3a"/><rect x="1264.9" y="63.3" width="1.7" height="1.7" fill="#6c6c6c"/><rect x="1277.6" y="56.9" width="1.6" height="1.6" fill="#3a3a3a"/><rect x="1279.2" y="58.7" width="1.7" height="1.7" fill="#6c6c6c"/><rect x="1272.9" y="61.5" width="1.6" height="1.6" fill="#3a3a3a"/><rect x="1274.5" y="63.3" width="1.7" height="1.7" fill="#6c6c6c"/><rect x="1287.2" y="56.9" width="1.6" height="1.6" fill="#3a3a3a"/><rect x="1288.8" y="58.7" width="1.7" height="1.7" fill="#6c6c6c"/><rect x="1282.5" y="61.5" width="1.6" height="1.6" fill="#3a3a3a"/><rect x="1284.1" y="63.3" width="1.7" height="1.7" fill="#6c6c6c"/><rect x="1296.8" y="56.9" width="1.6" height="1.6" fill="#3a3a3a"/><rect x="1298.4" y="58.7" width="1.7" height="1.7" fill="#6c6c6c"/><rect x="1292.1" y="61.5" width="1.6" height="1.6" fill="#3a3a3a"/><rect x="1293.7" y="63.3" width="1.7" height="1.7" fill="#6c6c6c"/><rect x="1306.4" y="56.9" width="1.6" height="1.6" fill="#3a3a3a"/><rect x="1308.0" y="58.7" width="1.7" height="1.7" fill="#6c6c6c"/><rect x="1301.7" y="61.5" width="1.6" height="1.6" fill="#3a3a3a"/><rect x="1303.3" y="63.3" width="1.7" height="1.7" fill="#6c6c6c"/><rect x="1316.0" y="56.9" width="1.6" height="1.6" fill="#3a3a3a"/><rect x="1317.6" y="58.7" width="1.7" height="1.7" fill="#6c6c6c"/><rect x="1311.3" y="61.5" width="1.6" height="1.6" fill="#3a3a3a"/><rect x="1312.9" y="63.3" width="1.7" height="1.7" fill="#6c6c6c"/><rect x="1325.6" y="56.9" width="1.6" height="1.6" fill="#3a3a3a"/><rect x="1327.2" y="58.7" width="1.7" height="1.7" fill="#6c6c6c"/><rect x="1320.9" y="61.5" width="1.6" height="1.6" fill="#3a3a3a"/><rect x="1322.5" y="63.3" width="1.7" height="1.7" fill="#6c6c6c"/><rect x="1335.2" y="56.9" width="1.6" height="1.6" fill="#3a3a3a"/><rect x="1336.8" y="58.7" width="1.7" height="1.7" fill="#6c6c6c"/><rect x="1330.5" y="61.5" width="1.6" height="1.6" fill="#3a3a3a"/><rect x="1332.1" y="63.3" width="1.7" height="1.7" fill="#6c6c6c"/><rect x="1344.8" y="56.9" width="1.6" height="1.6" fill="#3a3a3a"/><rect x="1346.4" y="58.7" width="1.7" height="1.7" fill="#6c6c6c"/><rect x="1340.1" y="61.5" width="1.6" height="1.6" fill="#3a3a3a"/><rect x="1341.7" y="63.3" width="1.7" height="1.7" fill="#6c6c6c"/><rect x="1354.4" y="56.9" width="1.6" height="1.6" fill="#3a3a3a"/><rect x="1356.0" y="58.7" width="1.7" height="1.7" fill="#6c6c6c"/><rect x="1349.7" y="61.5" width="1.6" height="1.6" fill="#3a3a3a"/><rect x="1351.3" y="63.3" width="1.7" height="1.7" fill="#6c6c6c"/><rect x="1364.0" y="56.9" width="1.6" height="1.6" fill="#3a3a3a"/><rect x="1365.6" y="58.7" width="1.7" height="1.7" fill="#6c6c6c"/><rect x="1359.3" y="61.5" width="1.6" height="1.6" fill="#3a3a3a"/><rect x="1360.9" y="63.3" width="1.7" height="1.7" fill="#6c6c6c"/><rect x="1373.6" y="56.9" width="1.6" height="1.6" fill="#3a3a3a"/><rect x="1375.2" y="58.7" width="1.7" height="1.7" fill="#6c6c6c"/><rect x="1368.9" y="61.5" width="1.6" height="1.6" fill="#3a3a3a"/><rect x="1370.5" y="63.3" width="1.7" height="1.7" fill="#6c6c6c"/><rect x="1383.2" y="56.9" width="1.6" height="1.6" fill="#3a3a3a"/><rect x="1384.8" y="58.7" width="1.7" height="1.7" fill="#6c6c6c"/><rect x="1378.5" y="61.5" width="1.6" height="1.6" fill="#3a3a3a"/><rect x="1380.1" y="63.3" width="1.7" height="1.7" fill="#6c6c6c"/><rect x="1392.8" y="56.9" width="1.6" height="1.6" fill="#3a3a3a"/><rect x="1394.4" y="58.7" width="1.7" height="1.7" fill="#6c6c6c"/><rect x="1388.1" y="61.5" width="1.6" height="1.6" fill="#3a3a3a"/><rect x="1389.7" y="63.3" width="1.7" height="1.7" fill="#6c6c6c"/><rect x="1402.4" y="56.9" width="1.6" height="1.6" fill="#3a3a3a"/><rect x="1404.0" y="58.7" width="1.7" height="1.7" fill="#6c6c6c"/><rect x="1397.7" y="61.5" width="1.6" height="1.6" fill="#3a3a3a"/><rect x="1399.3" y="63.3" width="1.7" height="1.7" fill="#6c6c6c"/><rect x="1412.0" y="56.9" width="1.6" height="1.6" fill="#3a3a3a"/><rect x="1413.6" y="58.7" width="1.7" height="1.7" fill="#6c6c6c"/><rect x="1407.3" y="61.5" width="1.6" height="1.6" fill="#3a3a3a"/><rect x="1408.9" y="63.3" width="1.7" height="1.7" fill="#6c6c6c"/><rect x="1421.6" y="56.9" width="1.6" height="1.6" fill="#3a3a3a"/><rect x="1423.2" y="58.7" width="1.7" height="1.7" fill="#6c6c6c"/><rect x="1416.9" y="61.5" width="1.6" height="1.6" fill="#3a3a3a"/><rect x="1418.5" y="63.3" width="1.7" height="1.7" fill="#6c6c6c"/><rect x="1431.2" y="56.9" width="1.6" height="1.6" fill="#3a3a3a"/><rect x="1432.8" y="58.7" width="1.7" height="1.7" fill="#6c6c6c"/><rect x="1426.5" y="61.5" width="1.6" height="1.6" fill="#3a3a3a"/><rect x="1428.1" y="63.3" width="1.7" height="1.7" fill="#6c6c6c"/><rect x="1440.8" y="56.9" width="1.6" height="1.6" fill="#3a3a3a"/><rect x="1442.4" y="58.7" width="1.7" height="1.7" fill="#6c6c6c"/><rect x="1436.1" y="61.5" width="1.6" height="1.6" fill="#3a3a3a"/><rect x="1437.7" y="63.3" width="1.7" height="1.7" fill="#6c6c6c"/><rect x="1450.4" y="56.9" width="1.6" height="1.6" fill="#3a3a3a"/><rect x="1452.0" y="58.7" width="1.7" height="1.7" fill="#6c6c6c"/><rect x="1445.7" y="61.5" width="1.6" height="1.6" fill="#3a3a3a"/><rect x="1447.3" y="63.3" width="1.7" height="1.7" fill="#6c6c6c"/><rect x="1460.0" y="56.9" width="1.6" height="1.6" fill="#3a3a3a"/><rect x="1461.6" y="58.7" width="1.7" height="1.7" fill="#6c6c6c"/><rect x="1455.3" y="61.5" width="1.6" height="1.6" fill="#3a3a3a"/><rect x="1456.9" y="63.3" width="1.7" height="1.7" fill="#6c6c6c"/><rect x="3.9" y="-0.8" width="1.6" height="1.6" fill="#3a3a3a"/><rect x="5.5" y="1.0" width="1.7" height="1.7" fill="#6c6c6c"/><rect x="8.4" y="3.9" width="1.6" height="1.6" fill="#3a3a3a"/><rect x="10.0" y="5.7" width="1.7" height="1.7" fill="#6c6c6c"/><rect x="3.9" y="8.8" width="1.6" height="1.6" fill="#3a3a3a"/><rect x="5.5" y="10.6" width="1.7" height="1.7" fill="#6c6c6c"/><rect x="8.4" y="13.5" width="1.6" height="1.6" fill="#3a3a3a"/><rect x="10.0" y="15.3" width="1.7" height="1.7" fill="#6c6c6c"/><rect x="3.9" y="18.4" width="1.6" height="1.6" fill="#3a3a3a"/><rect x="5.5" y="20.2" width="1.7" height="1.7" fill="#6c6c6c"/><rect x="8.4" y="23.1" width="1.6" height="1.6" fill="#3a3a3a"/><rect x="10.0" y="24.9" width="1.7" height="1.7" fill="#6c6c6c"/><rect x="3.9" y="28.0" width="1.6" height="1.6" fill="#3a3a3a"/><rect x="5.5" y="29.8" width="1.7" height="1.7" fill="#6c6c6c"/><rect x="8.4" y="32.7" width="1.6" height="1.6" fill="#3a3a3a"/><rect x="10.0" y="34.5" width="1.7" height="1.7" fill="#6c6c6c"/><rect x="3.9" y="37.6" width="1.6" height="1.6" fill="#3a3a3a"/><rect x="5.5" y="39.4" width="1.7" height="1.7" fill="#6c6c6c"/><rect x="8.4" y="42.3" width="1.6" height="1.6" fill="#3a3a3a"/><rect x="10.0" y="44.1" width="1.7" height="1.7" fill="#6c6c6c"/><rect x="3.9" y="117.2" width="1.6" height="1.6" fill="#3a3a3a"/><rect x="5.5" y="119.0" width="1.7" height="1.7" fill="#6c6c6c"/><rect x="8.4" y="121.9" width="1.6" height="1.6" fill="#3a3a3a"/><rect x="10.0" y="123.7" width="1.7" height="1.7" fill="#6c6c6c"/><rect x="3.9" y="126.8" width="1.6" height="1.6" fill="#3a3a3a"/><rect x="5.5" y="128.6" width="1.7" height="1.7" fill="#6c6c6c"/><rect x="8.4" y="131.5" width="1.6" height="1.6" fill="#3a3a3a"/><rect x="10.0" y="133.3" width="1.7" height="1.7" fill="#6c6c6c"/><rect x="3.9" y="136.4" width="1.6" height="1.6" fill="#3a3a3a"/><rect x="5.5" y="138.2" width="1.7" height="1.7" fill="#6c6c6c"/><rect x="8.4" y="141.1" width="1.6" height="1.6" fill="#3a3a3a"/><rect x="10.0" y="142.9" width="1.7" height="1.7" fill="#6c6c6c"/><rect x="3.9" y="146.0" width="1.6" height="1.6" fill="#3a3a3a"/><rect x="5.5" y="147.8" width="1.7" height="1.7" fill="#6c6c6c"/><rect x="8.4" y="150.7" width="1.6" height="1.6" fill="#3a3a3a"/><rect x="10.0" y="152.5" width="1.7" height="1.7" fill="#6c6c6c"/><rect x="3.9" y="155.6" width="1.6" height="1.6" fill="#3a3a3a"/><rect x="5.5" y="157.4" width="1.7" height="1.7" fill="#6c6c6c"/><rect x="8.4" y="160.3" width="1.6" height="1.6" fill="#3a3a3a"/><rect x="10.0" y="162.1" width="1.7" height="1.7" fill="#6c6c6c"/><rect x="3.9" y="165.2" width="1.6" height="1.6" fill="#3a3a3a"/><rect x="5.5" y="167.0" width="1.7" height="1.7" fill="#6c6c6c"/><rect x="8.4" y="169.9" width="1.6" height="1.6" fill="#3a3a3a"/><rect x="10.0" y="171.7" width="1.7" height="1.7" fill="#6c6c6c"/><rect x="3.9" y="174.8" width="1.6" height="1.6" fill="#3a3a3a"/><rect x="5.5" y="176.6" width="1.7" height="1.7" fill="#6c6c6c"/><rect x="8.4" y="179.5" width="1.6" height="1.6" fill="#3a3a3a"/><rect x="10.0" y="181.3" width="1.7" height="1.7" fill="#6c6c6c"/><rect x="3.9" y="184.4" width="1.6" height="1.6" fill="#3a3a3a"/><rect x="5.5" y="186.2" width="1.7" height="1.7" fill="#6c6c6c"/><rect x="8.4" y="189.1" width="1.6" height="1.6" fill="#3a3a3a"/><rect x="10.0" y="190.9" width="1.7" height="1.7" fill="#6c6c6c"/><rect x="3.4" y="209.7" width="1.6" height="1.6" fill="#3a3a3a"/><rect x="5.0" y="211.5" width="1.7" height="1.7" fill="#6c6c6c"/><rect x="8.1" y="214.2" width="1.6" height="1.6" fill="#3a3a3a"/><rect x="9.7" y="216.0" width="1.7" height="1.7" fill="#6c6c6c"/><rect x="13.0" y="209.7" width="1.6" height="1.6" fill="#3a3a3a"/><rect x="14.6" y="211.5" width="1.7" height="1.7" fill="#6c6c6c"/><rect x="17.7" y="214.2" width="1.6" height="1.6" fill="#3a3a3a"/><rect x="19.3" y="216.0" width="1.7" height="1.7" fill="#6c6c6c"/><rect x="22.6" y="209.7" width="1.6" height="1.6" fill="#3a3a3a"/><rect x="24.2" y="211.5" width="1.7" height="1.7" fill="#6c6c6c"/><rect x="27.3" y="214.2" width="1.6" height="1.6" fill="#3a3a3a"/><rect x="28.9" y="216.0" width="1.7" height="1.7" fill="#6c6c6c"/><rect x="32.2" y="209.7" width="1.6" height="1.6" fill="#3a3a3a"/><rect x="33.8" y="211.5" width="1.7" height="1.7" fill="#6c6c6c"/><rect x="36.9" y="214.2" width="1.6" height="1.6" fill="#3a3a3a"/><rect x="38.5" y="216.0" width="1.7" height="1.7" fill="#6c6c6c"/><rect x="41.8" y="209.7" width="1.6" height="1.6" fill="#3a3a3a"/><rect x="43.4" y="211.5" width="1.7" height="1.7" fill="#6c6c6c"/><rect x="46.5" y="214.2" width="1.6" height="1.6" fill="#3a3a3a"/><rect x="48.1" y="216.0" width="1.7" height="1.7" fill="#6c6c6c"/><rect x="51.4" y="209.7" width="1.6" height="1.6" fill="#3a3a3a"/><rect x="53.0" y="211.5" width="1.7" height="1.7" fill="#6c6c6c"/><rect x="56.1" y="214.2" width="1.6" height="1.6" fill="#3a3a3a"/><rect x="57.7" y="216.0" width="1.7" height="1.7" fill="#6c6c6c"/><rect x="61.0" y="209.7" width="1.6" height="1.6" fill="#3a3a3a"/><rect x="62.6" y="211.5" width="1.7" height="1.7" fill="#6c6c6c"/><rect x="65.7" y="214.2" width="1.6" height="1.6" fill="#3a3a3a"/><rect x="67.3" y="216.0" width="1.7" height="1.7" fill="#6c6c6c"/><rect x="1416.4" y="209.7" width="1.6" height="1.6" fill="#3a3a3a"/><rect x="1418.0" y="211.5" width="1.7" height="1.7" fill="#6c6c6c"/><rect x="1421.1" y="214.2" width="1.6" height="1.6" fill="#3a3a3a"/><rect x="1422.7" y="216.0" width="1.7" height="1.7" fill="#6c6c6c"/><rect x="1426.0" y="209.7" width="1.6" height="1.6" fill="#3a3a3a"/><rect x="1427.6" y="211.5" width="1.7" height="1.7" fill="#6c6c6c"/><rect x="1430.7" y="214.2" width="1.6" height="1.6" fill="#3a3a3a"/><rect x="1432.3" y="216.0" width="1.7" height="1.7" fill="#6c6c6c"/><rect x="1435.6" y="209.7" width="1.6" height="1.6" fill="#3a3a3a"/><rect x="1437.2" y="211.5" width="1.7" height="1.7" fill="#6c6c6c"/><rect x="1440.3" y="214.2" width="1.6" height="1.6" fill="#3a3a3a"/><rect x="1441.9" y="216.0" width="1.7" height="1.7" fill="#6c6c6c"/><rect x="1445.2" y="209.7" width="1.6" height="1.6" fill="#3a3a3a"/><rect x="1446.8" y="211.5" width="1.7" height="1.7" fill="#6c6c6c"/><rect x="1449.9" y="214.2" width="1.6" height="1.6" fill="#3a3a3a"/><rect x="1451.5" y="216.0" width="1.7" height="1.7" fill="#6c6c6c"/><rect x="1454.8" y="209.7" width="1.6" height="1.6" fill="#3a3a3a"/><rect x="1456.4" y="211.5" width="1.7" height="1.7" fill="#6c6c6c"/><rect x="1459.5" y="214.2" width="1.6" height="1.6" fill="#3a3a3a"/><rect x="1461.1" y="216.0" width="1.7" height="1.7" fill="#6c6c6c"/><rect x="1464.4" y="209.7" width="1.6" height="1.6" fill="#3a3a3a"/><rect x="1466.0" y="211.5" width="1.7" height="1.7" fill="#6c6c6c"/><rect x="1469.1" y="214.2" width="1.6" height="1.6" fill="#3a3a3a"/><rect x="1470.7" y="216.0" width="1.7" height="1.7" fill="#6c6c6c"/><rect x="1474.0" y="209.7" width="1.6" height="1.6" fill="#3a3a3a"/><rect x="1475.6" y="211.5" width="1.7" height="1.7" fill="#6c6c6c"/><rect x="1478.7" y="214.2" width="1.6" height="1.6" fill="#3a3a3a"/><rect x="1480.3" y="216.0" width="1.7" height="1.7" fill="#6c6c6c"/><rect x="1483.6" y="209.7" width="1.6" height="1.6" fill="#3a3a3a"/><rect x="1485.2" y="211.5" width="1.7" height="1.7" fill="#6c6c6c"/><rect x="1488.3" y="214.2" width="1.6" height="1.6" fill="#3a3a3a"/><rect x="1489.9" y="216.0" width="1.7" height="1.7" fill="#6c6c6c"/><rect x="520.4" y="353.7" width="1.6" height="1.6" fill="#3a3a3a"/><rect x="522.0" y="355.5" width="1.7" height="1.7" fill="#6c6c6c"/><rect x="528.4" y="353.7" width="1.6" height="1.6" fill="#3a3a3a"/><rect x="530.0" y="355.5" width="1.7" height="1.7" fill="#6c6c6c"/><rect x="536.4" y="353.7" width="1.6" height="1.6" fill="#3a3a3a"/><rect x="538.0" y="355.5" width="1.7" height="1.7" fill="#6c6c6c"/><rect x="544.4" y="353.7" width="1.6" height="1.6" fill="#3a3a3a"/><rect x="546.0" y="355.5" width="1.7" height="1.7" fill="#6c6c6c"/><rect x="552.4" y="353.7" width="1.6" height="1.6" fill="#3a3a3a"/><rect x="554.0" y="355.5" width="1.7" height="1.7" fill="#6c6c6c"/><rect x="560.4" y="353.7" width="1.6" height="1.6" fill="#3a3a3a"/><rect x="562.0" y="355.5" width="1.7" height="1.7" fill="#6c6c6c"/><rect x="568.4" y="353.7" width="1.6" height="1.6" fill="#3a3a3a"/><rect x="570.0" y="355.5" width="1.7" height="1.7" fill="#6c6c6c"/><rect x="576.4" y="353.7" width="1.6" height="1.6" fill="#3a3a3a"/><rect x="578.0" y="355.5" width="1.7" height="1.7" fill="#6c6c6c"/><rect x="584.4" y="353.7" width="1.6" height="1.6" fill="#3a3a3a"/><rect x="586.0" y="355.5" width="1.7" height="1.7" fill="#6c6c6c"/><rect x="592.4" y="353.7" width="1.6" height="1.6" fill="#3a3a3a"/><rect x="594.0" y="355.5" width="1.7" height="1.7" fill="#6c6c6c"/><rect x="600.4" y="353.7" width="1.6" height="1.6" fill="#3a3a3a"/><rect x="602.0" y="355.5" width="1.7" height="1.7" fill="#6c6c6c"/><rect x="608.4" y="353.7" width="1.6" height="1.6" fill="#3a3a3a"/><rect x="610.0" y="355.5" width="1.7" height="1.7" fill="#6c6c6c"/><rect x="616.4" y="353.7" width="1.6" height="1.6" fill="#3a3a3a"/><rect x="618.0" y="355.5" width="1.7" height="1.7" fill="#6c6c6c"/><rect x="624.4" y="353.7" width="1.6" height="1.6" fill="#3a3a3a"/><rect x="626.0" y="355.5" width="1.7" height="1.7" fill="#6c6c6c"/><rect x="632.4" y="353.7" width="1.6" height="1.6" fill="#3a3a3a"/><rect x="634.0" y="355.5" width="1.7" height="1.7" fill="#6c6c6c"/><rect x="640.4" y="353.7" width="1.6" height="1.6" fill="#3a3a3a"/><rect x="642.0" y="355.5" width="1.7" height="1.7" fill="#6c6c6c"/><rect x="648.4" y="353.7" width="1.6" height="1.6" fill="#3a3a3a"/><rect x="650.0" y="355.5" width="1.7" height="1.7" fill="#6c6c6c"/><rect x="656.4" y="353.7" width="1.6" height="1.6" fill="#3a3a3a"/><rect x="658.0" y="355.5" width="1.7" height="1.7" fill="#6c6c6c"/><rect x="664.4" y="353.7" width="1.6" height="1.6" fill="#3a3a3a"/><rect x="666.0" y="355.5" width="1.7" height="1.7" fill="#6c6c6c"/><rect x="672.4" y="353.7" width="1.6" height="1.6" fill="#3a3a3a"/><rect x="674.0" y="355.5" width="1.7" height="1.7" fill="#6c6c6c"/><rect x="680.4" y="353.7" width="1.6" height="1.6" fill="#3a3a3a"/><rect x="682.0" y="355.5" width="1.7" height="1.7" fill="#6c6c6c"/><rect x="688.4" y="353.7" width="1.6" height="1.6" fill="#3a3a3a"/><rect x="690.0" y="355.5" width="1.7" height="1.7" fill="#6c6c6c"/><rect x="696.4" y="353.7" width="1.6" height="1.6" fill="#3a3a3a"/><rect x="698.0" y="355.5" width="1.7" height="1.7" fill="#6c6c6c"/><rect x="704.4" y="353.7" width="1.6" height="1.6" fill="#3a3a3a"/><rect x="706.0" y="355.5" width="1.7" height="1.7" fill="#6c6c6c"/><rect x="712.4" y="353.7" width="1.6" height="1.6" fill="#3a3a3a"/><rect x="714.0" y="355.5" width="1.7" height="1.7" fill="#6c6c6c"/><rect x="720.4" y="353.7" width="1.6" height="1.6" fill="#3a3a3a"/><rect x="722.0" y="355.5" width="1.7" height="1.7" fill="#6c6c6c"/><rect x="728.4" y="353.7" width="1.6" height="1.6" fill="#3a3a3a"/><rect x="730.0" y="355.5" width="1.7" height="1.7" fill="#6c6c6c"/><rect x="736.4" y="353.7" width="1.6" height="1.6" fill="#3a3a3a"/><rect x="738.0" y="355.5" width="1.7" height="1.7" fill="#6c6c6c"/><rect x="744.4" y="353.7" width="1.6" height="1.6" fill="#3a3a3a"/><rect x="746.0" y="355.5" width="1.7" height="1.7" fill="#6c6c6c"/><rect x="752.4" y="353.7" width="1.6" height="1.6" fill="#3a3a3a"/><rect x="754.0" y="355.5" width="1.7" height="1.7" fill="#6c6c6c"/><rect x="760.4" y="353.7" width="1.6" height="1.6" fill="#3a3a3a"/><rect x="762.0" y="355.5" width="1.7" height="1.7" fill="#6c6c6c"/><rect x="768.4" y="353.7" width="1.6" height="1.6" fill="#3a3a3a"/><rect x="770.0" y="355.5" width="1.7" height="1.7" fill="#6c6c6c"/><rect x="776.4" y="353.7" width="1.6" height="1.6" fill="#3a3a3a"/><rect x="778.0" y="355.5" width="1.7" height="1.7" fill="#6c6c6c"/><rect x="784.4" y="353.7" width="1.6" height="1.6" fill="#3a3a3a"/><rect x="786.0" y="355.5" width="1.7" height="1.7" fill="#6c6c6c"/><rect x="792.4" y="353.7" width="1.6" height="1.6" fill="#3a3a3a"/><rect x="794.0" y="355.5" width="1.7" height="1.7" fill="#6c6c6c"/><rect x="800.4" y="353.7" width="1.6" height="1.6" fill="#3a3a3a"/><rect x="802.0" y="355.5" width="1.7" height="1.7" fill="#6c6c6c"/><rect x="808.4" y="353.7" width="1.6" height="1.6" fill="#3a3a3a"/><rect x="810.0" y="355.5" width="1.7" height="1.7" fill="#6c6c6c"/><rect x="816.4" y="353.7" width="1.6" height="1.6" fill="#3a3a3a"/><rect x="818.0" y="355.5" width="1.7" height="1.7" fill="#6c6c6c"/><rect x="824.4" y="353.7" width="1.6" height="1.6" fill="#3a3a3a"/><rect x="826.0" y="355.5" width="1.7" height="1.7" fill="#6c6c6c"/><rect x="832.4" y="353.7" width="1.6" height="1.6" fill="#3a3a3a"/><rect x="834.0" y="355.5" width="1.7" height="1.7" fill="#6c6c6c"/><rect x="840.4" y="353.7" width="1.6" height="1.6" fill="#3a3a3a"/><rect x="842.0" y="355.5" width="1.7" height="1.7" fill="#6c6c6c"/><rect x="848.4" y="353.7" width="1.6" height="1.6" fill="#3a3a3a"/><rect x="850.0" y="355.5" width="1.7" height="1.7" fill="#6c6c6c"/><rect x="856.4" y="353.7" width="1.6" height="1.6" fill="#3a3a3a"/><rect x="858.0" y="355.5" width="1.7" height="1.7" fill="#6c6c6c"/><rect x="864.4" y="353.7" width="1.6" height="1.6" fill="#3a3a3a"/><rect x="866.0" y="355.5" width="1.7" height="1.7" fill="#6c6c6c"/><rect x="872.4" y="353.7" width="1.6" height="1.6" fill="#3a3a3a"/><rect x="874.0" y="355.5" width="1.7" height="1.7" fill="#6c6c6c"/><rect x="880.4" y="353.7" width="1.6" height="1.6" fill="#3a3a3a"/><rect x="882.0" y="355.5" width="1.7" height="1.7" fill="#6c6c6c"/><rect x="888.4" y="353.7" width="1.6" height="1.6" fill="#3a3a3a"/><rect x="890.0" y="355.5" width="1.7" height="1.7" fill="#6c6c6c"/><rect x="896.4" y="353.7" width="1.6" height="1.6" fill="#3a3a3a"/><rect x="898.0" y="355.5" width="1.7" height="1.7" fill="#6c6c6c"/><rect x="904.4" y="353.7" width="1.6" height="1.6" fill="#3a3a3a"/><rect x="906.0" y="355.5" width="1.7" height="1.7" fill="#6c6c6c"/><rect x="912.4" y="353.7" width="1.6" height="1.6" fill="#3a3a3a"/><rect x="914.0" y="355.5" width="1.7" height="1.7" fill="#6c6c6c"/><rect x="920.4" y="353.7" width="1.6" height="1.6" fill="#3a3a3a"/><rect x="922.0" y="355.5" width="1.7" height="1.7" fill="#6c6c6c"/><rect x="928.4" y="353.7" width="1.6" height="1.6" fill="#3a3a3a"/><rect x="930.0" y="355.5" width="1.7" height="1.7" fill="#6c6c6c"/><rect x="936.4" y="353.7" width="1.6" height="1.6" fill="#3a3a3a"/><rect x="938.0" y="355.5" width="1.7" height="1.7" fill="#6c6c6c"/><rect x="944.4" y="353.7" width="1.6" height="1.6" fill="#3a3a3a"/><rect x="946.0" y="355.5" width="1.7" height="1.7" fill="#6c6c6c"/><rect x="952.4" y="353.7" width="1.6" height="1.6" fill="#3a3a3a"/><rect x="954.0" y="355.5" width="1.7" height="1.7" fill="#6c6c6c"/></svg>
</body></html>
